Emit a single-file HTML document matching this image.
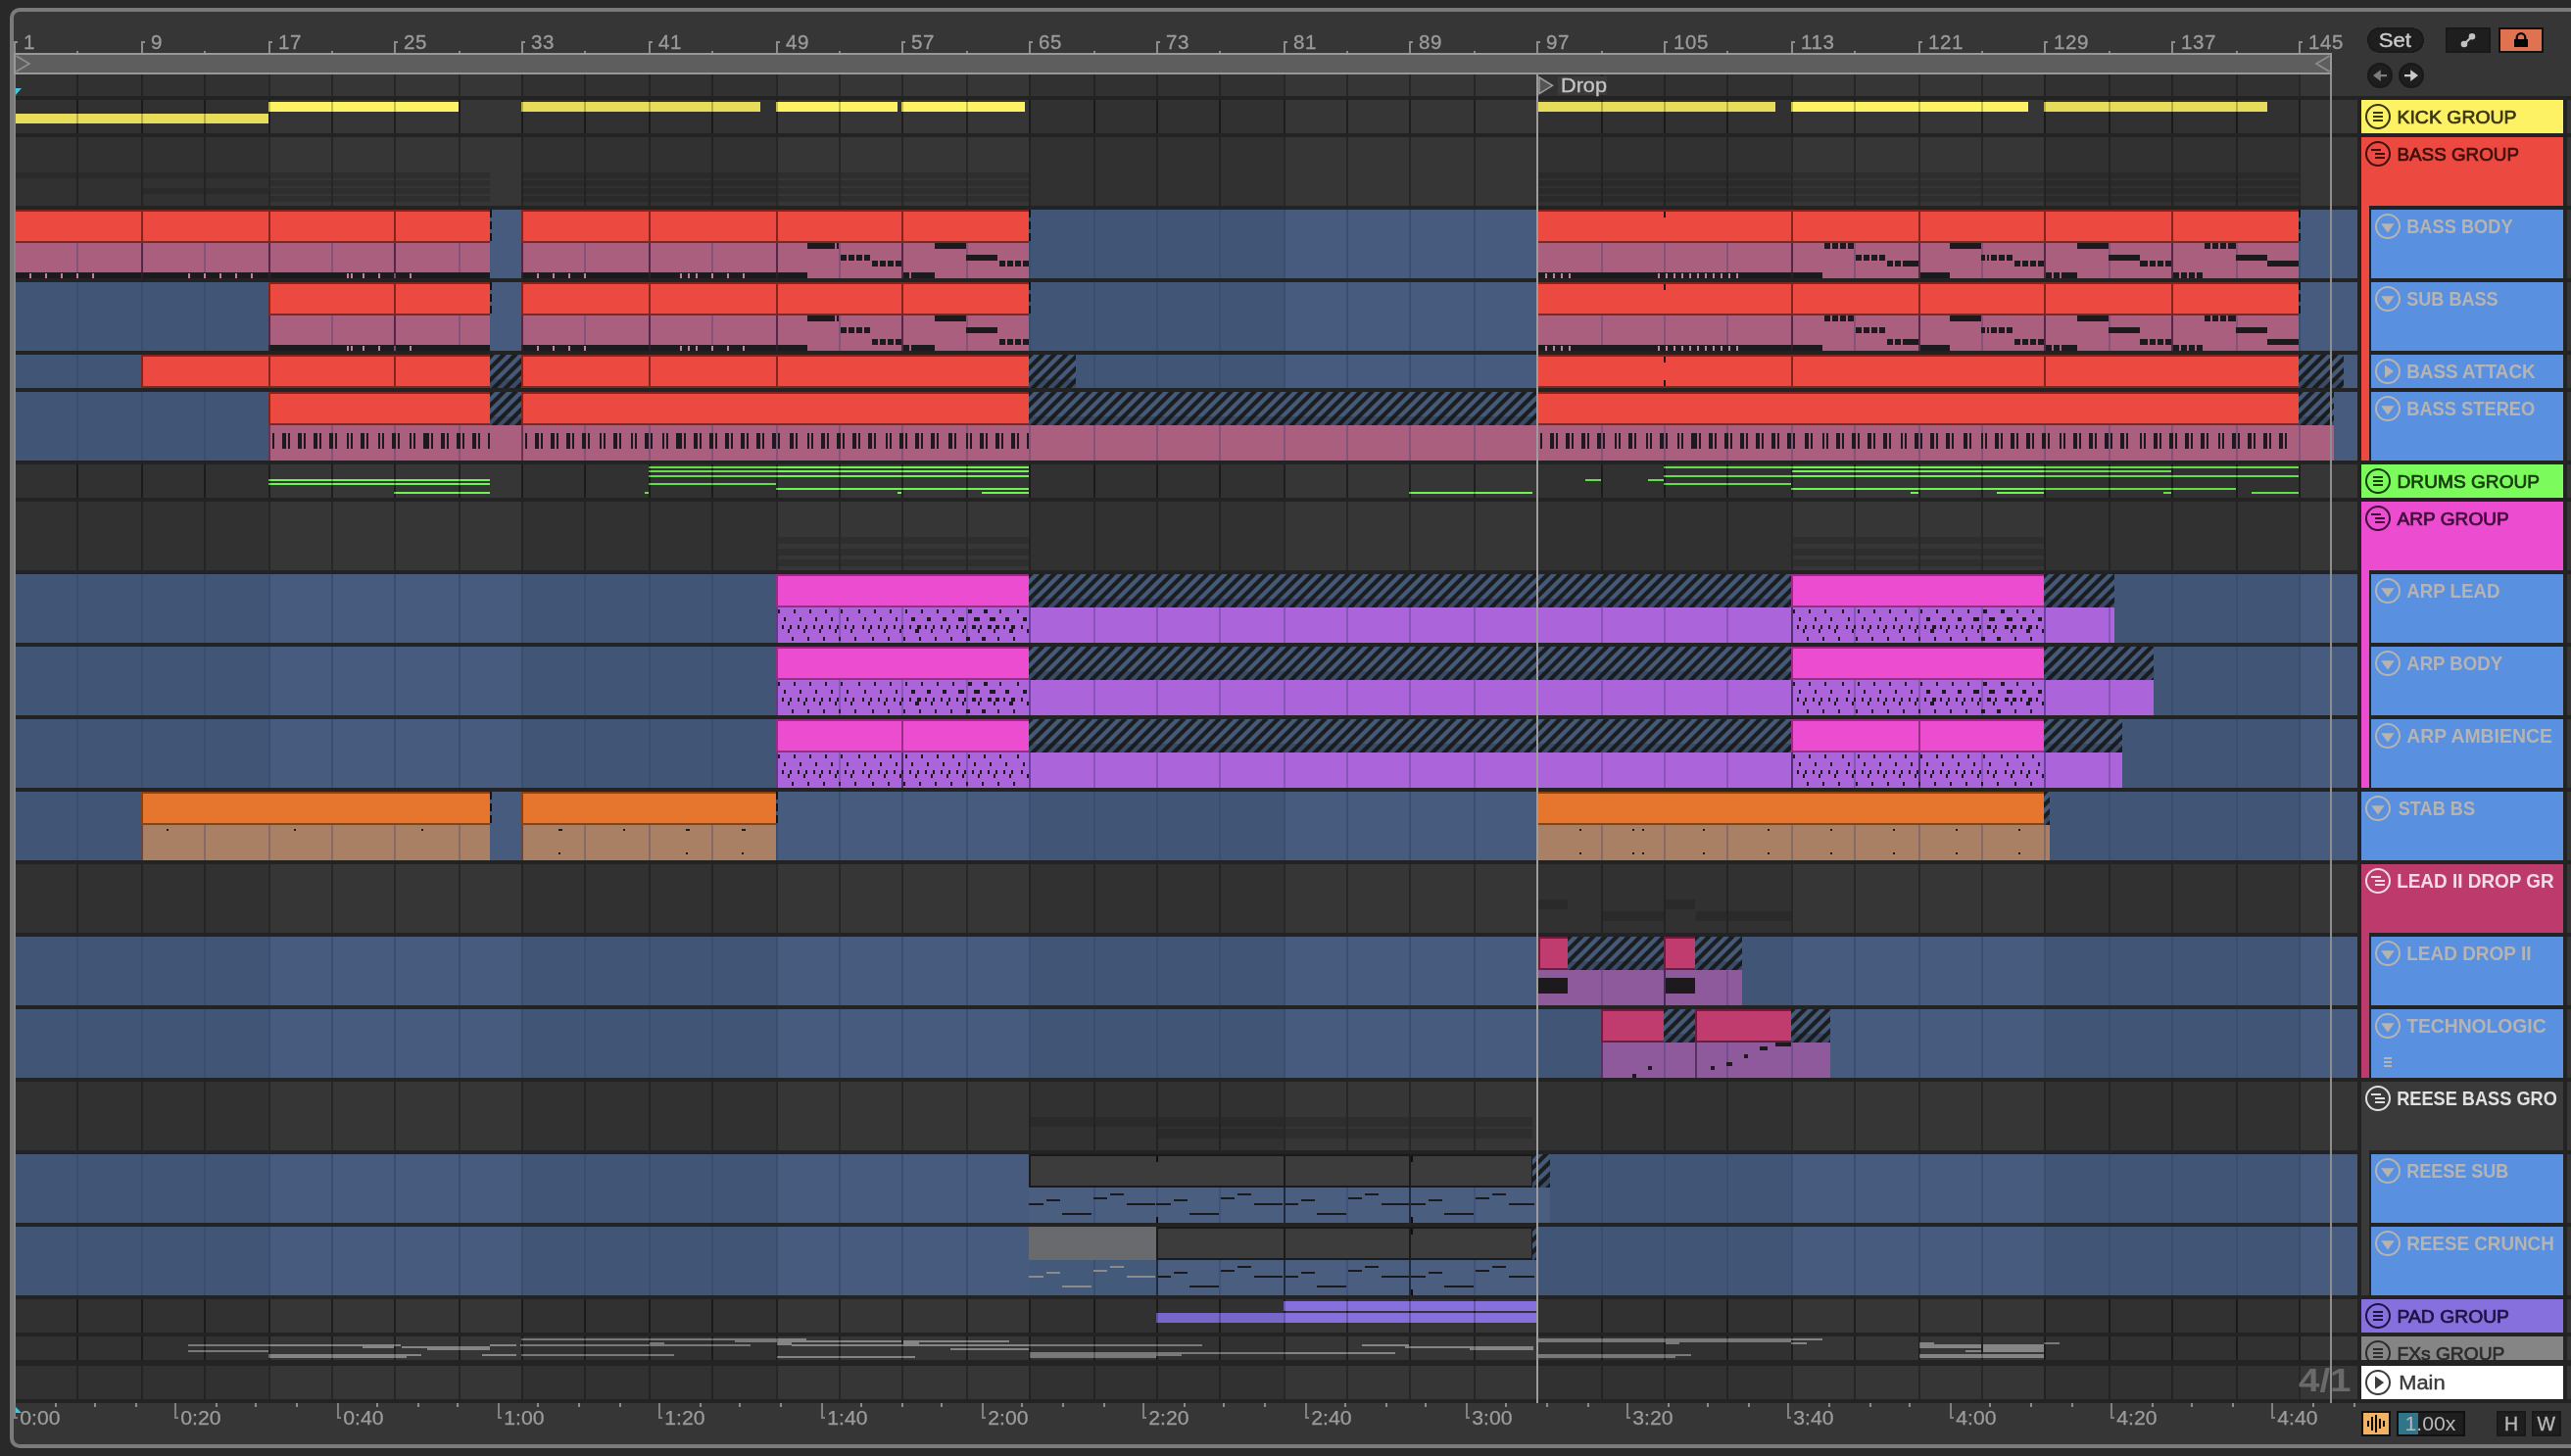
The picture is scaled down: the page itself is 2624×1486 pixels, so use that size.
<!DOCTYPE html>
<html><head><meta charset="utf-8"><title>Arrangement</title>
<style>
html,body{margin:0;padding:0;background:#292929;overflow:hidden;}
body{width:2624px;height:1486px;font-family:"Liberation Sans",sans-serif;}
svg text{font-family:"Liberation Sans",sans-serif;}
svg rect{shape-rendering:crispEdges;}
#root{position:absolute;left:0;top:0;width:2624px;height:1486px;overflow:hidden;will-change:transform;}
</style></head><body>
<div id="root">
<svg width="2624" height="1486" viewBox="0 0 2624 1486">
<defs>
<pattern id="hatch" patternUnits="userSpaceOnUse" width="12" height="12">
<rect width="12" height="12" fill="#1d1d1e"/>
<path d="M6 -1 L12 -1 L-1 12 L-1 6 Z M13 4 L13 10 L10 13 L4 13 Z" fill="#445a7b" shape-rendering="geometricPrecision"/>
</pattern>
</defs>
<g>
<rect x="12" y="10" width="2700" height="1466" rx="8" ry="8" fill="#363636" stroke="#7a7a7a" stroke-width="4" style="shape-rendering:geometricPrecision"/>
<rect x="16" y="98" width="2608" height="1334" fill="#232323"/>
<rect x="2406" y="76" width="214" height="22" fill="#363636"/>
<rect x="2620" y="102" width="4" height="34" fill="#363636"/>
<rect x="2620" y="140" width="4" height="70" fill="#363636"/>
<rect x="2620" y="214" width="4" height="70" fill="#363636"/>
<rect x="2620" y="288" width="4" height="70" fill="#363636"/>
<rect x="2620" y="362" width="4" height="34" fill="#363636"/>
<rect x="2620" y="400" width="4" height="70" fill="#363636"/>
<rect x="2620" y="474" width="4" height="34" fill="#363636"/>
<rect x="2620" y="512" width="4" height="70" fill="#363636"/>
<rect x="2620" y="586" width="4" height="70" fill="#363636"/>
<rect x="2620" y="660" width="4" height="70" fill="#363636"/>
<rect x="2620" y="734" width="4" height="70" fill="#363636"/>
<rect x="2620" y="808" width="4" height="70" fill="#363636"/>
<rect x="2620" y="882" width="4" height="70" fill="#363636"/>
<rect x="2620" y="956" width="4" height="70" fill="#363636"/>
<rect x="2620" y="1030" width="4" height="70" fill="#363636"/>
<rect x="2620" y="1104" width="4" height="70" fill="#363636"/>
<rect x="2620" y="1178" width="4" height="70" fill="#363636"/>
<rect x="2620" y="1252" width="4" height="70" fill="#363636"/>
<rect x="2620" y="1326" width="4" height="34" fill="#363636"/>
<rect x="2620" y="1364" width="4" height="24" fill="#363636"/>
<rect x="2620" y="1394" width="4" height="34" fill="#363636"/>
<rect x="16" y="76" width="2390" height="22" fill="#363636"/>
<rect x="16" y="102" width="2390" height="34" fill="#363636"/>
<rect x="16" y="140" width="2390" height="70" fill="#363636"/>
<rect x="16" y="214" width="2390" height="70" fill="#465b7d"/>
<rect x="16" y="214" width="258" height="70" fill="#415677"/>
<rect x="532" y="214" width="260" height="70" fill="#415677"/>
<rect x="1050" y="214" width="260" height="70" fill="#415677"/>
<rect x="1568" y="214" width="260" height="70" fill="#415677"/>
<rect x="2086" y="214" width="260" height="70" fill="#415677"/>
<rect x="78" y="214" width="2" height="70" fill="#3a4e70"/>
<rect x="144" y="214" width="2" height="70" fill="#3a4e70"/>
<rect x="208" y="214" width="2" height="70" fill="#3a4e70"/>
<rect x="274" y="214" width="2" height="70" fill="#3a4e70"/>
<rect x="338" y="214" width="2" height="70" fill="#3a4e70"/>
<rect x="402" y="214" width="2" height="70" fill="#3a4e70"/>
<rect x="468" y="214" width="2" height="70" fill="#3a4e70"/>
<rect x="532" y="214" width="2" height="70" fill="#3a4e70"/>
<rect x="596" y="214" width="2" height="70" fill="#3a4e70"/>
<rect x="662" y="214" width="2" height="70" fill="#3a4e70"/>
<rect x="726" y="214" width="2" height="70" fill="#3a4e70"/>
<rect x="792" y="214" width="2" height="70" fill="#3a4e70"/>
<rect x="856" y="214" width="2" height="70" fill="#3a4e70"/>
<rect x="920" y="214" width="2" height="70" fill="#3a4e70"/>
<rect x="986" y="214" width="2" height="70" fill="#3a4e70"/>
<rect x="1050" y="214" width="2" height="70" fill="#3a4e70"/>
<rect x="1116" y="214" width="2" height="70" fill="#3a4e70"/>
<rect x="1180" y="214" width="2" height="70" fill="#3a4e70"/>
<rect x="1244" y="214" width="2" height="70" fill="#3a4e70"/>
<rect x="1310" y="214" width="2" height="70" fill="#3a4e70"/>
<rect x="1374" y="214" width="2" height="70" fill="#3a4e70"/>
<rect x="1438" y="214" width="2" height="70" fill="#3a4e70"/>
<rect x="1504" y="214" width="2" height="70" fill="#3a4e70"/>
<rect x="1568" y="214" width="2" height="70" fill="#3a4e70"/>
<rect x="1634" y="214" width="2" height="70" fill="#3a4e70"/>
<rect x="1698" y="214" width="2" height="70" fill="#3a4e70"/>
<rect x="1762" y="214" width="2" height="70" fill="#3a4e70"/>
<rect x="1828" y="214" width="2" height="70" fill="#3a4e70"/>
<rect x="1892" y="214" width="2" height="70" fill="#3a4e70"/>
<rect x="1958" y="214" width="2" height="70" fill="#3a4e70"/>
<rect x="2022" y="214" width="2" height="70" fill="#3a4e70"/>
<rect x="2086" y="214" width="2" height="70" fill="#3a4e70"/>
<rect x="2152" y="214" width="2" height="70" fill="#3a4e70"/>
<rect x="2216" y="214" width="2" height="70" fill="#3a4e70"/>
<rect x="2282" y="214" width="2" height="70" fill="#3a4e70"/>
<rect x="2346" y="214" width="2" height="70" fill="#3a4e70"/>
<rect x="16" y="288" width="2390" height="70" fill="#465b7d"/>
<rect x="16" y="288" width="258" height="70" fill="#415677"/>
<rect x="532" y="288" width="260" height="70" fill="#415677"/>
<rect x="1050" y="288" width="260" height="70" fill="#415677"/>
<rect x="1568" y="288" width="260" height="70" fill="#415677"/>
<rect x="2086" y="288" width="260" height="70" fill="#415677"/>
<rect x="78" y="288" width="2" height="70" fill="#3a4e70"/>
<rect x="144" y="288" width="2" height="70" fill="#3a4e70"/>
<rect x="208" y="288" width="2" height="70" fill="#3a4e70"/>
<rect x="274" y="288" width="2" height="70" fill="#3a4e70"/>
<rect x="338" y="288" width="2" height="70" fill="#3a4e70"/>
<rect x="402" y="288" width="2" height="70" fill="#3a4e70"/>
<rect x="468" y="288" width="2" height="70" fill="#3a4e70"/>
<rect x="532" y="288" width="2" height="70" fill="#3a4e70"/>
<rect x="596" y="288" width="2" height="70" fill="#3a4e70"/>
<rect x="662" y="288" width="2" height="70" fill="#3a4e70"/>
<rect x="726" y="288" width="2" height="70" fill="#3a4e70"/>
<rect x="792" y="288" width="2" height="70" fill="#3a4e70"/>
<rect x="856" y="288" width="2" height="70" fill="#3a4e70"/>
<rect x="920" y="288" width="2" height="70" fill="#3a4e70"/>
<rect x="986" y="288" width="2" height="70" fill="#3a4e70"/>
<rect x="1050" y="288" width="2" height="70" fill="#3a4e70"/>
<rect x="1116" y="288" width="2" height="70" fill="#3a4e70"/>
<rect x="1180" y="288" width="2" height="70" fill="#3a4e70"/>
<rect x="1244" y="288" width="2" height="70" fill="#3a4e70"/>
<rect x="1310" y="288" width="2" height="70" fill="#3a4e70"/>
<rect x="1374" y="288" width="2" height="70" fill="#3a4e70"/>
<rect x="1438" y="288" width="2" height="70" fill="#3a4e70"/>
<rect x="1504" y="288" width="2" height="70" fill="#3a4e70"/>
<rect x="1568" y="288" width="2" height="70" fill="#3a4e70"/>
<rect x="1634" y="288" width="2" height="70" fill="#3a4e70"/>
<rect x="1698" y="288" width="2" height="70" fill="#3a4e70"/>
<rect x="1762" y="288" width="2" height="70" fill="#3a4e70"/>
<rect x="1828" y="288" width="2" height="70" fill="#3a4e70"/>
<rect x="1892" y="288" width="2" height="70" fill="#3a4e70"/>
<rect x="1958" y="288" width="2" height="70" fill="#3a4e70"/>
<rect x="2022" y="288" width="2" height="70" fill="#3a4e70"/>
<rect x="2086" y="288" width="2" height="70" fill="#3a4e70"/>
<rect x="2152" y="288" width="2" height="70" fill="#3a4e70"/>
<rect x="2216" y="288" width="2" height="70" fill="#3a4e70"/>
<rect x="2282" y="288" width="2" height="70" fill="#3a4e70"/>
<rect x="2346" y="288" width="2" height="70" fill="#3a4e70"/>
<rect x="16" y="362" width="2390" height="34" fill="#465b7d"/>
<rect x="16" y="362" width="258" height="34" fill="#415677"/>
<rect x="532" y="362" width="260" height="34" fill="#415677"/>
<rect x="1050" y="362" width="260" height="34" fill="#415677"/>
<rect x="1568" y="362" width="260" height="34" fill="#415677"/>
<rect x="2086" y="362" width="260" height="34" fill="#415677"/>
<rect x="78" y="362" width="2" height="34" fill="#3a4e70"/>
<rect x="144" y="362" width="2" height="34" fill="#3a4e70"/>
<rect x="208" y="362" width="2" height="34" fill="#3a4e70"/>
<rect x="274" y="362" width="2" height="34" fill="#3a4e70"/>
<rect x="338" y="362" width="2" height="34" fill="#3a4e70"/>
<rect x="402" y="362" width="2" height="34" fill="#3a4e70"/>
<rect x="468" y="362" width="2" height="34" fill="#3a4e70"/>
<rect x="532" y="362" width="2" height="34" fill="#3a4e70"/>
<rect x="596" y="362" width="2" height="34" fill="#3a4e70"/>
<rect x="662" y="362" width="2" height="34" fill="#3a4e70"/>
<rect x="726" y="362" width="2" height="34" fill="#3a4e70"/>
<rect x="792" y="362" width="2" height="34" fill="#3a4e70"/>
<rect x="856" y="362" width="2" height="34" fill="#3a4e70"/>
<rect x="920" y="362" width="2" height="34" fill="#3a4e70"/>
<rect x="986" y="362" width="2" height="34" fill="#3a4e70"/>
<rect x="1050" y="362" width="2" height="34" fill="#3a4e70"/>
<rect x="1116" y="362" width="2" height="34" fill="#3a4e70"/>
<rect x="1180" y="362" width="2" height="34" fill="#3a4e70"/>
<rect x="1244" y="362" width="2" height="34" fill="#3a4e70"/>
<rect x="1310" y="362" width="2" height="34" fill="#3a4e70"/>
<rect x="1374" y="362" width="2" height="34" fill="#3a4e70"/>
<rect x="1438" y="362" width="2" height="34" fill="#3a4e70"/>
<rect x="1504" y="362" width="2" height="34" fill="#3a4e70"/>
<rect x="1568" y="362" width="2" height="34" fill="#3a4e70"/>
<rect x="1634" y="362" width="2" height="34" fill="#3a4e70"/>
<rect x="1698" y="362" width="2" height="34" fill="#3a4e70"/>
<rect x="1762" y="362" width="2" height="34" fill="#3a4e70"/>
<rect x="1828" y="362" width="2" height="34" fill="#3a4e70"/>
<rect x="1892" y="362" width="2" height="34" fill="#3a4e70"/>
<rect x="1958" y="362" width="2" height="34" fill="#3a4e70"/>
<rect x="2022" y="362" width="2" height="34" fill="#3a4e70"/>
<rect x="2086" y="362" width="2" height="34" fill="#3a4e70"/>
<rect x="2152" y="362" width="2" height="34" fill="#3a4e70"/>
<rect x="2216" y="362" width="2" height="34" fill="#3a4e70"/>
<rect x="2282" y="362" width="2" height="34" fill="#3a4e70"/>
<rect x="2346" y="362" width="2" height="34" fill="#3a4e70"/>
<rect x="16" y="400" width="2390" height="70" fill="#465b7d"/>
<rect x="16" y="400" width="258" height="70" fill="#415677"/>
<rect x="532" y="400" width="260" height="70" fill="#415677"/>
<rect x="1050" y="400" width="260" height="70" fill="#415677"/>
<rect x="1568" y="400" width="260" height="70" fill="#415677"/>
<rect x="2086" y="400" width="260" height="70" fill="#415677"/>
<rect x="78" y="400" width="2" height="70" fill="#3a4e70"/>
<rect x="144" y="400" width="2" height="70" fill="#3a4e70"/>
<rect x="208" y="400" width="2" height="70" fill="#3a4e70"/>
<rect x="274" y="400" width="2" height="70" fill="#3a4e70"/>
<rect x="338" y="400" width="2" height="70" fill="#3a4e70"/>
<rect x="402" y="400" width="2" height="70" fill="#3a4e70"/>
<rect x="468" y="400" width="2" height="70" fill="#3a4e70"/>
<rect x="532" y="400" width="2" height="70" fill="#3a4e70"/>
<rect x="596" y="400" width="2" height="70" fill="#3a4e70"/>
<rect x="662" y="400" width="2" height="70" fill="#3a4e70"/>
<rect x="726" y="400" width="2" height="70" fill="#3a4e70"/>
<rect x="792" y="400" width="2" height="70" fill="#3a4e70"/>
<rect x="856" y="400" width="2" height="70" fill="#3a4e70"/>
<rect x="920" y="400" width="2" height="70" fill="#3a4e70"/>
<rect x="986" y="400" width="2" height="70" fill="#3a4e70"/>
<rect x="1050" y="400" width="2" height="70" fill="#3a4e70"/>
<rect x="1116" y="400" width="2" height="70" fill="#3a4e70"/>
<rect x="1180" y="400" width="2" height="70" fill="#3a4e70"/>
<rect x="1244" y="400" width="2" height="70" fill="#3a4e70"/>
<rect x="1310" y="400" width="2" height="70" fill="#3a4e70"/>
<rect x="1374" y="400" width="2" height="70" fill="#3a4e70"/>
<rect x="1438" y="400" width="2" height="70" fill="#3a4e70"/>
<rect x="1504" y="400" width="2" height="70" fill="#3a4e70"/>
<rect x="1568" y="400" width="2" height="70" fill="#3a4e70"/>
<rect x="1634" y="400" width="2" height="70" fill="#3a4e70"/>
<rect x="1698" y="400" width="2" height="70" fill="#3a4e70"/>
<rect x="1762" y="400" width="2" height="70" fill="#3a4e70"/>
<rect x="1828" y="400" width="2" height="70" fill="#3a4e70"/>
<rect x="1892" y="400" width="2" height="70" fill="#3a4e70"/>
<rect x="1958" y="400" width="2" height="70" fill="#3a4e70"/>
<rect x="2022" y="400" width="2" height="70" fill="#3a4e70"/>
<rect x="2086" y="400" width="2" height="70" fill="#3a4e70"/>
<rect x="2152" y="400" width="2" height="70" fill="#3a4e70"/>
<rect x="2216" y="400" width="2" height="70" fill="#3a4e70"/>
<rect x="2282" y="400" width="2" height="70" fill="#3a4e70"/>
<rect x="2346" y="400" width="2" height="70" fill="#3a4e70"/>
<rect x="16" y="474" width="2390" height="34" fill="#363636"/>
<rect x="16" y="512" width="2390" height="70" fill="#363636"/>
<rect x="16" y="586" width="2390" height="70" fill="#465b7d"/>
<rect x="16" y="586" width="258" height="70" fill="#415677"/>
<rect x="532" y="586" width="260" height="70" fill="#415677"/>
<rect x="1050" y="586" width="260" height="70" fill="#415677"/>
<rect x="1568" y="586" width="260" height="70" fill="#415677"/>
<rect x="2086" y="586" width="260" height="70" fill="#415677"/>
<rect x="78" y="586" width="2" height="70" fill="#3a4e70"/>
<rect x="144" y="586" width="2" height="70" fill="#3a4e70"/>
<rect x="208" y="586" width="2" height="70" fill="#3a4e70"/>
<rect x="274" y="586" width="2" height="70" fill="#3a4e70"/>
<rect x="338" y="586" width="2" height="70" fill="#3a4e70"/>
<rect x="402" y="586" width="2" height="70" fill="#3a4e70"/>
<rect x="468" y="586" width="2" height="70" fill="#3a4e70"/>
<rect x="532" y="586" width="2" height="70" fill="#3a4e70"/>
<rect x="596" y="586" width="2" height="70" fill="#3a4e70"/>
<rect x="662" y="586" width="2" height="70" fill="#3a4e70"/>
<rect x="726" y="586" width="2" height="70" fill="#3a4e70"/>
<rect x="792" y="586" width="2" height="70" fill="#3a4e70"/>
<rect x="856" y="586" width="2" height="70" fill="#3a4e70"/>
<rect x="920" y="586" width="2" height="70" fill="#3a4e70"/>
<rect x="986" y="586" width="2" height="70" fill="#3a4e70"/>
<rect x="1050" y="586" width="2" height="70" fill="#3a4e70"/>
<rect x="1116" y="586" width="2" height="70" fill="#3a4e70"/>
<rect x="1180" y="586" width="2" height="70" fill="#3a4e70"/>
<rect x="1244" y="586" width="2" height="70" fill="#3a4e70"/>
<rect x="1310" y="586" width="2" height="70" fill="#3a4e70"/>
<rect x="1374" y="586" width="2" height="70" fill="#3a4e70"/>
<rect x="1438" y="586" width="2" height="70" fill="#3a4e70"/>
<rect x="1504" y="586" width="2" height="70" fill="#3a4e70"/>
<rect x="1568" y="586" width="2" height="70" fill="#3a4e70"/>
<rect x="1634" y="586" width="2" height="70" fill="#3a4e70"/>
<rect x="1698" y="586" width="2" height="70" fill="#3a4e70"/>
<rect x="1762" y="586" width="2" height="70" fill="#3a4e70"/>
<rect x="1828" y="586" width="2" height="70" fill="#3a4e70"/>
<rect x="1892" y="586" width="2" height="70" fill="#3a4e70"/>
<rect x="1958" y="586" width="2" height="70" fill="#3a4e70"/>
<rect x="2022" y="586" width="2" height="70" fill="#3a4e70"/>
<rect x="2086" y="586" width="2" height="70" fill="#3a4e70"/>
<rect x="2152" y="586" width="2" height="70" fill="#3a4e70"/>
<rect x="2216" y="586" width="2" height="70" fill="#3a4e70"/>
<rect x="2282" y="586" width="2" height="70" fill="#3a4e70"/>
<rect x="2346" y="586" width="2" height="70" fill="#3a4e70"/>
<rect x="16" y="660" width="2390" height="70" fill="#465b7d"/>
<rect x="16" y="660" width="258" height="70" fill="#415677"/>
<rect x="532" y="660" width="260" height="70" fill="#415677"/>
<rect x="1050" y="660" width="260" height="70" fill="#415677"/>
<rect x="1568" y="660" width="260" height="70" fill="#415677"/>
<rect x="2086" y="660" width="260" height="70" fill="#415677"/>
<rect x="78" y="660" width="2" height="70" fill="#3a4e70"/>
<rect x="144" y="660" width="2" height="70" fill="#3a4e70"/>
<rect x="208" y="660" width="2" height="70" fill="#3a4e70"/>
<rect x="274" y="660" width="2" height="70" fill="#3a4e70"/>
<rect x="338" y="660" width="2" height="70" fill="#3a4e70"/>
<rect x="402" y="660" width="2" height="70" fill="#3a4e70"/>
<rect x="468" y="660" width="2" height="70" fill="#3a4e70"/>
<rect x="532" y="660" width="2" height="70" fill="#3a4e70"/>
<rect x="596" y="660" width="2" height="70" fill="#3a4e70"/>
<rect x="662" y="660" width="2" height="70" fill="#3a4e70"/>
<rect x="726" y="660" width="2" height="70" fill="#3a4e70"/>
<rect x="792" y="660" width="2" height="70" fill="#3a4e70"/>
<rect x="856" y="660" width="2" height="70" fill="#3a4e70"/>
<rect x="920" y="660" width="2" height="70" fill="#3a4e70"/>
<rect x="986" y="660" width="2" height="70" fill="#3a4e70"/>
<rect x="1050" y="660" width="2" height="70" fill="#3a4e70"/>
<rect x="1116" y="660" width="2" height="70" fill="#3a4e70"/>
<rect x="1180" y="660" width="2" height="70" fill="#3a4e70"/>
<rect x="1244" y="660" width="2" height="70" fill="#3a4e70"/>
<rect x="1310" y="660" width="2" height="70" fill="#3a4e70"/>
<rect x="1374" y="660" width="2" height="70" fill="#3a4e70"/>
<rect x="1438" y="660" width="2" height="70" fill="#3a4e70"/>
<rect x="1504" y="660" width="2" height="70" fill="#3a4e70"/>
<rect x="1568" y="660" width="2" height="70" fill="#3a4e70"/>
<rect x="1634" y="660" width="2" height="70" fill="#3a4e70"/>
<rect x="1698" y="660" width="2" height="70" fill="#3a4e70"/>
<rect x="1762" y="660" width="2" height="70" fill="#3a4e70"/>
<rect x="1828" y="660" width="2" height="70" fill="#3a4e70"/>
<rect x="1892" y="660" width="2" height="70" fill="#3a4e70"/>
<rect x="1958" y="660" width="2" height="70" fill="#3a4e70"/>
<rect x="2022" y="660" width="2" height="70" fill="#3a4e70"/>
<rect x="2086" y="660" width="2" height="70" fill="#3a4e70"/>
<rect x="2152" y="660" width="2" height="70" fill="#3a4e70"/>
<rect x="2216" y="660" width="2" height="70" fill="#3a4e70"/>
<rect x="2282" y="660" width="2" height="70" fill="#3a4e70"/>
<rect x="2346" y="660" width="2" height="70" fill="#3a4e70"/>
<rect x="16" y="734" width="2390" height="70" fill="#465b7d"/>
<rect x="16" y="734" width="258" height="70" fill="#415677"/>
<rect x="532" y="734" width="260" height="70" fill="#415677"/>
<rect x="1050" y="734" width="260" height="70" fill="#415677"/>
<rect x="1568" y="734" width="260" height="70" fill="#415677"/>
<rect x="2086" y="734" width="260" height="70" fill="#415677"/>
<rect x="78" y="734" width="2" height="70" fill="#3a4e70"/>
<rect x="144" y="734" width="2" height="70" fill="#3a4e70"/>
<rect x="208" y="734" width="2" height="70" fill="#3a4e70"/>
<rect x="274" y="734" width="2" height="70" fill="#3a4e70"/>
<rect x="338" y="734" width="2" height="70" fill="#3a4e70"/>
<rect x="402" y="734" width="2" height="70" fill="#3a4e70"/>
<rect x="468" y="734" width="2" height="70" fill="#3a4e70"/>
<rect x="532" y="734" width="2" height="70" fill="#3a4e70"/>
<rect x="596" y="734" width="2" height="70" fill="#3a4e70"/>
<rect x="662" y="734" width="2" height="70" fill="#3a4e70"/>
<rect x="726" y="734" width="2" height="70" fill="#3a4e70"/>
<rect x="792" y="734" width="2" height="70" fill="#3a4e70"/>
<rect x="856" y="734" width="2" height="70" fill="#3a4e70"/>
<rect x="920" y="734" width="2" height="70" fill="#3a4e70"/>
<rect x="986" y="734" width="2" height="70" fill="#3a4e70"/>
<rect x="1050" y="734" width="2" height="70" fill="#3a4e70"/>
<rect x="1116" y="734" width="2" height="70" fill="#3a4e70"/>
<rect x="1180" y="734" width="2" height="70" fill="#3a4e70"/>
<rect x="1244" y="734" width="2" height="70" fill="#3a4e70"/>
<rect x="1310" y="734" width="2" height="70" fill="#3a4e70"/>
<rect x="1374" y="734" width="2" height="70" fill="#3a4e70"/>
<rect x="1438" y="734" width="2" height="70" fill="#3a4e70"/>
<rect x="1504" y="734" width="2" height="70" fill="#3a4e70"/>
<rect x="1568" y="734" width="2" height="70" fill="#3a4e70"/>
<rect x="1634" y="734" width="2" height="70" fill="#3a4e70"/>
<rect x="1698" y="734" width="2" height="70" fill="#3a4e70"/>
<rect x="1762" y="734" width="2" height="70" fill="#3a4e70"/>
<rect x="1828" y="734" width="2" height="70" fill="#3a4e70"/>
<rect x="1892" y="734" width="2" height="70" fill="#3a4e70"/>
<rect x="1958" y="734" width="2" height="70" fill="#3a4e70"/>
<rect x="2022" y="734" width="2" height="70" fill="#3a4e70"/>
<rect x="2086" y="734" width="2" height="70" fill="#3a4e70"/>
<rect x="2152" y="734" width="2" height="70" fill="#3a4e70"/>
<rect x="2216" y="734" width="2" height="70" fill="#3a4e70"/>
<rect x="2282" y="734" width="2" height="70" fill="#3a4e70"/>
<rect x="2346" y="734" width="2" height="70" fill="#3a4e70"/>
<rect x="16" y="808" width="2390" height="70" fill="#465b7d"/>
<rect x="16" y="808" width="258" height="70" fill="#415677"/>
<rect x="532" y="808" width="260" height="70" fill="#415677"/>
<rect x="1050" y="808" width="260" height="70" fill="#415677"/>
<rect x="1568" y="808" width="260" height="70" fill="#415677"/>
<rect x="2086" y="808" width="260" height="70" fill="#415677"/>
<rect x="78" y="808" width="2" height="70" fill="#3a4e70"/>
<rect x="144" y="808" width="2" height="70" fill="#3a4e70"/>
<rect x="208" y="808" width="2" height="70" fill="#3a4e70"/>
<rect x="274" y="808" width="2" height="70" fill="#3a4e70"/>
<rect x="338" y="808" width="2" height="70" fill="#3a4e70"/>
<rect x="402" y="808" width="2" height="70" fill="#3a4e70"/>
<rect x="468" y="808" width="2" height="70" fill="#3a4e70"/>
<rect x="532" y="808" width="2" height="70" fill="#3a4e70"/>
<rect x="596" y="808" width="2" height="70" fill="#3a4e70"/>
<rect x="662" y="808" width="2" height="70" fill="#3a4e70"/>
<rect x="726" y="808" width="2" height="70" fill="#3a4e70"/>
<rect x="792" y="808" width="2" height="70" fill="#3a4e70"/>
<rect x="856" y="808" width="2" height="70" fill="#3a4e70"/>
<rect x="920" y="808" width="2" height="70" fill="#3a4e70"/>
<rect x="986" y="808" width="2" height="70" fill="#3a4e70"/>
<rect x="1050" y="808" width="2" height="70" fill="#3a4e70"/>
<rect x="1116" y="808" width="2" height="70" fill="#3a4e70"/>
<rect x="1180" y="808" width="2" height="70" fill="#3a4e70"/>
<rect x="1244" y="808" width="2" height="70" fill="#3a4e70"/>
<rect x="1310" y="808" width="2" height="70" fill="#3a4e70"/>
<rect x="1374" y="808" width="2" height="70" fill="#3a4e70"/>
<rect x="1438" y="808" width="2" height="70" fill="#3a4e70"/>
<rect x="1504" y="808" width="2" height="70" fill="#3a4e70"/>
<rect x="1568" y="808" width="2" height="70" fill="#3a4e70"/>
<rect x="1634" y="808" width="2" height="70" fill="#3a4e70"/>
<rect x="1698" y="808" width="2" height="70" fill="#3a4e70"/>
<rect x="1762" y="808" width="2" height="70" fill="#3a4e70"/>
<rect x="1828" y="808" width="2" height="70" fill="#3a4e70"/>
<rect x="1892" y="808" width="2" height="70" fill="#3a4e70"/>
<rect x="1958" y="808" width="2" height="70" fill="#3a4e70"/>
<rect x="2022" y="808" width="2" height="70" fill="#3a4e70"/>
<rect x="2086" y="808" width="2" height="70" fill="#3a4e70"/>
<rect x="2152" y="808" width="2" height="70" fill="#3a4e70"/>
<rect x="2216" y="808" width="2" height="70" fill="#3a4e70"/>
<rect x="2282" y="808" width="2" height="70" fill="#3a4e70"/>
<rect x="2346" y="808" width="2" height="70" fill="#3a4e70"/>
<rect x="16" y="882" width="2390" height="70" fill="#363636"/>
<rect x="16" y="956" width="2390" height="70" fill="#465b7d"/>
<rect x="16" y="956" width="258" height="70" fill="#415677"/>
<rect x="532" y="956" width="260" height="70" fill="#415677"/>
<rect x="1050" y="956" width="260" height="70" fill="#415677"/>
<rect x="1568" y="956" width="260" height="70" fill="#415677"/>
<rect x="2086" y="956" width="260" height="70" fill="#415677"/>
<rect x="78" y="956" width="2" height="70" fill="#3a4e70"/>
<rect x="144" y="956" width="2" height="70" fill="#3a4e70"/>
<rect x="208" y="956" width="2" height="70" fill="#3a4e70"/>
<rect x="274" y="956" width="2" height="70" fill="#3a4e70"/>
<rect x="338" y="956" width="2" height="70" fill="#3a4e70"/>
<rect x="402" y="956" width="2" height="70" fill="#3a4e70"/>
<rect x="468" y="956" width="2" height="70" fill="#3a4e70"/>
<rect x="532" y="956" width="2" height="70" fill="#3a4e70"/>
<rect x="596" y="956" width="2" height="70" fill="#3a4e70"/>
<rect x="662" y="956" width="2" height="70" fill="#3a4e70"/>
<rect x="726" y="956" width="2" height="70" fill="#3a4e70"/>
<rect x="792" y="956" width="2" height="70" fill="#3a4e70"/>
<rect x="856" y="956" width="2" height="70" fill="#3a4e70"/>
<rect x="920" y="956" width="2" height="70" fill="#3a4e70"/>
<rect x="986" y="956" width="2" height="70" fill="#3a4e70"/>
<rect x="1050" y="956" width="2" height="70" fill="#3a4e70"/>
<rect x="1116" y="956" width="2" height="70" fill="#3a4e70"/>
<rect x="1180" y="956" width="2" height="70" fill="#3a4e70"/>
<rect x="1244" y="956" width="2" height="70" fill="#3a4e70"/>
<rect x="1310" y="956" width="2" height="70" fill="#3a4e70"/>
<rect x="1374" y="956" width="2" height="70" fill="#3a4e70"/>
<rect x="1438" y="956" width="2" height="70" fill="#3a4e70"/>
<rect x="1504" y="956" width="2" height="70" fill="#3a4e70"/>
<rect x="1568" y="956" width="2" height="70" fill="#3a4e70"/>
<rect x="1634" y="956" width="2" height="70" fill="#3a4e70"/>
<rect x="1698" y="956" width="2" height="70" fill="#3a4e70"/>
<rect x="1762" y="956" width="2" height="70" fill="#3a4e70"/>
<rect x="1828" y="956" width="2" height="70" fill="#3a4e70"/>
<rect x="1892" y="956" width="2" height="70" fill="#3a4e70"/>
<rect x="1958" y="956" width="2" height="70" fill="#3a4e70"/>
<rect x="2022" y="956" width="2" height="70" fill="#3a4e70"/>
<rect x="2086" y="956" width="2" height="70" fill="#3a4e70"/>
<rect x="2152" y="956" width="2" height="70" fill="#3a4e70"/>
<rect x="2216" y="956" width="2" height="70" fill="#3a4e70"/>
<rect x="2282" y="956" width="2" height="70" fill="#3a4e70"/>
<rect x="2346" y="956" width="2" height="70" fill="#3a4e70"/>
<rect x="16" y="1030" width="2390" height="70" fill="#465b7d"/>
<rect x="16" y="1030" width="258" height="70" fill="#415677"/>
<rect x="532" y="1030" width="260" height="70" fill="#415677"/>
<rect x="1050" y="1030" width="260" height="70" fill="#415677"/>
<rect x="1568" y="1030" width="260" height="70" fill="#415677"/>
<rect x="2086" y="1030" width="260" height="70" fill="#415677"/>
<rect x="78" y="1030" width="2" height="70" fill="#3a4e70"/>
<rect x="144" y="1030" width="2" height="70" fill="#3a4e70"/>
<rect x="208" y="1030" width="2" height="70" fill="#3a4e70"/>
<rect x="274" y="1030" width="2" height="70" fill="#3a4e70"/>
<rect x="338" y="1030" width="2" height="70" fill="#3a4e70"/>
<rect x="402" y="1030" width="2" height="70" fill="#3a4e70"/>
<rect x="468" y="1030" width="2" height="70" fill="#3a4e70"/>
<rect x="532" y="1030" width="2" height="70" fill="#3a4e70"/>
<rect x="596" y="1030" width="2" height="70" fill="#3a4e70"/>
<rect x="662" y="1030" width="2" height="70" fill="#3a4e70"/>
<rect x="726" y="1030" width="2" height="70" fill="#3a4e70"/>
<rect x="792" y="1030" width="2" height="70" fill="#3a4e70"/>
<rect x="856" y="1030" width="2" height="70" fill="#3a4e70"/>
<rect x="920" y="1030" width="2" height="70" fill="#3a4e70"/>
<rect x="986" y="1030" width="2" height="70" fill="#3a4e70"/>
<rect x="1050" y="1030" width="2" height="70" fill="#3a4e70"/>
<rect x="1116" y="1030" width="2" height="70" fill="#3a4e70"/>
<rect x="1180" y="1030" width="2" height="70" fill="#3a4e70"/>
<rect x="1244" y="1030" width="2" height="70" fill="#3a4e70"/>
<rect x="1310" y="1030" width="2" height="70" fill="#3a4e70"/>
<rect x="1374" y="1030" width="2" height="70" fill="#3a4e70"/>
<rect x="1438" y="1030" width="2" height="70" fill="#3a4e70"/>
<rect x="1504" y="1030" width="2" height="70" fill="#3a4e70"/>
<rect x="1568" y="1030" width="2" height="70" fill="#3a4e70"/>
<rect x="1634" y="1030" width="2" height="70" fill="#3a4e70"/>
<rect x="1698" y="1030" width="2" height="70" fill="#3a4e70"/>
<rect x="1762" y="1030" width="2" height="70" fill="#3a4e70"/>
<rect x="1828" y="1030" width="2" height="70" fill="#3a4e70"/>
<rect x="1892" y="1030" width="2" height="70" fill="#3a4e70"/>
<rect x="1958" y="1030" width="2" height="70" fill="#3a4e70"/>
<rect x="2022" y="1030" width="2" height="70" fill="#3a4e70"/>
<rect x="2086" y="1030" width="2" height="70" fill="#3a4e70"/>
<rect x="2152" y="1030" width="2" height="70" fill="#3a4e70"/>
<rect x="2216" y="1030" width="2" height="70" fill="#3a4e70"/>
<rect x="2282" y="1030" width="2" height="70" fill="#3a4e70"/>
<rect x="2346" y="1030" width="2" height="70" fill="#3a4e70"/>
<rect x="16" y="1104" width="2390" height="70" fill="#363636"/>
<rect x="16" y="1178" width="2390" height="70" fill="#465b7d"/>
<rect x="16" y="1178" width="258" height="70" fill="#415677"/>
<rect x="532" y="1178" width="260" height="70" fill="#415677"/>
<rect x="1050" y="1178" width="260" height="70" fill="#415677"/>
<rect x="1568" y="1178" width="260" height="70" fill="#415677"/>
<rect x="2086" y="1178" width="260" height="70" fill="#415677"/>
<rect x="78" y="1178" width="2" height="70" fill="#3a4e70"/>
<rect x="144" y="1178" width="2" height="70" fill="#3a4e70"/>
<rect x="208" y="1178" width="2" height="70" fill="#3a4e70"/>
<rect x="274" y="1178" width="2" height="70" fill="#3a4e70"/>
<rect x="338" y="1178" width="2" height="70" fill="#3a4e70"/>
<rect x="402" y="1178" width="2" height="70" fill="#3a4e70"/>
<rect x="468" y="1178" width="2" height="70" fill="#3a4e70"/>
<rect x="532" y="1178" width="2" height="70" fill="#3a4e70"/>
<rect x="596" y="1178" width="2" height="70" fill="#3a4e70"/>
<rect x="662" y="1178" width="2" height="70" fill="#3a4e70"/>
<rect x="726" y="1178" width="2" height="70" fill="#3a4e70"/>
<rect x="792" y="1178" width="2" height="70" fill="#3a4e70"/>
<rect x="856" y="1178" width="2" height="70" fill="#3a4e70"/>
<rect x="920" y="1178" width="2" height="70" fill="#3a4e70"/>
<rect x="986" y="1178" width="2" height="70" fill="#3a4e70"/>
<rect x="1050" y="1178" width="2" height="70" fill="#3a4e70"/>
<rect x="1116" y="1178" width="2" height="70" fill="#3a4e70"/>
<rect x="1180" y="1178" width="2" height="70" fill="#3a4e70"/>
<rect x="1244" y="1178" width="2" height="70" fill="#3a4e70"/>
<rect x="1310" y="1178" width="2" height="70" fill="#3a4e70"/>
<rect x="1374" y="1178" width="2" height="70" fill="#3a4e70"/>
<rect x="1438" y="1178" width="2" height="70" fill="#3a4e70"/>
<rect x="1504" y="1178" width="2" height="70" fill="#3a4e70"/>
<rect x="1568" y="1178" width="2" height="70" fill="#3a4e70"/>
<rect x="1634" y="1178" width="2" height="70" fill="#3a4e70"/>
<rect x="1698" y="1178" width="2" height="70" fill="#3a4e70"/>
<rect x="1762" y="1178" width="2" height="70" fill="#3a4e70"/>
<rect x="1828" y="1178" width="2" height="70" fill="#3a4e70"/>
<rect x="1892" y="1178" width="2" height="70" fill="#3a4e70"/>
<rect x="1958" y="1178" width="2" height="70" fill="#3a4e70"/>
<rect x="2022" y="1178" width="2" height="70" fill="#3a4e70"/>
<rect x="2086" y="1178" width="2" height="70" fill="#3a4e70"/>
<rect x="2152" y="1178" width="2" height="70" fill="#3a4e70"/>
<rect x="2216" y="1178" width="2" height="70" fill="#3a4e70"/>
<rect x="2282" y="1178" width="2" height="70" fill="#3a4e70"/>
<rect x="2346" y="1178" width="2" height="70" fill="#3a4e70"/>
<rect x="16" y="1252" width="2390" height="70" fill="#465b7d"/>
<rect x="16" y="1252" width="258" height="70" fill="#415677"/>
<rect x="532" y="1252" width="260" height="70" fill="#415677"/>
<rect x="1050" y="1252" width="260" height="70" fill="#415677"/>
<rect x="1568" y="1252" width="260" height="70" fill="#415677"/>
<rect x="2086" y="1252" width="260" height="70" fill="#415677"/>
<rect x="78" y="1252" width="2" height="70" fill="#3a4e70"/>
<rect x="144" y="1252" width="2" height="70" fill="#3a4e70"/>
<rect x="208" y="1252" width="2" height="70" fill="#3a4e70"/>
<rect x="274" y="1252" width="2" height="70" fill="#3a4e70"/>
<rect x="338" y="1252" width="2" height="70" fill="#3a4e70"/>
<rect x="402" y="1252" width="2" height="70" fill="#3a4e70"/>
<rect x="468" y="1252" width="2" height="70" fill="#3a4e70"/>
<rect x="532" y="1252" width="2" height="70" fill="#3a4e70"/>
<rect x="596" y="1252" width="2" height="70" fill="#3a4e70"/>
<rect x="662" y="1252" width="2" height="70" fill="#3a4e70"/>
<rect x="726" y="1252" width="2" height="70" fill="#3a4e70"/>
<rect x="792" y="1252" width="2" height="70" fill="#3a4e70"/>
<rect x="856" y="1252" width="2" height="70" fill="#3a4e70"/>
<rect x="920" y="1252" width="2" height="70" fill="#3a4e70"/>
<rect x="986" y="1252" width="2" height="70" fill="#3a4e70"/>
<rect x="1050" y="1252" width="2" height="70" fill="#3a4e70"/>
<rect x="1116" y="1252" width="2" height="70" fill="#3a4e70"/>
<rect x="1180" y="1252" width="2" height="70" fill="#3a4e70"/>
<rect x="1244" y="1252" width="2" height="70" fill="#3a4e70"/>
<rect x="1310" y="1252" width="2" height="70" fill="#3a4e70"/>
<rect x="1374" y="1252" width="2" height="70" fill="#3a4e70"/>
<rect x="1438" y="1252" width="2" height="70" fill="#3a4e70"/>
<rect x="1504" y="1252" width="2" height="70" fill="#3a4e70"/>
<rect x="1568" y="1252" width="2" height="70" fill="#3a4e70"/>
<rect x="1634" y="1252" width="2" height="70" fill="#3a4e70"/>
<rect x="1698" y="1252" width="2" height="70" fill="#3a4e70"/>
<rect x="1762" y="1252" width="2" height="70" fill="#3a4e70"/>
<rect x="1828" y="1252" width="2" height="70" fill="#3a4e70"/>
<rect x="1892" y="1252" width="2" height="70" fill="#3a4e70"/>
<rect x="1958" y="1252" width="2" height="70" fill="#3a4e70"/>
<rect x="2022" y="1252" width="2" height="70" fill="#3a4e70"/>
<rect x="2086" y="1252" width="2" height="70" fill="#3a4e70"/>
<rect x="2152" y="1252" width="2" height="70" fill="#3a4e70"/>
<rect x="2216" y="1252" width="2" height="70" fill="#3a4e70"/>
<rect x="2282" y="1252" width="2" height="70" fill="#3a4e70"/>
<rect x="2346" y="1252" width="2" height="70" fill="#3a4e70"/>
<rect x="16" y="1326" width="2390" height="34" fill="#363636"/>
<rect x="16" y="1364" width="2390" height="24" fill="#363636"/>
<rect x="16" y="1394" width="2390" height="34" fill="#363636"/>
<rect x="14" y="176" width="486" height="6" fill="#2e2e2e"/>
<rect x="532" y="176" width="518" height="6" fill="#2e2e2e"/>
<rect x="1568" y="176" width="778" height="6" fill="#2e2e2e"/>
<rect x="274" y="184" width="226" height="6" fill="#2e2e2e"/>
<rect x="532" y="184" width="518" height="6" fill="#2e2e2e"/>
<rect x="1568" y="184" width="778" height="6" fill="#2e2e2e"/>
<rect x="144" y="192" width="356" height="6" fill="#2e2e2e"/>
<rect x="532" y="192" width="518" height="6" fill="#2e2e2e"/>
<rect x="1568" y="192" width="778" height="6" fill="#2e2e2e"/>
<rect x="274" y="200" width="226" height="6" fill="#2e2e2e"/>
<rect x="532" y="200" width="518" height="6" fill="#2e2e2e"/>
<rect x="1568" y="200" width="778" height="6" fill="#2e2e2e"/>
<rect x="792" y="548" width="258" height="7" fill="#2e2e2e"/>
<rect x="1828" y="548" width="258" height="7" fill="#2e2e2e"/>
<rect x="792" y="559.5" width="258" height="7" fill="#2e2e2e"/>
<rect x="1828" y="559.5" width="258" height="7" fill="#2e2e2e"/>
<rect x="792" y="571" width="258" height="7" fill="#2e2e2e"/>
<rect x="1828" y="571" width="258" height="7" fill="#2e2e2e"/>
<rect x="1570" y="918" width="30" height="10" fill="#2e2e2e"/>
<rect x="1699" y="918" width="31" height="10" fill="#2e2e2e"/>
<rect x="1635" y="930" width="63" height="10" fill="#2e2e2e"/>
<rect x="1731" y="930" width="97" height="10" fill="#2e2e2e"/>
<rect x="1050" y="1140" width="514" height="10" fill="#2e2e2e"/>
<rect x="1180" y="1152" width="384" height="10" fill="#2e2e2e"/>
<rect x="78" y="76" width="2" height="22" fill="#272727"/>
<rect x="144" y="76" width="2" height="22" fill="#272727"/>
<rect x="208" y="76" width="2" height="22" fill="#272727"/>
<rect x="274" y="76" width="2" height="22" fill="#272727"/>
<rect x="338" y="76" width="2" height="22" fill="#272727"/>
<rect x="402" y="76" width="2" height="22" fill="#272727"/>
<rect x="468" y="76" width="2" height="22" fill="#272727"/>
<rect x="532" y="76" width="2" height="22" fill="#272727"/>
<rect x="596" y="76" width="2" height="22" fill="#272727"/>
<rect x="662" y="76" width="2" height="22" fill="#272727"/>
<rect x="726" y="76" width="2" height="22" fill="#272727"/>
<rect x="792" y="76" width="2" height="22" fill="#272727"/>
<rect x="856" y="76" width="2" height="22" fill="#272727"/>
<rect x="920" y="76" width="2" height="22" fill="#272727"/>
<rect x="986" y="76" width="2" height="22" fill="#272727"/>
<rect x="1050" y="76" width="2" height="22" fill="#272727"/>
<rect x="1116" y="76" width="2" height="22" fill="#272727"/>
<rect x="1180" y="76" width="2" height="22" fill="#272727"/>
<rect x="1244" y="76" width="2" height="22" fill="#272727"/>
<rect x="1310" y="76" width="2" height="22" fill="#272727"/>
<rect x="1374" y="76" width="2" height="22" fill="#272727"/>
<rect x="1438" y="76" width="2" height="22" fill="#272727"/>
<rect x="1504" y="76" width="2" height="22" fill="#272727"/>
<rect x="1568" y="76" width="2" height="22" fill="#272727"/>
<rect x="1634" y="76" width="2" height="22" fill="#272727"/>
<rect x="1698" y="76" width="2" height="22" fill="#272727"/>
<rect x="1762" y="76" width="2" height="22" fill="#272727"/>
<rect x="1828" y="76" width="2" height="22" fill="#272727"/>
<rect x="1892" y="76" width="2" height="22" fill="#272727"/>
<rect x="1958" y="76" width="2" height="22" fill="#272727"/>
<rect x="2022" y="76" width="2" height="22" fill="#272727"/>
<rect x="2086" y="76" width="2" height="22" fill="#272727"/>
<rect x="2152" y="76" width="2" height="22" fill="#272727"/>
<rect x="2216" y="76" width="2" height="22" fill="#272727"/>
<rect x="2282" y="76" width="2" height="22" fill="#272727"/>
<rect x="2346" y="76" width="2" height="22" fill="#272727"/>
<rect x="78" y="102" width="2" height="34" fill="#272727"/>
<rect x="144" y="102" width="2" height="34" fill="#272727"/>
<rect x="208" y="102" width="2" height="34" fill="#272727"/>
<rect x="274" y="102" width="2" height="34" fill="#272727"/>
<rect x="338" y="102" width="2" height="34" fill="#272727"/>
<rect x="402" y="102" width="2" height="34" fill="#272727"/>
<rect x="468" y="102" width="2" height="34" fill="#272727"/>
<rect x="532" y="102" width="2" height="34" fill="#272727"/>
<rect x="596" y="102" width="2" height="34" fill="#272727"/>
<rect x="662" y="102" width="2" height="34" fill="#272727"/>
<rect x="726" y="102" width="2" height="34" fill="#272727"/>
<rect x="792" y="102" width="2" height="34" fill="#272727"/>
<rect x="856" y="102" width="2" height="34" fill="#272727"/>
<rect x="920" y="102" width="2" height="34" fill="#272727"/>
<rect x="986" y="102" width="2" height="34" fill="#272727"/>
<rect x="1050" y="102" width="2" height="34" fill="#272727"/>
<rect x="1116" y="102" width="2" height="34" fill="#272727"/>
<rect x="1180" y="102" width="2" height="34" fill="#272727"/>
<rect x="1244" y="102" width="2" height="34" fill="#272727"/>
<rect x="1310" y="102" width="2" height="34" fill="#272727"/>
<rect x="1374" y="102" width="2" height="34" fill="#272727"/>
<rect x="1438" y="102" width="2" height="34" fill="#272727"/>
<rect x="1504" y="102" width="2" height="34" fill="#272727"/>
<rect x="1568" y="102" width="2" height="34" fill="#272727"/>
<rect x="1634" y="102" width="2" height="34" fill="#272727"/>
<rect x="1698" y="102" width="2" height="34" fill="#272727"/>
<rect x="1762" y="102" width="2" height="34" fill="#272727"/>
<rect x="1828" y="102" width="2" height="34" fill="#272727"/>
<rect x="1892" y="102" width="2" height="34" fill="#272727"/>
<rect x="1958" y="102" width="2" height="34" fill="#272727"/>
<rect x="2022" y="102" width="2" height="34" fill="#272727"/>
<rect x="2086" y="102" width="2" height="34" fill="#272727"/>
<rect x="2152" y="102" width="2" height="34" fill="#272727"/>
<rect x="2216" y="102" width="2" height="34" fill="#272727"/>
<rect x="2282" y="102" width="2" height="34" fill="#272727"/>
<rect x="2346" y="102" width="2" height="34" fill="#272727"/>
<rect x="78" y="140" width="2" height="70" fill="#272727"/>
<rect x="144" y="140" width="2" height="70" fill="#272727"/>
<rect x="208" y="140" width="2" height="70" fill="#272727"/>
<rect x="274" y="140" width="2" height="70" fill="#272727"/>
<rect x="338" y="140" width="2" height="70" fill="#272727"/>
<rect x="402" y="140" width="2" height="70" fill="#272727"/>
<rect x="468" y="140" width="2" height="70" fill="#272727"/>
<rect x="532" y="140" width="2" height="70" fill="#272727"/>
<rect x="596" y="140" width="2" height="70" fill="#272727"/>
<rect x="662" y="140" width="2" height="70" fill="#272727"/>
<rect x="726" y="140" width="2" height="70" fill="#272727"/>
<rect x="792" y="140" width="2" height="70" fill="#272727"/>
<rect x="856" y="140" width="2" height="70" fill="#272727"/>
<rect x="920" y="140" width="2" height="70" fill="#272727"/>
<rect x="986" y="140" width="2" height="70" fill="#272727"/>
<rect x="1050" y="140" width="2" height="70" fill="#272727"/>
<rect x="1116" y="140" width="2" height="70" fill="#272727"/>
<rect x="1180" y="140" width="2" height="70" fill="#272727"/>
<rect x="1244" y="140" width="2" height="70" fill="#272727"/>
<rect x="1310" y="140" width="2" height="70" fill="#272727"/>
<rect x="1374" y="140" width="2" height="70" fill="#272727"/>
<rect x="1438" y="140" width="2" height="70" fill="#272727"/>
<rect x="1504" y="140" width="2" height="70" fill="#272727"/>
<rect x="1568" y="140" width="2" height="70" fill="#272727"/>
<rect x="1634" y="140" width="2" height="70" fill="#272727"/>
<rect x="1698" y="140" width="2" height="70" fill="#272727"/>
<rect x="1762" y="140" width="2" height="70" fill="#272727"/>
<rect x="1828" y="140" width="2" height="70" fill="#272727"/>
<rect x="1892" y="140" width="2" height="70" fill="#272727"/>
<rect x="1958" y="140" width="2" height="70" fill="#272727"/>
<rect x="2022" y="140" width="2" height="70" fill="#272727"/>
<rect x="2086" y="140" width="2" height="70" fill="#272727"/>
<rect x="2152" y="140" width="2" height="70" fill="#272727"/>
<rect x="2216" y="140" width="2" height="70" fill="#272727"/>
<rect x="2282" y="140" width="2" height="70" fill="#272727"/>
<rect x="2346" y="140" width="2" height="70" fill="#272727"/>
<rect x="78" y="474" width="2" height="34" fill="#272727"/>
<rect x="144" y="474" width="2" height="34" fill="#272727"/>
<rect x="208" y="474" width="2" height="34" fill="#272727"/>
<rect x="274" y="474" width="2" height="34" fill="#272727"/>
<rect x="338" y="474" width="2" height="34" fill="#272727"/>
<rect x="402" y="474" width="2" height="34" fill="#272727"/>
<rect x="468" y="474" width="2" height="34" fill="#272727"/>
<rect x="532" y="474" width="2" height="34" fill="#272727"/>
<rect x="596" y="474" width="2" height="34" fill="#272727"/>
<rect x="662" y="474" width="2" height="34" fill="#272727"/>
<rect x="726" y="474" width="2" height="34" fill="#272727"/>
<rect x="792" y="474" width="2" height="34" fill="#272727"/>
<rect x="856" y="474" width="2" height="34" fill="#272727"/>
<rect x="920" y="474" width="2" height="34" fill="#272727"/>
<rect x="986" y="474" width="2" height="34" fill="#272727"/>
<rect x="1050" y="474" width="2" height="34" fill="#272727"/>
<rect x="1116" y="474" width="2" height="34" fill="#272727"/>
<rect x="1180" y="474" width="2" height="34" fill="#272727"/>
<rect x="1244" y="474" width="2" height="34" fill="#272727"/>
<rect x="1310" y="474" width="2" height="34" fill="#272727"/>
<rect x="1374" y="474" width="2" height="34" fill="#272727"/>
<rect x="1438" y="474" width="2" height="34" fill="#272727"/>
<rect x="1504" y="474" width="2" height="34" fill="#272727"/>
<rect x="1568" y="474" width="2" height="34" fill="#272727"/>
<rect x="1634" y="474" width="2" height="34" fill="#272727"/>
<rect x="1698" y="474" width="2" height="34" fill="#272727"/>
<rect x="1762" y="474" width="2" height="34" fill="#272727"/>
<rect x="1828" y="474" width="2" height="34" fill="#272727"/>
<rect x="1892" y="474" width="2" height="34" fill="#272727"/>
<rect x="1958" y="474" width="2" height="34" fill="#272727"/>
<rect x="2022" y="474" width="2" height="34" fill="#272727"/>
<rect x="2086" y="474" width="2" height="34" fill="#272727"/>
<rect x="2152" y="474" width="2" height="34" fill="#272727"/>
<rect x="2216" y="474" width="2" height="34" fill="#272727"/>
<rect x="2282" y="474" width="2" height="34" fill="#272727"/>
<rect x="2346" y="474" width="2" height="34" fill="#272727"/>
<rect x="78" y="512" width="2" height="70" fill="#272727"/>
<rect x="144" y="512" width="2" height="70" fill="#272727"/>
<rect x="208" y="512" width="2" height="70" fill="#272727"/>
<rect x="274" y="512" width="2" height="70" fill="#272727"/>
<rect x="338" y="512" width="2" height="70" fill="#272727"/>
<rect x="402" y="512" width="2" height="70" fill="#272727"/>
<rect x="468" y="512" width="2" height="70" fill="#272727"/>
<rect x="532" y="512" width="2" height="70" fill="#272727"/>
<rect x="596" y="512" width="2" height="70" fill="#272727"/>
<rect x="662" y="512" width="2" height="70" fill="#272727"/>
<rect x="726" y="512" width="2" height="70" fill="#272727"/>
<rect x="792" y="512" width="2" height="70" fill="#272727"/>
<rect x="856" y="512" width="2" height="70" fill="#272727"/>
<rect x="920" y="512" width="2" height="70" fill="#272727"/>
<rect x="986" y="512" width="2" height="70" fill="#272727"/>
<rect x="1050" y="512" width="2" height="70" fill="#272727"/>
<rect x="1116" y="512" width="2" height="70" fill="#272727"/>
<rect x="1180" y="512" width="2" height="70" fill="#272727"/>
<rect x="1244" y="512" width="2" height="70" fill="#272727"/>
<rect x="1310" y="512" width="2" height="70" fill="#272727"/>
<rect x="1374" y="512" width="2" height="70" fill="#272727"/>
<rect x="1438" y="512" width="2" height="70" fill="#272727"/>
<rect x="1504" y="512" width="2" height="70" fill="#272727"/>
<rect x="1568" y="512" width="2" height="70" fill="#272727"/>
<rect x="1634" y="512" width="2" height="70" fill="#272727"/>
<rect x="1698" y="512" width="2" height="70" fill="#272727"/>
<rect x="1762" y="512" width="2" height="70" fill="#272727"/>
<rect x="1828" y="512" width="2" height="70" fill="#272727"/>
<rect x="1892" y="512" width="2" height="70" fill="#272727"/>
<rect x="1958" y="512" width="2" height="70" fill="#272727"/>
<rect x="2022" y="512" width="2" height="70" fill="#272727"/>
<rect x="2086" y="512" width="2" height="70" fill="#272727"/>
<rect x="2152" y="512" width="2" height="70" fill="#272727"/>
<rect x="2216" y="512" width="2" height="70" fill="#272727"/>
<rect x="2282" y="512" width="2" height="70" fill="#272727"/>
<rect x="2346" y="512" width="2" height="70" fill="#272727"/>
<rect x="78" y="882" width="2" height="70" fill="#272727"/>
<rect x="144" y="882" width="2" height="70" fill="#272727"/>
<rect x="208" y="882" width="2" height="70" fill="#272727"/>
<rect x="274" y="882" width="2" height="70" fill="#272727"/>
<rect x="338" y="882" width="2" height="70" fill="#272727"/>
<rect x="402" y="882" width="2" height="70" fill="#272727"/>
<rect x="468" y="882" width="2" height="70" fill="#272727"/>
<rect x="532" y="882" width="2" height="70" fill="#272727"/>
<rect x="596" y="882" width="2" height="70" fill="#272727"/>
<rect x="662" y="882" width="2" height="70" fill="#272727"/>
<rect x="726" y="882" width="2" height="70" fill="#272727"/>
<rect x="792" y="882" width="2" height="70" fill="#272727"/>
<rect x="856" y="882" width="2" height="70" fill="#272727"/>
<rect x="920" y="882" width="2" height="70" fill="#272727"/>
<rect x="986" y="882" width="2" height="70" fill="#272727"/>
<rect x="1050" y="882" width="2" height="70" fill="#272727"/>
<rect x="1116" y="882" width="2" height="70" fill="#272727"/>
<rect x="1180" y="882" width="2" height="70" fill="#272727"/>
<rect x="1244" y="882" width="2" height="70" fill="#272727"/>
<rect x="1310" y="882" width="2" height="70" fill="#272727"/>
<rect x="1374" y="882" width="2" height="70" fill="#272727"/>
<rect x="1438" y="882" width="2" height="70" fill="#272727"/>
<rect x="1504" y="882" width="2" height="70" fill="#272727"/>
<rect x="1568" y="882" width="2" height="70" fill="#272727"/>
<rect x="1634" y="882" width="2" height="70" fill="#272727"/>
<rect x="1698" y="882" width="2" height="70" fill="#272727"/>
<rect x="1762" y="882" width="2" height="70" fill="#272727"/>
<rect x="1828" y="882" width="2" height="70" fill="#272727"/>
<rect x="1892" y="882" width="2" height="70" fill="#272727"/>
<rect x="1958" y="882" width="2" height="70" fill="#272727"/>
<rect x="2022" y="882" width="2" height="70" fill="#272727"/>
<rect x="2086" y="882" width="2" height="70" fill="#272727"/>
<rect x="2152" y="882" width="2" height="70" fill="#272727"/>
<rect x="2216" y="882" width="2" height="70" fill="#272727"/>
<rect x="2282" y="882" width="2" height="70" fill="#272727"/>
<rect x="2346" y="882" width="2" height="70" fill="#272727"/>
<rect x="78" y="1104" width="2" height="70" fill="#272727"/>
<rect x="144" y="1104" width="2" height="70" fill="#272727"/>
<rect x="208" y="1104" width="2" height="70" fill="#272727"/>
<rect x="274" y="1104" width="2" height="70" fill="#272727"/>
<rect x="338" y="1104" width="2" height="70" fill="#272727"/>
<rect x="402" y="1104" width="2" height="70" fill="#272727"/>
<rect x="468" y="1104" width="2" height="70" fill="#272727"/>
<rect x="532" y="1104" width="2" height="70" fill="#272727"/>
<rect x="596" y="1104" width="2" height="70" fill="#272727"/>
<rect x="662" y="1104" width="2" height="70" fill="#272727"/>
<rect x="726" y="1104" width="2" height="70" fill="#272727"/>
<rect x="792" y="1104" width="2" height="70" fill="#272727"/>
<rect x="856" y="1104" width="2" height="70" fill="#272727"/>
<rect x="920" y="1104" width="2" height="70" fill="#272727"/>
<rect x="986" y="1104" width="2" height="70" fill="#272727"/>
<rect x="1050" y="1104" width="2" height="70" fill="#272727"/>
<rect x="1116" y="1104" width="2" height="70" fill="#272727"/>
<rect x="1180" y="1104" width="2" height="70" fill="#272727"/>
<rect x="1244" y="1104" width="2" height="70" fill="#272727"/>
<rect x="1310" y="1104" width="2" height="70" fill="#272727"/>
<rect x="1374" y="1104" width="2" height="70" fill="#272727"/>
<rect x="1438" y="1104" width="2" height="70" fill="#272727"/>
<rect x="1504" y="1104" width="2" height="70" fill="#272727"/>
<rect x="1568" y="1104" width="2" height="70" fill="#272727"/>
<rect x="1634" y="1104" width="2" height="70" fill="#272727"/>
<rect x="1698" y="1104" width="2" height="70" fill="#272727"/>
<rect x="1762" y="1104" width="2" height="70" fill="#272727"/>
<rect x="1828" y="1104" width="2" height="70" fill="#272727"/>
<rect x="1892" y="1104" width="2" height="70" fill="#272727"/>
<rect x="1958" y="1104" width="2" height="70" fill="#272727"/>
<rect x="2022" y="1104" width="2" height="70" fill="#272727"/>
<rect x="2086" y="1104" width="2" height="70" fill="#272727"/>
<rect x="2152" y="1104" width="2" height="70" fill="#272727"/>
<rect x="2216" y="1104" width="2" height="70" fill="#272727"/>
<rect x="2282" y="1104" width="2" height="70" fill="#272727"/>
<rect x="2346" y="1104" width="2" height="70" fill="#272727"/>
<rect x="78" y="1326" width="2" height="34" fill="#272727"/>
<rect x="144" y="1326" width="2" height="34" fill="#272727"/>
<rect x="208" y="1326" width="2" height="34" fill="#272727"/>
<rect x="274" y="1326" width="2" height="34" fill="#272727"/>
<rect x="338" y="1326" width="2" height="34" fill="#272727"/>
<rect x="402" y="1326" width="2" height="34" fill="#272727"/>
<rect x="468" y="1326" width="2" height="34" fill="#272727"/>
<rect x="532" y="1326" width="2" height="34" fill="#272727"/>
<rect x="596" y="1326" width="2" height="34" fill="#272727"/>
<rect x="662" y="1326" width="2" height="34" fill="#272727"/>
<rect x="726" y="1326" width="2" height="34" fill="#272727"/>
<rect x="792" y="1326" width="2" height="34" fill="#272727"/>
<rect x="856" y="1326" width="2" height="34" fill="#272727"/>
<rect x="920" y="1326" width="2" height="34" fill="#272727"/>
<rect x="986" y="1326" width="2" height="34" fill="#272727"/>
<rect x="1050" y="1326" width="2" height="34" fill="#272727"/>
<rect x="1116" y="1326" width="2" height="34" fill="#272727"/>
<rect x="1180" y="1326" width="2" height="34" fill="#272727"/>
<rect x="1244" y="1326" width="2" height="34" fill="#272727"/>
<rect x="1310" y="1326" width="2" height="34" fill="#272727"/>
<rect x="1374" y="1326" width="2" height="34" fill="#272727"/>
<rect x="1438" y="1326" width="2" height="34" fill="#272727"/>
<rect x="1504" y="1326" width="2" height="34" fill="#272727"/>
<rect x="1568" y="1326" width="2" height="34" fill="#272727"/>
<rect x="1634" y="1326" width="2" height="34" fill="#272727"/>
<rect x="1698" y="1326" width="2" height="34" fill="#272727"/>
<rect x="1762" y="1326" width="2" height="34" fill="#272727"/>
<rect x="1828" y="1326" width="2" height="34" fill="#272727"/>
<rect x="1892" y="1326" width="2" height="34" fill="#272727"/>
<rect x="1958" y="1326" width="2" height="34" fill="#272727"/>
<rect x="2022" y="1326" width="2" height="34" fill="#272727"/>
<rect x="2086" y="1326" width="2" height="34" fill="#272727"/>
<rect x="2152" y="1326" width="2" height="34" fill="#272727"/>
<rect x="2216" y="1326" width="2" height="34" fill="#272727"/>
<rect x="2282" y="1326" width="2" height="34" fill="#272727"/>
<rect x="2346" y="1326" width="2" height="34" fill="#272727"/>
<rect x="78" y="1364" width="2" height="24" fill="#272727"/>
<rect x="144" y="1364" width="2" height="24" fill="#272727"/>
<rect x="208" y="1364" width="2" height="24" fill="#272727"/>
<rect x="274" y="1364" width="2" height="24" fill="#272727"/>
<rect x="338" y="1364" width="2" height="24" fill="#272727"/>
<rect x="402" y="1364" width="2" height="24" fill="#272727"/>
<rect x="468" y="1364" width="2" height="24" fill="#272727"/>
<rect x="532" y="1364" width="2" height="24" fill="#272727"/>
<rect x="596" y="1364" width="2" height="24" fill="#272727"/>
<rect x="662" y="1364" width="2" height="24" fill="#272727"/>
<rect x="726" y="1364" width="2" height="24" fill="#272727"/>
<rect x="792" y="1364" width="2" height="24" fill="#272727"/>
<rect x="856" y="1364" width="2" height="24" fill="#272727"/>
<rect x="920" y="1364" width="2" height="24" fill="#272727"/>
<rect x="986" y="1364" width="2" height="24" fill="#272727"/>
<rect x="1050" y="1364" width="2" height="24" fill="#272727"/>
<rect x="1116" y="1364" width="2" height="24" fill="#272727"/>
<rect x="1180" y="1364" width="2" height="24" fill="#272727"/>
<rect x="1244" y="1364" width="2" height="24" fill="#272727"/>
<rect x="1310" y="1364" width="2" height="24" fill="#272727"/>
<rect x="1374" y="1364" width="2" height="24" fill="#272727"/>
<rect x="1438" y="1364" width="2" height="24" fill="#272727"/>
<rect x="1504" y="1364" width="2" height="24" fill="#272727"/>
<rect x="1568" y="1364" width="2" height="24" fill="#272727"/>
<rect x="1634" y="1364" width="2" height="24" fill="#272727"/>
<rect x="1698" y="1364" width="2" height="24" fill="#272727"/>
<rect x="1762" y="1364" width="2" height="24" fill="#272727"/>
<rect x="1828" y="1364" width="2" height="24" fill="#272727"/>
<rect x="1892" y="1364" width="2" height="24" fill="#272727"/>
<rect x="1958" y="1364" width="2" height="24" fill="#272727"/>
<rect x="2022" y="1364" width="2" height="24" fill="#272727"/>
<rect x="2086" y="1364" width="2" height="24" fill="#272727"/>
<rect x="2152" y="1364" width="2" height="24" fill="#272727"/>
<rect x="2216" y="1364" width="2" height="24" fill="#272727"/>
<rect x="2282" y="1364" width="2" height="24" fill="#272727"/>
<rect x="2346" y="1364" width="2" height="24" fill="#272727"/>
<rect x="78" y="1394" width="2" height="34" fill="#272727"/>
<rect x="144" y="1394" width="2" height="34" fill="#272727"/>
<rect x="208" y="1394" width="2" height="34" fill="#272727"/>
<rect x="274" y="1394" width="2" height="34" fill="#272727"/>
<rect x="338" y="1394" width="2" height="34" fill="#272727"/>
<rect x="402" y="1394" width="2" height="34" fill="#272727"/>
<rect x="468" y="1394" width="2" height="34" fill="#272727"/>
<rect x="532" y="1394" width="2" height="34" fill="#272727"/>
<rect x="596" y="1394" width="2" height="34" fill="#272727"/>
<rect x="662" y="1394" width="2" height="34" fill="#272727"/>
<rect x="726" y="1394" width="2" height="34" fill="#272727"/>
<rect x="792" y="1394" width="2" height="34" fill="#272727"/>
<rect x="856" y="1394" width="2" height="34" fill="#272727"/>
<rect x="920" y="1394" width="2" height="34" fill="#272727"/>
<rect x="986" y="1394" width="2" height="34" fill="#272727"/>
<rect x="1050" y="1394" width="2" height="34" fill="#272727"/>
<rect x="1116" y="1394" width="2" height="34" fill="#272727"/>
<rect x="1180" y="1394" width="2" height="34" fill="#272727"/>
<rect x="1244" y="1394" width="2" height="34" fill="#272727"/>
<rect x="1310" y="1394" width="2" height="34" fill="#272727"/>
<rect x="1374" y="1394" width="2" height="34" fill="#272727"/>
<rect x="1438" y="1394" width="2" height="34" fill="#272727"/>
<rect x="1504" y="1394" width="2" height="34" fill="#272727"/>
<rect x="1568" y="1394" width="2" height="34" fill="#272727"/>
<rect x="1634" y="1394" width="2" height="34" fill="#272727"/>
<rect x="1698" y="1394" width="2" height="34" fill="#272727"/>
<rect x="1762" y="1394" width="2" height="34" fill="#272727"/>
<rect x="1828" y="1394" width="2" height="34" fill="#272727"/>
<rect x="1892" y="1394" width="2" height="34" fill="#272727"/>
<rect x="1958" y="1394" width="2" height="34" fill="#272727"/>
<rect x="2022" y="1394" width="2" height="34" fill="#272727"/>
<rect x="2086" y="1394" width="2" height="34" fill="#272727"/>
<rect x="2152" y="1394" width="2" height="34" fill="#272727"/>
<rect x="2216" y="1394" width="2" height="34" fill="#272727"/>
<rect x="2282" y="1394" width="2" height="34" fill="#272727"/>
<rect x="2346" y="1394" width="2" height="34" fill="#272727"/>
<rect x="16" y="116" width="258" height="10" fill="#fdf264"/>
<rect x="274" y="104" width="194" height="10" fill="#fdf264"/>
<rect x="532" y="104" width="244" height="10" fill="#fdf264"/>
<rect x="792" y="104" width="124" height="10" fill="#fdf264"/>
<rect x="920" y="104" width="126" height="10" fill="#fdf264"/>
<rect x="1570" y="104" width="242" height="10" fill="#fdf264"/>
<rect x="1828" y="104" width="242" height="10" fill="#fdf264"/>
<rect x="2086" y="104" width="228" height="10" fill="#fdf264"/>
<rect x="274" y="489" width="226" height="2" fill="#6ef552"/>
<rect x="274" y="493" width="226" height="2" fill="#6ef552"/>
<rect x="402" y="502" width="98" height="2" fill="#6ef552"/>
<rect x="662" y="476" width="388" height="2" fill="#6ef552"/>
<rect x="662" y="480" width="388" height="2" fill="#6ef552"/>
<rect x="662" y="485" width="388" height="2" fill="#6ef552"/>
<rect x="662" y="493" width="130" height="2" fill="#6ef552"/>
<rect x="792" y="498" width="258" height="2" fill="#6ef552"/>
<rect x="1002" y="502" width="48" height="2" fill="#6ef552"/>
<rect x="658" y="502" width="4" height="2" fill="#6ef552"/>
<rect x="916" y="502" width="4" height="2" fill="#6ef552"/>
<rect x="1438" y="502" width="126" height="2" fill="#6ef552"/>
<rect x="1618" y="489" width="16" height="2" fill="#6ef552"/>
<rect x="1682" y="489" width="16" height="2" fill="#6ef552"/>
<rect x="1698" y="476" width="648" height="2" fill="#6ef552"/>
<rect x="1829" y="480" width="387" height="2" fill="#6ef552"/>
<rect x="1698" y="485" width="648" height="2" fill="#6ef552"/>
<rect x="1698" y="493" width="130" height="2" fill="#6ef552"/>
<rect x="1828" y="498" width="454" height="2" fill="#6ef552"/>
<rect x="1950" y="502" width="8" height="2" fill="#6ef552"/>
<rect x="2038" y="502" width="48" height="2" fill="#6ef552"/>
<rect x="2208" y="502" width="8" height="2" fill="#6ef552"/>
<rect x="2298" y="502" width="48" height="2" fill="#6ef552"/>
<rect x="1310" y="1328" width="258" height="10" fill="#8570de"/>
<rect x="1180" y="1340" width="130" height="10" fill="#8570de"/>
<rect x="1310" y="1340" width="258" height="10" fill="#8570de"/>
<rect x="192" y="1372" width="217" height="2" fill="#858585"/>
<rect x="192" y="1378" width="82" height="2" fill="#858585"/>
<rect x="274" y="1382" width="141" height="4" fill="#858585"/>
<rect x="415" y="1382" width="15" height="2" fill="#858585"/>
<rect x="370" y="1373" width="32" height="3" fill="#858585"/>
<rect x="410" y="1374" width="26" height="2" fill="#858585"/>
<rect x="436" y="1374" width="64" height="4" fill="#858585"/>
<rect x="500" y="1372" width="27" height="2" fill="#858585"/>
<rect x="492" y="1382" width="35" height="2" fill="#858585"/>
<rect x="532" y="1366" width="262" height="2" fill="#858585"/>
<rect x="531" y="1372" width="235" height="2" fill="#858585"/>
<rect x="532" y="1382" width="156" height="2" fill="#858585"/>
<rect x="663" y="1370" width="15" height="2" fill="#858585"/>
<rect x="750" y="1368" width="44" height="2" fill="#858585"/>
<rect x="780" y="1366" width="13" height="4" fill="#858585"/>
<rect x="793" y="1366" width="15" height="7" fill="#858585"/>
<rect x="808" y="1366" width="15" height="2" fill="#858585"/>
<rect x="808" y="1368" width="112" height="2" fill="#858585"/>
<rect x="922" y="1368" width="16" height="5" fill="#858585"/>
<rect x="938" y="1368" width="92" height="2" fill="#858585"/>
<rect x="808" y="1372" width="419" height="2" fill="#858585"/>
<rect x="970" y="1376" width="80" height="2" fill="#858585"/>
<rect x="793" y="1384" width="141" height="2" fill="#858585"/>
<rect x="1051" y="1380" width="129" height="6" fill="#858585"/>
<rect x="1180" y="1380" width="26" height="4" fill="#858585"/>
<rect x="1192" y="1380" width="232" height="2" fill="#858585"/>
<rect x="1390" y="1372" width="48" height="2" fill="#858585"/>
<rect x="1434" y="1374" width="70" height="2" fill="#858585"/>
<rect x="1500" y="1374" width="65" height="4" fill="#858585"/>
<rect x="1570" y="1366" width="258" height="4" fill="#858585"/>
<rect x="1828" y="1366" width="32" height="2" fill="#858585"/>
<rect x="1700" y="1370" width="14" height="2" fill="#858585"/>
<rect x="1828" y="1370" width="16" height="2" fill="#858585"/>
<rect x="1570" y="1382" width="140" height="4" fill="#858585"/>
<rect x="1710" y="1382" width="16" height="2" fill="#858585"/>
<rect x="1959" y="1370" width="15" height="6" fill="#858585"/>
<rect x="1959" y="1372" width="63" height="4" fill="#858585"/>
<rect x="2024" y="1372" width="62" height="8" fill="#858585"/>
<rect x="2006" y="1378" width="16" height="2" fill="#858585"/>
<rect x="1959" y="1382" width="127" height="4" fill="#858585"/>
<rect x="2086" y="1370" width="16" height="2" fill="#858585"/>
<rect x="78" y="102" width="2" height="34" fill="rgba(0,0,0,0.22)"/>
<rect x="144" y="102" width="2" height="34" fill="rgba(0,0,0,0.22)"/>
<rect x="208" y="102" width="2" height="34" fill="rgba(0,0,0,0.22)"/>
<rect x="274" y="102" width="2" height="34" fill="rgba(0,0,0,0.22)"/>
<rect x="338" y="102" width="2" height="34" fill="rgba(0,0,0,0.22)"/>
<rect x="402" y="102" width="2" height="34" fill="rgba(0,0,0,0.22)"/>
<rect x="468" y="102" width="2" height="34" fill="rgba(0,0,0,0.22)"/>
<rect x="532" y="102" width="2" height="34" fill="rgba(0,0,0,0.22)"/>
<rect x="596" y="102" width="2" height="34" fill="rgba(0,0,0,0.22)"/>
<rect x="662" y="102" width="2" height="34" fill="rgba(0,0,0,0.22)"/>
<rect x="726" y="102" width="2" height="34" fill="rgba(0,0,0,0.22)"/>
<rect x="792" y="102" width="2" height="34" fill="rgba(0,0,0,0.22)"/>
<rect x="856" y="102" width="2" height="34" fill="rgba(0,0,0,0.22)"/>
<rect x="920" y="102" width="2" height="34" fill="rgba(0,0,0,0.22)"/>
<rect x="986" y="102" width="2" height="34" fill="rgba(0,0,0,0.22)"/>
<rect x="1050" y="102" width="2" height="34" fill="rgba(0,0,0,0.22)"/>
<rect x="1116" y="102" width="2" height="34" fill="rgba(0,0,0,0.22)"/>
<rect x="1180" y="102" width="2" height="34" fill="rgba(0,0,0,0.22)"/>
<rect x="1244" y="102" width="2" height="34" fill="rgba(0,0,0,0.22)"/>
<rect x="1310" y="102" width="2" height="34" fill="rgba(0,0,0,0.22)"/>
<rect x="1374" y="102" width="2" height="34" fill="rgba(0,0,0,0.22)"/>
<rect x="1438" y="102" width="2" height="34" fill="rgba(0,0,0,0.22)"/>
<rect x="1504" y="102" width="2" height="34" fill="rgba(0,0,0,0.22)"/>
<rect x="1568" y="102" width="2" height="34" fill="rgba(0,0,0,0.22)"/>
<rect x="1634" y="102" width="2" height="34" fill="rgba(0,0,0,0.22)"/>
<rect x="1698" y="102" width="2" height="34" fill="rgba(0,0,0,0.22)"/>
<rect x="1762" y="102" width="2" height="34" fill="rgba(0,0,0,0.22)"/>
<rect x="1828" y="102" width="2" height="34" fill="rgba(0,0,0,0.22)"/>
<rect x="1892" y="102" width="2" height="34" fill="rgba(0,0,0,0.22)"/>
<rect x="1958" y="102" width="2" height="34" fill="rgba(0,0,0,0.22)"/>
<rect x="2022" y="102" width="2" height="34" fill="rgba(0,0,0,0.22)"/>
<rect x="2086" y="102" width="2" height="34" fill="rgba(0,0,0,0.22)"/>
<rect x="2152" y="102" width="2" height="34" fill="rgba(0,0,0,0.22)"/>
<rect x="2216" y="102" width="2" height="34" fill="rgba(0,0,0,0.22)"/>
<rect x="2282" y="102" width="2" height="34" fill="rgba(0,0,0,0.22)"/>
<rect x="2346" y="102" width="2" height="34" fill="rgba(0,0,0,0.22)"/>
<rect x="78" y="474" width="2" height="34" fill="rgba(0,0,0,0.22)"/>
<rect x="144" y="474" width="2" height="34" fill="rgba(0,0,0,0.22)"/>
<rect x="208" y="474" width="2" height="34" fill="rgba(0,0,0,0.22)"/>
<rect x="274" y="474" width="2" height="34" fill="rgba(0,0,0,0.22)"/>
<rect x="338" y="474" width="2" height="34" fill="rgba(0,0,0,0.22)"/>
<rect x="402" y="474" width="2" height="34" fill="rgba(0,0,0,0.22)"/>
<rect x="468" y="474" width="2" height="34" fill="rgba(0,0,0,0.22)"/>
<rect x="532" y="474" width="2" height="34" fill="rgba(0,0,0,0.22)"/>
<rect x="596" y="474" width="2" height="34" fill="rgba(0,0,0,0.22)"/>
<rect x="662" y="474" width="2" height="34" fill="rgba(0,0,0,0.22)"/>
<rect x="726" y="474" width="2" height="34" fill="rgba(0,0,0,0.22)"/>
<rect x="792" y="474" width="2" height="34" fill="rgba(0,0,0,0.22)"/>
<rect x="856" y="474" width="2" height="34" fill="rgba(0,0,0,0.22)"/>
<rect x="920" y="474" width="2" height="34" fill="rgba(0,0,0,0.22)"/>
<rect x="986" y="474" width="2" height="34" fill="rgba(0,0,0,0.22)"/>
<rect x="1050" y="474" width="2" height="34" fill="rgba(0,0,0,0.22)"/>
<rect x="1116" y="474" width="2" height="34" fill="rgba(0,0,0,0.22)"/>
<rect x="1180" y="474" width="2" height="34" fill="rgba(0,0,0,0.22)"/>
<rect x="1244" y="474" width="2" height="34" fill="rgba(0,0,0,0.22)"/>
<rect x="1310" y="474" width="2" height="34" fill="rgba(0,0,0,0.22)"/>
<rect x="1374" y="474" width="2" height="34" fill="rgba(0,0,0,0.22)"/>
<rect x="1438" y="474" width="2" height="34" fill="rgba(0,0,0,0.22)"/>
<rect x="1504" y="474" width="2" height="34" fill="rgba(0,0,0,0.22)"/>
<rect x="1568" y="474" width="2" height="34" fill="rgba(0,0,0,0.22)"/>
<rect x="1634" y="474" width="2" height="34" fill="rgba(0,0,0,0.22)"/>
<rect x="1698" y="474" width="2" height="34" fill="rgba(0,0,0,0.22)"/>
<rect x="1762" y="474" width="2" height="34" fill="rgba(0,0,0,0.22)"/>
<rect x="1828" y="474" width="2" height="34" fill="rgba(0,0,0,0.22)"/>
<rect x="1892" y="474" width="2" height="34" fill="rgba(0,0,0,0.22)"/>
<rect x="1958" y="474" width="2" height="34" fill="rgba(0,0,0,0.22)"/>
<rect x="2022" y="474" width="2" height="34" fill="rgba(0,0,0,0.22)"/>
<rect x="2086" y="474" width="2" height="34" fill="rgba(0,0,0,0.22)"/>
<rect x="2152" y="474" width="2" height="34" fill="rgba(0,0,0,0.22)"/>
<rect x="2216" y="474" width="2" height="34" fill="rgba(0,0,0,0.22)"/>
<rect x="2282" y="474" width="2" height="34" fill="rgba(0,0,0,0.22)"/>
<rect x="2346" y="474" width="2" height="34" fill="rgba(0,0,0,0.22)"/>
<rect x="78" y="1326" width="2" height="34" fill="rgba(0,0,0,0.22)"/>
<rect x="144" y="1326" width="2" height="34" fill="rgba(0,0,0,0.22)"/>
<rect x="208" y="1326" width="2" height="34" fill="rgba(0,0,0,0.22)"/>
<rect x="274" y="1326" width="2" height="34" fill="rgba(0,0,0,0.22)"/>
<rect x="338" y="1326" width="2" height="34" fill="rgba(0,0,0,0.22)"/>
<rect x="402" y="1326" width="2" height="34" fill="rgba(0,0,0,0.22)"/>
<rect x="468" y="1326" width="2" height="34" fill="rgba(0,0,0,0.22)"/>
<rect x="532" y="1326" width="2" height="34" fill="rgba(0,0,0,0.22)"/>
<rect x="596" y="1326" width="2" height="34" fill="rgba(0,0,0,0.22)"/>
<rect x="662" y="1326" width="2" height="34" fill="rgba(0,0,0,0.22)"/>
<rect x="726" y="1326" width="2" height="34" fill="rgba(0,0,0,0.22)"/>
<rect x="792" y="1326" width="2" height="34" fill="rgba(0,0,0,0.22)"/>
<rect x="856" y="1326" width="2" height="34" fill="rgba(0,0,0,0.22)"/>
<rect x="920" y="1326" width="2" height="34" fill="rgba(0,0,0,0.22)"/>
<rect x="986" y="1326" width="2" height="34" fill="rgba(0,0,0,0.22)"/>
<rect x="1050" y="1326" width="2" height="34" fill="rgba(0,0,0,0.22)"/>
<rect x="1116" y="1326" width="2" height="34" fill="rgba(0,0,0,0.22)"/>
<rect x="1180" y="1326" width="2" height="34" fill="rgba(0,0,0,0.22)"/>
<rect x="1244" y="1326" width="2" height="34" fill="rgba(0,0,0,0.22)"/>
<rect x="1310" y="1326" width="2" height="34" fill="rgba(0,0,0,0.22)"/>
<rect x="1374" y="1326" width="2" height="34" fill="rgba(0,0,0,0.22)"/>
<rect x="1438" y="1326" width="2" height="34" fill="rgba(0,0,0,0.22)"/>
<rect x="1504" y="1326" width="2" height="34" fill="rgba(0,0,0,0.22)"/>
<rect x="1568" y="1326" width="2" height="34" fill="rgba(0,0,0,0.22)"/>
<rect x="1634" y="1326" width="2" height="34" fill="rgba(0,0,0,0.22)"/>
<rect x="1698" y="1326" width="2" height="34" fill="rgba(0,0,0,0.22)"/>
<rect x="1762" y="1326" width="2" height="34" fill="rgba(0,0,0,0.22)"/>
<rect x="1828" y="1326" width="2" height="34" fill="rgba(0,0,0,0.22)"/>
<rect x="1892" y="1326" width="2" height="34" fill="rgba(0,0,0,0.22)"/>
<rect x="1958" y="1326" width="2" height="34" fill="rgba(0,0,0,0.22)"/>
<rect x="2022" y="1326" width="2" height="34" fill="rgba(0,0,0,0.22)"/>
<rect x="2086" y="1326" width="2" height="34" fill="rgba(0,0,0,0.22)"/>
<rect x="2152" y="1326" width="2" height="34" fill="rgba(0,0,0,0.22)"/>
<rect x="2216" y="1326" width="2" height="34" fill="rgba(0,0,0,0.22)"/>
<rect x="2282" y="1326" width="2" height="34" fill="rgba(0,0,0,0.22)"/>
<rect x="2346" y="1326" width="2" height="34" fill="rgba(0,0,0,0.22)"/>
<rect x="78" y="1364" width="2" height="24" fill="rgba(0,0,0,0.22)"/>
<rect x="144" y="1364" width="2" height="24" fill="rgba(0,0,0,0.22)"/>
<rect x="208" y="1364" width="2" height="24" fill="rgba(0,0,0,0.22)"/>
<rect x="274" y="1364" width="2" height="24" fill="rgba(0,0,0,0.22)"/>
<rect x="338" y="1364" width="2" height="24" fill="rgba(0,0,0,0.22)"/>
<rect x="402" y="1364" width="2" height="24" fill="rgba(0,0,0,0.22)"/>
<rect x="468" y="1364" width="2" height="24" fill="rgba(0,0,0,0.22)"/>
<rect x="532" y="1364" width="2" height="24" fill="rgba(0,0,0,0.22)"/>
<rect x="596" y="1364" width="2" height="24" fill="rgba(0,0,0,0.22)"/>
<rect x="662" y="1364" width="2" height="24" fill="rgba(0,0,0,0.22)"/>
<rect x="726" y="1364" width="2" height="24" fill="rgba(0,0,0,0.22)"/>
<rect x="792" y="1364" width="2" height="24" fill="rgba(0,0,0,0.22)"/>
<rect x="856" y="1364" width="2" height="24" fill="rgba(0,0,0,0.22)"/>
<rect x="920" y="1364" width="2" height="24" fill="rgba(0,0,0,0.22)"/>
<rect x="986" y="1364" width="2" height="24" fill="rgba(0,0,0,0.22)"/>
<rect x="1050" y="1364" width="2" height="24" fill="rgba(0,0,0,0.22)"/>
<rect x="1116" y="1364" width="2" height="24" fill="rgba(0,0,0,0.22)"/>
<rect x="1180" y="1364" width="2" height="24" fill="rgba(0,0,0,0.22)"/>
<rect x="1244" y="1364" width="2" height="24" fill="rgba(0,0,0,0.22)"/>
<rect x="1310" y="1364" width="2" height="24" fill="rgba(0,0,0,0.22)"/>
<rect x="1374" y="1364" width="2" height="24" fill="rgba(0,0,0,0.22)"/>
<rect x="1438" y="1364" width="2" height="24" fill="rgba(0,0,0,0.22)"/>
<rect x="1504" y="1364" width="2" height="24" fill="rgba(0,0,0,0.22)"/>
<rect x="1568" y="1364" width="2" height="24" fill="rgba(0,0,0,0.22)"/>
<rect x="1634" y="1364" width="2" height="24" fill="rgba(0,0,0,0.22)"/>
<rect x="1698" y="1364" width="2" height="24" fill="rgba(0,0,0,0.22)"/>
<rect x="1762" y="1364" width="2" height="24" fill="rgba(0,0,0,0.22)"/>
<rect x="1828" y="1364" width="2" height="24" fill="rgba(0,0,0,0.22)"/>
<rect x="1892" y="1364" width="2" height="24" fill="rgba(0,0,0,0.22)"/>
<rect x="1958" y="1364" width="2" height="24" fill="rgba(0,0,0,0.22)"/>
<rect x="2022" y="1364" width="2" height="24" fill="rgba(0,0,0,0.22)"/>
<rect x="2086" y="1364" width="2" height="24" fill="rgba(0,0,0,0.22)"/>
<rect x="2152" y="1364" width="2" height="24" fill="rgba(0,0,0,0.22)"/>
<rect x="2216" y="1364" width="2" height="24" fill="rgba(0,0,0,0.22)"/>
<rect x="2282" y="1364" width="2" height="24" fill="rgba(0,0,0,0.22)"/>
<rect x="2346" y="1364" width="2" height="24" fill="rgba(0,0,0,0.22)"/>
<rect x="16" y="76" width="258" height="22" fill="rgba(0,0,0,0.085)"/>
<rect x="532" y="76" width="260" height="22" fill="rgba(0,0,0,0.085)"/>
<rect x="1050" y="76" width="260" height="22" fill="rgba(0,0,0,0.085)"/>
<rect x="1568" y="76" width="260" height="22" fill="rgba(0,0,0,0.085)"/>
<rect x="2086" y="76" width="260" height="22" fill="rgba(0,0,0,0.085)"/>
<rect x="16" y="102" width="258" height="34" fill="rgba(0,0,0,0.085)"/>
<rect x="532" y="102" width="260" height="34" fill="rgba(0,0,0,0.085)"/>
<rect x="1050" y="102" width="260" height="34" fill="rgba(0,0,0,0.085)"/>
<rect x="1568" y="102" width="260" height="34" fill="rgba(0,0,0,0.085)"/>
<rect x="2086" y="102" width="260" height="34" fill="rgba(0,0,0,0.085)"/>
<rect x="16" y="140" width="258" height="70" fill="rgba(0,0,0,0.085)"/>
<rect x="532" y="140" width="260" height="70" fill="rgba(0,0,0,0.085)"/>
<rect x="1050" y="140" width="260" height="70" fill="rgba(0,0,0,0.085)"/>
<rect x="1568" y="140" width="260" height="70" fill="rgba(0,0,0,0.085)"/>
<rect x="2086" y="140" width="260" height="70" fill="rgba(0,0,0,0.085)"/>
<rect x="16" y="474" width="258" height="34" fill="rgba(0,0,0,0.085)"/>
<rect x="532" y="474" width="260" height="34" fill="rgba(0,0,0,0.085)"/>
<rect x="1050" y="474" width="260" height="34" fill="rgba(0,0,0,0.085)"/>
<rect x="1568" y="474" width="260" height="34" fill="rgba(0,0,0,0.085)"/>
<rect x="2086" y="474" width="260" height="34" fill="rgba(0,0,0,0.085)"/>
<rect x="16" y="512" width="258" height="70" fill="rgba(0,0,0,0.085)"/>
<rect x="532" y="512" width="260" height="70" fill="rgba(0,0,0,0.085)"/>
<rect x="1050" y="512" width="260" height="70" fill="rgba(0,0,0,0.085)"/>
<rect x="1568" y="512" width="260" height="70" fill="rgba(0,0,0,0.085)"/>
<rect x="2086" y="512" width="260" height="70" fill="rgba(0,0,0,0.085)"/>
<rect x="16" y="882" width="258" height="70" fill="rgba(0,0,0,0.085)"/>
<rect x="532" y="882" width="260" height="70" fill="rgba(0,0,0,0.085)"/>
<rect x="1050" y="882" width="260" height="70" fill="rgba(0,0,0,0.085)"/>
<rect x="1568" y="882" width="260" height="70" fill="rgba(0,0,0,0.085)"/>
<rect x="2086" y="882" width="260" height="70" fill="rgba(0,0,0,0.085)"/>
<rect x="16" y="1104" width="258" height="70" fill="rgba(0,0,0,0.085)"/>
<rect x="532" y="1104" width="260" height="70" fill="rgba(0,0,0,0.085)"/>
<rect x="1050" y="1104" width="260" height="70" fill="rgba(0,0,0,0.085)"/>
<rect x="1568" y="1104" width="260" height="70" fill="rgba(0,0,0,0.085)"/>
<rect x="2086" y="1104" width="260" height="70" fill="rgba(0,0,0,0.085)"/>
<rect x="16" y="1326" width="258" height="34" fill="rgba(0,0,0,0.085)"/>
<rect x="532" y="1326" width="260" height="34" fill="rgba(0,0,0,0.085)"/>
<rect x="1050" y="1326" width="260" height="34" fill="rgba(0,0,0,0.085)"/>
<rect x="1568" y="1326" width="260" height="34" fill="rgba(0,0,0,0.085)"/>
<rect x="2086" y="1326" width="260" height="34" fill="rgba(0,0,0,0.085)"/>
<rect x="16" y="1364" width="258" height="24" fill="rgba(0,0,0,0.085)"/>
<rect x="532" y="1364" width="260" height="24" fill="rgba(0,0,0,0.085)"/>
<rect x="1050" y="1364" width="260" height="24" fill="rgba(0,0,0,0.085)"/>
<rect x="1568" y="1364" width="260" height="24" fill="rgba(0,0,0,0.085)"/>
<rect x="2086" y="1364" width="260" height="24" fill="rgba(0,0,0,0.085)"/>
<rect x="16" y="1394" width="258" height="34" fill="rgba(0,0,0,0.085)"/>
<rect x="532" y="1394" width="260" height="34" fill="rgba(0,0,0,0.085)"/>
<rect x="1050" y="1394" width="260" height="34" fill="rgba(0,0,0,0.085)"/>
<rect x="1568" y="1394" width="260" height="34" fill="rgba(0,0,0,0.085)"/>
<rect x="2086" y="1394" width="260" height="34" fill="rgba(0,0,0,0.085)"/>
<rect x="14" y="248" width="130" height="36" fill="#a95f7d"/>
<rect x="78" y="248" width="2" height="36" fill="rgba(40,50,110,0.28)"/>
<rect x="14" y="248" width="2" height="36" fill="rgba(20,0,30,0.45)"/>
<rect x="144" y="248" width="130" height="36" fill="#a95f7d"/>
<rect x="208" y="248" width="2" height="36" fill="rgba(40,50,110,0.28)"/>
<rect x="144" y="248" width="2" height="36" fill="rgba(20,0,30,0.45)"/>
<rect x="274" y="248" width="128" height="36" fill="#a95f7d"/>
<rect x="338" y="248" width="2" height="36" fill="rgba(40,50,110,0.28)"/>
<rect x="274" y="248" width="2" height="36" fill="rgba(20,0,30,0.45)"/>
<rect x="402" y="248" width="98" height="36" fill="#a95f7d"/>
<rect x="468" y="248" width="2" height="36" fill="rgba(40,50,110,0.28)"/>
<rect x="402" y="248" width="2" height="36" fill="rgba(20,0,30,0.45)"/>
<rect x="532" y="248" width="130" height="36" fill="#a95f7d"/>
<rect x="596" y="248" width="2" height="36" fill="rgba(40,50,110,0.28)"/>
<rect x="532" y="248" width="2" height="36" fill="rgba(20,0,30,0.45)"/>
<rect x="662" y="248" width="130" height="36" fill="#a95f7d"/>
<rect x="726" y="248" width="2" height="36" fill="rgba(40,50,110,0.28)"/>
<rect x="662" y="248" width="2" height="36" fill="rgba(20,0,30,0.45)"/>
<rect x="792" y="248" width="128" height="36" fill="#a95f7d"/>
<rect x="856" y="248" width="2" height="36" fill="rgba(40,50,110,0.28)"/>
<rect x="792" y="248" width="2" height="36" fill="rgba(20,0,30,0.45)"/>
<rect x="920" y="248" width="130" height="36" fill="#a95f7d"/>
<rect x="986" y="248" width="2" height="36" fill="rgba(40,50,110,0.28)"/>
<rect x="920" y="248" width="2" height="36" fill="rgba(20,0,30,0.45)"/>
<rect x="1568" y="248" width="260" height="36" fill="#a95f7d"/>
<rect x="1634" y="248" width="2" height="36" fill="rgba(40,50,110,0.28)"/>
<rect x="1698" y="248" width="2" height="36" fill="rgba(40,50,110,0.28)"/>
<rect x="1762" y="248" width="2" height="36" fill="rgba(40,50,110,0.28)"/>
<rect x="1568" y="248" width="2" height="36" fill="rgba(20,0,30,0.45)"/>
<rect x="1828" y="248" width="130" height="36" fill="#a95f7d"/>
<rect x="1892" y="248" width="2" height="36" fill="rgba(40,50,110,0.28)"/>
<rect x="1828" y="248" width="2" height="36" fill="rgba(20,0,30,0.45)"/>
<rect x="1958" y="248" width="128" height="36" fill="#a95f7d"/>
<rect x="2022" y="248" width="2" height="36" fill="rgba(40,50,110,0.28)"/>
<rect x="1958" y="248" width="2" height="36" fill="rgba(20,0,30,0.45)"/>
<rect x="2086" y="248" width="130" height="36" fill="#a95f7d"/>
<rect x="2152" y="248" width="2" height="36" fill="rgba(40,50,110,0.28)"/>
<rect x="2086" y="248" width="2" height="36" fill="rgba(20,0,30,0.45)"/>
<rect x="2216" y="248" width="130" height="36" fill="#a95f7d"/>
<rect x="2282" y="248" width="2" height="36" fill="rgba(40,50,110,0.28)"/>
<rect x="2216" y="248" width="2" height="36" fill="rgba(20,0,30,0.45)"/>
<rect x="14" y="214" width="130" height="34" fill="#80261f"/>
<rect x="16" y="216" width="128" height="30" fill="#ec4a40"/>
<rect x="144" y="214" width="130" height="34" fill="#80261f"/>
<rect x="146" y="216" width="128" height="30" fill="#ec4a40"/>
<rect x="274" y="214" width="128" height="34" fill="#80261f"/>
<rect x="276" y="216" width="126" height="30" fill="#ec4a40"/>
<rect x="402" y="214" width="98" height="34" fill="#80261f"/>
<rect x="404" y="216" width="96" height="30" fill="#ec4a40"/>
<rect x="500" y="214" width="2" height="8" fill="#141414"/>
<rect x="500" y="226" width="2" height="8" fill="#141414"/>
<rect x="500" y="238" width="2" height="8" fill="#141414"/>
<rect x="532" y="214" width="130" height="34" fill="#80261f"/>
<rect x="534" y="216" width="128" height="30" fill="#ec4a40"/>
<rect x="662" y="214" width="130" height="34" fill="#80261f"/>
<rect x="664" y="216" width="128" height="30" fill="#ec4a40"/>
<rect x="792" y="214" width="128" height="34" fill="#80261f"/>
<rect x="794" y="216" width="126" height="30" fill="#ec4a40"/>
<rect x="920" y="214" width="130" height="34" fill="#80261f"/>
<rect x="922" y="216" width="128" height="30" fill="#ec4a40"/>
<rect x="1050" y="214" width="2" height="8" fill="#141414"/>
<rect x="1050" y="226" width="2" height="8" fill="#141414"/>
<rect x="1050" y="238" width="2" height="8" fill="#141414"/>
<rect x="1568" y="214" width="260" height="34" fill="#80261f"/>
<rect x="1570" y="216" width="258" height="30" fill="#ec4a40"/>
<rect x="1828" y="214" width="130" height="34" fill="#80261f"/>
<rect x="1830" y="216" width="128" height="30" fill="#ec4a40"/>
<rect x="1958" y="214" width="128" height="34" fill="#80261f"/>
<rect x="1960" y="216" width="126" height="30" fill="#ec4a40"/>
<rect x="2086" y="214" width="130" height="34" fill="#80261f"/>
<rect x="2088" y="216" width="128" height="30" fill="#ec4a40"/>
<rect x="2216" y="214" width="130" height="34" fill="#80261f"/>
<rect x="2218" y="216" width="128" height="30" fill="#ec4a40"/>
<rect x="2346" y="214" width="2" height="8" fill="#141414"/>
<rect x="2346" y="226" width="2" height="8" fill="#141414"/>
<rect x="2346" y="238" width="2" height="8" fill="#141414"/>
<rect x="14" y="278" width="486" height="6" fill="#1c1a1c"/>
<rect x="30" y="279" width="2" height="5" fill="#d07aa0"/>
<rect x="46" y="279" width="2" height="5" fill="#d07aa0"/>
<rect x="62" y="279" width="2" height="5" fill="#d07aa0"/>
<rect x="78" y="279" width="2" height="5" fill="#d07aa0"/>
<rect x="94" y="279" width="2" height="5" fill="#d07aa0"/>
<rect x="192" y="279" width="2" height="5" fill="#d07aa0"/>
<rect x="208" y="279" width="2" height="5" fill="#d07aa0"/>
<rect x="224" y="279" width="2" height="5" fill="#d07aa0"/>
<rect x="240" y="279" width="2" height="5" fill="#d07aa0"/>
<rect x="256" y="279" width="2" height="5" fill="#d07aa0"/>
<rect x="354" y="279" width="2" height="5" fill="#d07aa0"/>
<rect x="370" y="279" width="2" height="5" fill="#d07aa0"/>
<rect x="386" y="279" width="2" height="5" fill="#d07aa0"/>
<rect x="402" y="279" width="2" height="5" fill="#d07aa0"/>
<rect x="418" y="279" width="2" height="5" fill="#d07aa0"/>
<rect x="358" y="279" width="2" height="5" fill="#d07aa0"/>
<rect x="532" y="278" width="292" height="6" fill="#1c1a1c"/>
<rect x="548" y="279" width="2" height="5" fill="#d07aa0"/>
<rect x="564" y="279" width="2" height="5" fill="#d07aa0"/>
<rect x="580" y="279" width="2" height="5" fill="#d07aa0"/>
<rect x="596" y="279" width="2" height="5" fill="#d07aa0"/>
<rect x="694" y="279" width="2" height="5" fill="#d07aa0"/>
<rect x="710" y="279" width="2" height="5" fill="#d07aa0"/>
<rect x="726" y="279" width="2" height="5" fill="#d07aa0"/>
<rect x="742" y="279" width="2" height="5" fill="#d07aa0"/>
<rect x="758" y="279" width="2" height="5" fill="#d07aa0"/>
<rect x="702" y="279" width="2" height="5" fill="#d07aa0"/>
<rect x="824" y="248" width="28" height="6" fill="#1c1a1c"/>
<rect x="854" y="248" width="2" height="6" fill="#1c1a1c"/>
<rect x="858" y="260" width="6" height="6" fill="#1c1a1c"/>
<rect x="866" y="260" width="6" height="6" fill="#1c1a1c"/>
<rect x="874" y="260" width="6" height="6" fill="#1c1a1c"/>
<rect x="882" y="260" width="6" height="6" fill="#1c1a1c"/>
<rect x="890" y="266" width="6" height="6" fill="#1c1a1c"/>
<rect x="898" y="266" width="6" height="6" fill="#1c1a1c"/>
<rect x="906" y="266" width="6" height="6" fill="#1c1a1c"/>
<rect x="914" y="266" width="6" height="6" fill="#1c1a1c"/>
<rect x="922" y="278" width="6" height="6" fill="#1c1a1c"/>
<rect x="930" y="278" width="24" height="6" fill="#1c1a1c"/>
<rect x="954" y="248" width="32" height="6" fill="#1c1a1c"/>
<rect x="986" y="260" width="32" height="6" fill="#1c1a1c"/>
<rect x="1020" y="266" width="6" height="6" fill="#1c1a1c"/>
<rect x="1028" y="266" width="6" height="6" fill="#1c1a1c"/>
<rect x="1036" y="266" width="6" height="6" fill="#1c1a1c"/>
<rect x="1044" y="266" width="6" height="6" fill="#1c1a1c"/>
<rect x="1568" y="278" width="292" height="6" fill="#1c1a1c"/>
<rect x="1577" y="279" width="2" height="5" fill="#d07aa0"/>
<rect x="1585" y="279" width="2" height="5" fill="#d07aa0"/>
<rect x="1593" y="279" width="2" height="5" fill="#d07aa0"/>
<rect x="1601" y="279" width="2" height="5" fill="#d07aa0"/>
<rect x="1692" y="279" width="2" height="5" fill="#d07aa0"/>
<rect x="1700" y="279" width="2" height="5" fill="#d07aa0"/>
<rect x="1708" y="279" width="2" height="5" fill="#d07aa0"/>
<rect x="1716" y="279" width="2" height="5" fill="#d07aa0"/>
<rect x="1724" y="279" width="2" height="5" fill="#d07aa0"/>
<rect x="1732" y="279" width="2" height="5" fill="#d07aa0"/>
<rect x="1740" y="279" width="2" height="5" fill="#d07aa0"/>
<rect x="1748" y="279" width="2" height="5" fill="#d07aa0"/>
<rect x="1756" y="279" width="2" height="5" fill="#d07aa0"/>
<rect x="1764" y="279" width="2" height="5" fill="#d07aa0"/>
<rect x="1772" y="279" width="2" height="5" fill="#d07aa0"/>
<rect x="1862" y="248" width="6" height="6" fill="#1c1a1c"/>
<rect x="1870" y="248" width="6" height="6" fill="#1c1a1c"/>
<rect x="1878" y="248" width="6" height="6" fill="#1c1a1c"/>
<rect x="1886" y="248" width="6" height="6" fill="#1c1a1c"/>
<rect x="1894" y="260" width="6" height="6" fill="#1c1a1c"/>
<rect x="1902" y="260" width="6" height="6" fill="#1c1a1c"/>
<rect x="1910" y="260" width="6" height="6" fill="#1c1a1c"/>
<rect x="1918" y="260" width="6" height="6" fill="#1c1a1c"/>
<rect x="1926" y="266" width="6" height="6" fill="#1c1a1c"/>
<rect x="1934" y="266" width="6" height="6" fill="#1c1a1c"/>
<rect x="1942" y="266" width="16" height="6" fill="#1c1a1c"/>
<rect x="1960" y="278" width="30" height="6" fill="#1c1a1c"/>
<rect x="1990" y="248" width="32" height="6" fill="#1c1a1c"/>
<rect x="2022" y="260" width="4" height="6" fill="#1c1a1c"/>
<rect x="2028" y="260" width="2" height="6" fill="#1c1a1c"/>
<rect x="2032" y="260" width="6" height="6" fill="#1c1a1c"/>
<rect x="2040" y="260" width="6" height="6" fill="#1c1a1c"/>
<rect x="2048" y="260" width="6" height="6" fill="#1c1a1c"/>
<rect x="2056" y="266" width="6" height="6" fill="#1c1a1c"/>
<rect x="2064" y="266" width="6" height="6" fill="#1c1a1c"/>
<rect x="2072" y="266" width="6" height="6" fill="#1c1a1c"/>
<rect x="2080" y="266" width="6" height="6" fill="#1c1a1c"/>
<rect x="2088" y="278" width="6" height="6" fill="#1c1a1c"/>
<rect x="2096" y="278" width="6" height="6" fill="#1c1a1c"/>
<rect x="2104" y="278" width="16" height="6" fill="#1c1a1c"/>
<rect x="2120" y="248" width="32" height="6" fill="#1c1a1c"/>
<rect x="2152" y="260" width="32" height="6" fill="#1c1a1c"/>
<rect x="2184" y="266" width="8" height="6" fill="#1c1a1c"/>
<rect x="2194" y="266" width="6" height="6" fill="#1c1a1c"/>
<rect x="2202" y="266" width="6" height="6" fill="#1c1a1c"/>
<rect x="2210" y="266" width="6" height="6" fill="#1c1a1c"/>
<rect x="2218" y="278" width="6" height="6" fill="#1c1a1c"/>
<rect x="2226" y="278" width="6" height="6" fill="#1c1a1c"/>
<rect x="2234" y="278" width="6" height="6" fill="#1c1a1c"/>
<rect x="2242" y="278" width="6" height="6" fill="#1c1a1c"/>
<rect x="2250" y="248" width="6" height="6" fill="#1c1a1c"/>
<rect x="2258" y="248" width="6" height="6" fill="#1c1a1c"/>
<rect x="2266" y="248" width="6" height="6" fill="#1c1a1c"/>
<rect x="2274" y="248" width="8" height="6" fill="#1c1a1c"/>
<rect x="2282" y="260" width="32" height="6" fill="#1c1a1c"/>
<rect x="2314" y="266" width="32" height="6" fill="#1c1a1c"/>
<rect x="14" y="248" width="2" height="36" fill="rgba(70,30,60,0.55)"/>
<rect x="144" y="248" width="2" height="36" fill="rgba(70,30,60,0.55)"/>
<rect x="274" y="248" width="2" height="36" fill="rgba(70,30,60,0.55)"/>
<rect x="402" y="248" width="2" height="36" fill="rgba(70,30,60,0.55)"/>
<rect x="532" y="248" width="2" height="36" fill="rgba(70,30,60,0.55)"/>
<rect x="662" y="248" width="2" height="36" fill="rgba(70,30,60,0.55)"/>
<rect x="792" y="248" width="2" height="36" fill="rgba(70,30,60,0.55)"/>
<rect x="920" y="248" width="2" height="36" fill="rgba(70,30,60,0.55)"/>
<rect x="1568" y="248" width="2" height="36" fill="rgba(70,30,60,0.55)"/>
<rect x="1828" y="248" width="2" height="36" fill="rgba(70,30,60,0.55)"/>
<rect x="1958" y="248" width="2" height="36" fill="rgba(70,30,60,0.55)"/>
<rect x="2086" y="248" width="2" height="36" fill="rgba(70,30,60,0.55)"/>
<rect x="2216" y="248" width="2" height="36" fill="rgba(70,30,60,0.55)"/>
<rect x="274" y="322" width="128" height="36" fill="#a95f7d"/>
<rect x="338" y="322" width="2" height="36" fill="rgba(40,50,110,0.28)"/>
<rect x="274" y="322" width="2" height="36" fill="rgba(20,0,30,0.45)"/>
<rect x="402" y="322" width="98" height="36" fill="#a95f7d"/>
<rect x="468" y="322" width="2" height="36" fill="rgba(40,50,110,0.28)"/>
<rect x="402" y="322" width="2" height="36" fill="rgba(20,0,30,0.45)"/>
<rect x="532" y="322" width="130" height="36" fill="#a95f7d"/>
<rect x="596" y="322" width="2" height="36" fill="rgba(40,50,110,0.28)"/>
<rect x="532" y="322" width="2" height="36" fill="rgba(20,0,30,0.45)"/>
<rect x="662" y="322" width="130" height="36" fill="#a95f7d"/>
<rect x="726" y="322" width="2" height="36" fill="rgba(40,50,110,0.28)"/>
<rect x="662" y="322" width="2" height="36" fill="rgba(20,0,30,0.45)"/>
<rect x="792" y="322" width="128" height="36" fill="#a95f7d"/>
<rect x="856" y="322" width="2" height="36" fill="rgba(40,50,110,0.28)"/>
<rect x="792" y="322" width="2" height="36" fill="rgba(20,0,30,0.45)"/>
<rect x="920" y="322" width="130" height="36" fill="#a95f7d"/>
<rect x="986" y="322" width="2" height="36" fill="rgba(40,50,110,0.28)"/>
<rect x="920" y="322" width="2" height="36" fill="rgba(20,0,30,0.45)"/>
<rect x="1568" y="322" width="260" height="36" fill="#a95f7d"/>
<rect x="1634" y="322" width="2" height="36" fill="rgba(40,50,110,0.28)"/>
<rect x="1698" y="322" width="2" height="36" fill="rgba(40,50,110,0.28)"/>
<rect x="1762" y="322" width="2" height="36" fill="rgba(40,50,110,0.28)"/>
<rect x="1568" y="322" width="2" height="36" fill="rgba(20,0,30,0.45)"/>
<rect x="1828" y="322" width="130" height="36" fill="#a95f7d"/>
<rect x="1892" y="322" width="2" height="36" fill="rgba(40,50,110,0.28)"/>
<rect x="1828" y="322" width="2" height="36" fill="rgba(20,0,30,0.45)"/>
<rect x="1958" y="322" width="128" height="36" fill="#a95f7d"/>
<rect x="2022" y="322" width="2" height="36" fill="rgba(40,50,110,0.28)"/>
<rect x="1958" y="322" width="2" height="36" fill="rgba(20,0,30,0.45)"/>
<rect x="2086" y="322" width="130" height="36" fill="#a95f7d"/>
<rect x="2152" y="322" width="2" height="36" fill="rgba(40,50,110,0.28)"/>
<rect x="2086" y="322" width="2" height="36" fill="rgba(20,0,30,0.45)"/>
<rect x="2216" y="322" width="130" height="36" fill="#a95f7d"/>
<rect x="2282" y="322" width="2" height="36" fill="rgba(40,50,110,0.28)"/>
<rect x="2216" y="322" width="2" height="36" fill="rgba(20,0,30,0.45)"/>
<rect x="274" y="288" width="128" height="34" fill="#80261f"/>
<rect x="276" y="290" width="126" height="30" fill="#ec4a40"/>
<rect x="402" y="288" width="98" height="34" fill="#80261f"/>
<rect x="404" y="290" width="96" height="30" fill="#ec4a40"/>
<rect x="500" y="288" width="2" height="8" fill="#141414"/>
<rect x="500" y="300" width="2" height="8" fill="#141414"/>
<rect x="500" y="312" width="2" height="8" fill="#141414"/>
<rect x="532" y="288" width="130" height="34" fill="#80261f"/>
<rect x="534" y="290" width="128" height="30" fill="#ec4a40"/>
<rect x="662" y="288" width="130" height="34" fill="#80261f"/>
<rect x="664" y="290" width="128" height="30" fill="#ec4a40"/>
<rect x="792" y="288" width="128" height="34" fill="#80261f"/>
<rect x="794" y="290" width="126" height="30" fill="#ec4a40"/>
<rect x="920" y="288" width="130" height="34" fill="#80261f"/>
<rect x="922" y="290" width="128" height="30" fill="#ec4a40"/>
<rect x="1050" y="288" width="2" height="8" fill="#141414"/>
<rect x="1050" y="300" width="2" height="8" fill="#141414"/>
<rect x="1050" y="312" width="2" height="8" fill="#141414"/>
<rect x="1568" y="288" width="260" height="34" fill="#80261f"/>
<rect x="1570" y="290" width="258" height="30" fill="#ec4a40"/>
<rect x="1828" y="288" width="130" height="34" fill="#80261f"/>
<rect x="1830" y="290" width="128" height="30" fill="#ec4a40"/>
<rect x="1958" y="288" width="128" height="34" fill="#80261f"/>
<rect x="1960" y="290" width="126" height="30" fill="#ec4a40"/>
<rect x="2086" y="288" width="130" height="34" fill="#80261f"/>
<rect x="2088" y="290" width="128" height="30" fill="#ec4a40"/>
<rect x="2216" y="288" width="130" height="34" fill="#80261f"/>
<rect x="2218" y="290" width="128" height="30" fill="#ec4a40"/>
<rect x="2346" y="288" width="2" height="8" fill="#141414"/>
<rect x="2346" y="300" width="2" height="8" fill="#141414"/>
<rect x="2346" y="312" width="2" height="8" fill="#141414"/>
<rect x="274" y="352" width="226" height="6" fill="#1c1a1c"/>
<rect x="354" y="353" width="2" height="5" fill="#d07aa0"/>
<rect x="370" y="353" width="2" height="5" fill="#d07aa0"/>
<rect x="386" y="353" width="2" height="5" fill="#d07aa0"/>
<rect x="402" y="353" width="2" height="5" fill="#d07aa0"/>
<rect x="418" y="353" width="2" height="5" fill="#d07aa0"/>
<rect x="358" y="353" width="2" height="5" fill="#d07aa0"/>
<rect x="532" y="352" width="292" height="6" fill="#1c1a1c"/>
<rect x="548" y="353" width="2" height="5" fill="#d07aa0"/>
<rect x="564" y="353" width="2" height="5" fill="#d07aa0"/>
<rect x="580" y="353" width="2" height="5" fill="#d07aa0"/>
<rect x="596" y="353" width="2" height="5" fill="#d07aa0"/>
<rect x="694" y="353" width="2" height="5" fill="#d07aa0"/>
<rect x="710" y="353" width="2" height="5" fill="#d07aa0"/>
<rect x="726" y="353" width="2" height="5" fill="#d07aa0"/>
<rect x="742" y="353" width="2" height="5" fill="#d07aa0"/>
<rect x="758" y="353" width="2" height="5" fill="#d07aa0"/>
<rect x="702" y="353" width="2" height="5" fill="#d07aa0"/>
<rect x="824" y="322" width="28" height="6" fill="#1c1a1c"/>
<rect x="854" y="322" width="2" height="6" fill="#1c1a1c"/>
<rect x="858" y="334" width="6" height="6" fill="#1c1a1c"/>
<rect x="866" y="334" width="6" height="6" fill="#1c1a1c"/>
<rect x="874" y="334" width="6" height="6" fill="#1c1a1c"/>
<rect x="882" y="334" width="6" height="6" fill="#1c1a1c"/>
<rect x="890" y="346" width="6" height="6" fill="#1c1a1c"/>
<rect x="898" y="346" width="6" height="6" fill="#1c1a1c"/>
<rect x="906" y="346" width="6" height="6" fill="#1c1a1c"/>
<rect x="914" y="346" width="6" height="6" fill="#1c1a1c"/>
<rect x="922" y="352" width="6" height="6" fill="#1c1a1c"/>
<rect x="930" y="352" width="24" height="6" fill="#1c1a1c"/>
<rect x="954" y="322" width="32" height="6" fill="#1c1a1c"/>
<rect x="986" y="334" width="32" height="6" fill="#1c1a1c"/>
<rect x="1020" y="346" width="6" height="6" fill="#1c1a1c"/>
<rect x="1028" y="346" width="6" height="6" fill="#1c1a1c"/>
<rect x="1036" y="346" width="6" height="6" fill="#1c1a1c"/>
<rect x="1044" y="346" width="6" height="6" fill="#1c1a1c"/>
<rect x="1568" y="352" width="292" height="6" fill="#1c1a1c"/>
<rect x="1577" y="353" width="2" height="5" fill="#d07aa0"/>
<rect x="1585" y="353" width="2" height="5" fill="#d07aa0"/>
<rect x="1593" y="353" width="2" height="5" fill="#d07aa0"/>
<rect x="1601" y="353" width="2" height="5" fill="#d07aa0"/>
<rect x="1692" y="353" width="2" height="5" fill="#d07aa0"/>
<rect x="1700" y="353" width="2" height="5" fill="#d07aa0"/>
<rect x="1708" y="353" width="2" height="5" fill="#d07aa0"/>
<rect x="1716" y="353" width="2" height="5" fill="#d07aa0"/>
<rect x="1724" y="353" width="2" height="5" fill="#d07aa0"/>
<rect x="1732" y="353" width="2" height="5" fill="#d07aa0"/>
<rect x="1740" y="353" width="2" height="5" fill="#d07aa0"/>
<rect x="1748" y="353" width="2" height="5" fill="#d07aa0"/>
<rect x="1756" y="353" width="2" height="5" fill="#d07aa0"/>
<rect x="1764" y="353" width="2" height="5" fill="#d07aa0"/>
<rect x="1772" y="353" width="2" height="5" fill="#d07aa0"/>
<rect x="1862" y="322" width="6" height="6" fill="#1c1a1c"/>
<rect x="1870" y="322" width="6" height="6" fill="#1c1a1c"/>
<rect x="1878" y="322" width="6" height="6" fill="#1c1a1c"/>
<rect x="1886" y="322" width="6" height="6" fill="#1c1a1c"/>
<rect x="1894" y="334" width="6" height="6" fill="#1c1a1c"/>
<rect x="1902" y="334" width="6" height="6" fill="#1c1a1c"/>
<rect x="1910" y="334" width="6" height="6" fill="#1c1a1c"/>
<rect x="1918" y="334" width="6" height="6" fill="#1c1a1c"/>
<rect x="1926" y="346" width="6" height="6" fill="#1c1a1c"/>
<rect x="1934" y="346" width="6" height="6" fill="#1c1a1c"/>
<rect x="1942" y="346" width="16" height="6" fill="#1c1a1c"/>
<rect x="1960" y="352" width="30" height="6" fill="#1c1a1c"/>
<rect x="1990" y="322" width="32" height="6" fill="#1c1a1c"/>
<rect x="2022" y="334" width="4" height="6" fill="#1c1a1c"/>
<rect x="2028" y="334" width="2" height="6" fill="#1c1a1c"/>
<rect x="2032" y="334" width="6" height="6" fill="#1c1a1c"/>
<rect x="2040" y="334" width="6" height="6" fill="#1c1a1c"/>
<rect x="2048" y="334" width="6" height="6" fill="#1c1a1c"/>
<rect x="2056" y="346" width="6" height="6" fill="#1c1a1c"/>
<rect x="2064" y="346" width="6" height="6" fill="#1c1a1c"/>
<rect x="2072" y="346" width="6" height="6" fill="#1c1a1c"/>
<rect x="2080" y="346" width="6" height="6" fill="#1c1a1c"/>
<rect x="2088" y="352" width="6" height="6" fill="#1c1a1c"/>
<rect x="2096" y="352" width="6" height="6" fill="#1c1a1c"/>
<rect x="2104" y="352" width="16" height="6" fill="#1c1a1c"/>
<rect x="2120" y="322" width="32" height="6" fill="#1c1a1c"/>
<rect x="2152" y="334" width="32" height="6" fill="#1c1a1c"/>
<rect x="2184" y="346" width="8" height="6" fill="#1c1a1c"/>
<rect x="2194" y="346" width="6" height="6" fill="#1c1a1c"/>
<rect x="2202" y="346" width="6" height="6" fill="#1c1a1c"/>
<rect x="2210" y="346" width="6" height="6" fill="#1c1a1c"/>
<rect x="2218" y="352" width="6" height="6" fill="#1c1a1c"/>
<rect x="2226" y="352" width="6" height="6" fill="#1c1a1c"/>
<rect x="2234" y="352" width="6" height="6" fill="#1c1a1c"/>
<rect x="2242" y="352" width="6" height="6" fill="#1c1a1c"/>
<rect x="2250" y="322" width="6" height="6" fill="#1c1a1c"/>
<rect x="2258" y="322" width="6" height="6" fill="#1c1a1c"/>
<rect x="2266" y="322" width="6" height="6" fill="#1c1a1c"/>
<rect x="2274" y="322" width="8" height="6" fill="#1c1a1c"/>
<rect x="2282" y="334" width="32" height="6" fill="#1c1a1c"/>
<rect x="2314" y="346" width="32" height="6" fill="#1c1a1c"/>
<rect x="274" y="322" width="2" height="36" fill="rgba(70,30,60,0.55)"/>
<rect x="402" y="322" width="2" height="36" fill="rgba(70,30,60,0.55)"/>
<rect x="532" y="322" width="2" height="36" fill="rgba(70,30,60,0.55)"/>
<rect x="662" y="322" width="2" height="36" fill="rgba(70,30,60,0.55)"/>
<rect x="792" y="322" width="2" height="36" fill="rgba(70,30,60,0.55)"/>
<rect x="920" y="322" width="2" height="36" fill="rgba(70,30,60,0.55)"/>
<rect x="1568" y="322" width="2" height="36" fill="rgba(70,30,60,0.55)"/>
<rect x="1828" y="322" width="2" height="36" fill="rgba(70,30,60,0.55)"/>
<rect x="1958" y="322" width="2" height="36" fill="rgba(70,30,60,0.55)"/>
<rect x="2086" y="322" width="2" height="36" fill="rgba(70,30,60,0.55)"/>
<rect x="2216" y="322" width="2" height="36" fill="rgba(70,30,60,0.55)"/>
<rect x="1698" y="216" width="2" height="6" fill="#1c1a1c"/>
<rect x="1698" y="290" width="2" height="6" fill="#1c1a1c"/>
<rect x="144" y="362" width="130" height="34" fill="#80261f"/>
<rect x="146" y="364" width="128" height="30" fill="#ec4a40"/>
<rect x="274" y="362" width="128" height="34" fill="#80261f"/>
<rect x="276" y="364" width="126" height="30" fill="#ec4a40"/>
<rect x="402" y="362" width="98" height="34" fill="#80261f"/>
<rect x="404" y="364" width="96" height="30" fill="#ec4a40"/>
<rect x="500" y="362" width="2" height="8" fill="#141414"/>
<rect x="500" y="374" width="2" height="8" fill="#141414"/>
<rect x="500" y="386" width="2" height="8" fill="#141414"/>
<rect x="532" y="362" width="130" height="34" fill="#80261f"/>
<rect x="534" y="364" width="128" height="30" fill="#ec4a40"/>
<rect x="662" y="362" width="130" height="34" fill="#80261f"/>
<rect x="664" y="364" width="128" height="30" fill="#ec4a40"/>
<rect x="792" y="362" width="258" height="34" fill="#80261f"/>
<rect x="794" y="364" width="256" height="30" fill="#ec4a40"/>
<rect x="1050" y="362" width="2" height="8" fill="#141414"/>
<rect x="1050" y="374" width="2" height="8" fill="#141414"/>
<rect x="1050" y="386" width="2" height="8" fill="#141414"/>
<rect x="1568" y="362" width="260" height="34" fill="#80261f"/>
<rect x="1570" y="364" width="258" height="30" fill="#ec4a40"/>
<rect x="1828" y="362" width="258" height="34" fill="#80261f"/>
<rect x="1830" y="364" width="256" height="30" fill="#ec4a40"/>
<rect x="2086" y="362" width="260" height="34" fill="#80261f"/>
<rect x="2088" y="364" width="258" height="30" fill="#ec4a40"/>
<rect x="2346" y="362" width="2" height="8" fill="#141414"/>
<rect x="2346" y="374" width="2" height="8" fill="#141414"/>
<rect x="2346" y="386" width="2" height="8" fill="#141414"/>
<svg x="500" y="362" width="32" height="34"><rect width="32" height="34" fill="url(#hatch)"/><rect y="25" width="32" height="9" fill="rgba(20,22,28,0.22)"/></svg>
<svg x="1050" y="362" width="48" height="34"><rect width="48" height="34" fill="url(#hatch)"/><rect y="25" width="48" height="9" fill="rgba(20,22,28,0.22)"/></svg>
<svg x="2346" y="362" width="46" height="34"><rect width="46" height="34" fill="url(#hatch)"/><rect y="25" width="46" height="9" fill="rgba(20,22,28,0.22)"/></svg>
<rect x="1698" y="364" width="2" height="6" fill="#1c1a1c"/>
<rect x="1698" y="388" width="2" height="6" fill="#1c1a1c"/>
<rect x="274" y="434" width="258" height="36" fill="#a95f7d"/>
<rect x="338" y="434" width="2" height="36" fill="rgba(40,50,110,0.28)"/>
<rect x="402" y="434" width="2" height="36" fill="rgba(40,50,110,0.28)"/>
<rect x="468" y="434" width="2" height="36" fill="rgba(40,50,110,0.28)"/>
<rect x="274" y="434" width="2" height="36" fill="rgba(20,0,30,0.45)"/>
<rect x="532" y="434" width="1036" height="36" fill="#a95f7d"/>
<rect x="596" y="434" width="2" height="36" fill="rgba(40,50,110,0.28)"/>
<rect x="662" y="434" width="2" height="36" fill="rgba(40,50,110,0.28)"/>
<rect x="726" y="434" width="2" height="36" fill="rgba(40,50,110,0.28)"/>
<rect x="792" y="434" width="2" height="36" fill="rgba(40,50,110,0.28)"/>
<rect x="856" y="434" width="2" height="36" fill="rgba(40,50,110,0.28)"/>
<rect x="920" y="434" width="2" height="36" fill="rgba(40,50,110,0.28)"/>
<rect x="986" y="434" width="2" height="36" fill="rgba(40,50,110,0.28)"/>
<rect x="1050" y="434" width="2" height="36" fill="rgba(40,50,110,0.28)"/>
<rect x="1116" y="434" width="2" height="36" fill="rgba(40,50,110,0.28)"/>
<rect x="1180" y="434" width="2" height="36" fill="rgba(40,50,110,0.28)"/>
<rect x="1244" y="434" width="2" height="36" fill="rgba(40,50,110,0.28)"/>
<rect x="1310" y="434" width="2" height="36" fill="rgba(40,50,110,0.28)"/>
<rect x="1374" y="434" width="2" height="36" fill="rgba(40,50,110,0.28)"/>
<rect x="1438" y="434" width="2" height="36" fill="rgba(40,50,110,0.28)"/>
<rect x="1504" y="434" width="2" height="36" fill="rgba(40,50,110,0.28)"/>
<rect x="532" y="434" width="2" height="36" fill="rgba(20,0,30,0.45)"/>
<rect x="1568" y="434" width="814" height="36" fill="#a95f7d"/>
<rect x="1634" y="434" width="2" height="36" fill="rgba(40,50,110,0.28)"/>
<rect x="1698" y="434" width="2" height="36" fill="rgba(40,50,110,0.28)"/>
<rect x="1762" y="434" width="2" height="36" fill="rgba(40,50,110,0.28)"/>
<rect x="1828" y="434" width="2" height="36" fill="rgba(40,50,110,0.28)"/>
<rect x="1892" y="434" width="2" height="36" fill="rgba(40,50,110,0.28)"/>
<rect x="1958" y="434" width="2" height="36" fill="rgba(40,50,110,0.28)"/>
<rect x="2022" y="434" width="2" height="36" fill="rgba(40,50,110,0.28)"/>
<rect x="2086" y="434" width="2" height="36" fill="rgba(40,50,110,0.28)"/>
<rect x="2152" y="434" width="2" height="36" fill="rgba(40,50,110,0.28)"/>
<rect x="2216" y="434" width="2" height="36" fill="rgba(40,50,110,0.28)"/>
<rect x="2282" y="434" width="2" height="36" fill="rgba(40,50,110,0.28)"/>
<rect x="2346" y="434" width="2" height="36" fill="rgba(40,50,110,0.28)"/>
<rect x="1568" y="434" width="2" height="36" fill="rgba(20,0,30,0.45)"/>
<rect x="274" y="400" width="226" height="34" fill="#80261f"/>
<rect x="276" y="402" width="224" height="30" fill="#ec4a40"/>
<rect x="532" y="400" width="518" height="34" fill="#80261f"/>
<rect x="534" y="402" width="516" height="30" fill="#ec4a40"/>
<rect x="1568" y="400" width="778" height="34" fill="#80261f"/>
<rect x="1570" y="402" width="776" height="30" fill="#ec4a40"/>
<svg x="500" y="400" width="32" height="34"><rect width="32" height="34" fill="url(#hatch)"/><rect y="25" width="32" height="9" fill="rgba(20,22,28,0.22)"/></svg>
<svg x="1050" y="400" width="518" height="34"><rect width="518" height="34" fill="url(#hatch)"/><rect y="25" width="518" height="9" fill="rgba(20,22,28,0.22)"/></svg>
<svg x="2346" y="400" width="36" height="34"><rect width="36" height="34" fill="url(#hatch)"/><rect y="25" width="36" height="9" fill="rgba(20,22,28,0.22)"/></svg>
<rect x="278" y="442" width="2" height="16" fill="#1c1a1c"/>
<rect x="288" y="442" width="4" height="16" fill="#1c1a1c"/>
<rect x="294" y="442" width="2" height="16" fill="#1c1a1c"/>
<rect x="304" y="442" width="4" height="16" fill="#1c1a1c"/>
<rect x="310" y="442" width="2" height="16" fill="#1c1a1c"/>
<rect x="320" y="442" width="4" height="16" fill="#1c1a1c"/>
<rect x="326" y="442" width="2" height="16" fill="#1c1a1c"/>
<rect x="336" y="442" width="4" height="16" fill="#1c1a1c"/>
<rect x="342" y="442" width="2" height="16" fill="#1c1a1c"/>
<rect x="354" y="442" width="2" height="16" fill="#1c1a1c"/>
<rect x="358" y="442" width="2" height="16" fill="#1c1a1c"/>
<rect x="368" y="442" width="4" height="16" fill="#1c1a1c"/>
<rect x="374" y="442" width="2" height="16" fill="#1c1a1c"/>
<rect x="386" y="442" width="2" height="16" fill="#1c1a1c"/>
<rect x="390" y="442" width="2" height="16" fill="#1c1a1c"/>
<rect x="400" y="442" width="4" height="16" fill="#1c1a1c"/>
<rect x="406" y="442" width="2" height="16" fill="#1c1a1c"/>
<rect x="418" y="442" width="2" height="16" fill="#1c1a1c"/>
<rect x="422" y="442" width="2" height="16" fill="#1c1a1c"/>
<rect x="432" y="442" width="6" height="16" fill="#1c1a1c"/>
<rect x="440" y="442" width="2" height="16" fill="#1c1a1c"/>
<rect x="450" y="442" width="4" height="16" fill="#1c1a1c"/>
<rect x="456" y="442" width="2" height="16" fill="#1c1a1c"/>
<rect x="466" y="442" width="4" height="16" fill="#1c1a1c"/>
<rect x="472" y="442" width="2" height="16" fill="#1c1a1c"/>
<rect x="482" y="442" width="4" height="16" fill="#1c1a1c"/>
<rect x="488" y="442" width="2" height="16" fill="#1c1a1c"/>
<rect x="498" y="442" width="2" height="16" fill="#1c1a1c"/>
<rect x="536" y="442" width="2" height="16" fill="#1c1a1c"/>
<rect x="546" y="442" width="4" height="16" fill="#1c1a1c"/>
<rect x="552" y="442" width="2" height="16" fill="#1c1a1c"/>
<rect x="562" y="442" width="4" height="16" fill="#1c1a1c"/>
<rect x="568" y="442" width="2" height="16" fill="#1c1a1c"/>
<rect x="578" y="442" width="4" height="16" fill="#1c1a1c"/>
<rect x="584" y="442" width="2" height="16" fill="#1c1a1c"/>
<rect x="594" y="442" width="4" height="16" fill="#1c1a1c"/>
<rect x="600" y="442" width="2" height="16" fill="#1c1a1c"/>
<rect x="612" y="442" width="2" height="16" fill="#1c1a1c"/>
<rect x="616" y="442" width="2" height="16" fill="#1c1a1c"/>
<rect x="626" y="442" width="4" height="16" fill="#1c1a1c"/>
<rect x="632" y="442" width="2" height="16" fill="#1c1a1c"/>
<rect x="644" y="442" width="2" height="16" fill="#1c1a1c"/>
<rect x="648" y="442" width="2" height="16" fill="#1c1a1c"/>
<rect x="658" y="442" width="4" height="16" fill="#1c1a1c"/>
<rect x="664" y="442" width="2" height="16" fill="#1c1a1c"/>
<rect x="676" y="442" width="2" height="16" fill="#1c1a1c"/>
<rect x="680" y="442" width="2" height="16" fill="#1c1a1c"/>
<rect x="690" y="442" width="6" height="16" fill="#1c1a1c"/>
<rect x="698" y="442" width="2" height="16" fill="#1c1a1c"/>
<rect x="708" y="442" width="4" height="16" fill="#1c1a1c"/>
<rect x="714" y="442" width="2" height="16" fill="#1c1a1c"/>
<rect x="724" y="442" width="4" height="16" fill="#1c1a1c"/>
<rect x="730" y="442" width="2" height="16" fill="#1c1a1c"/>
<rect x="740" y="442" width="4" height="16" fill="#1c1a1c"/>
<rect x="746" y="442" width="2" height="16" fill="#1c1a1c"/>
<rect x="756" y="442" width="4" height="16" fill="#1c1a1c"/>
<rect x="762" y="442" width="2" height="16" fill="#1c1a1c"/>
<rect x="772" y="442" width="4" height="16" fill="#1c1a1c"/>
<rect x="778" y="442" width="2" height="16" fill="#1c1a1c"/>
<rect x="788" y="442" width="4" height="16" fill="#1c1a1c"/>
<rect x="794" y="442" width="2" height="16" fill="#1c1a1c"/>
<rect x="806" y="442" width="4" height="16" fill="#1c1a1c"/>
<rect x="812" y="442" width="2" height="16" fill="#1c1a1c"/>
<rect x="824" y="442" width="2" height="16" fill="#1c1a1c"/>
<rect x="828" y="442" width="2" height="16" fill="#1c1a1c"/>
<rect x="838" y="442" width="4" height="16" fill="#1c1a1c"/>
<rect x="844" y="442" width="2" height="16" fill="#1c1a1c"/>
<rect x="854" y="442" width="4" height="16" fill="#1c1a1c"/>
<rect x="860" y="442" width="2" height="16" fill="#1c1a1c"/>
<rect x="870" y="442" width="4" height="16" fill="#1c1a1c"/>
<rect x="876" y="442" width="2" height="16" fill="#1c1a1c"/>
<rect x="886" y="442" width="4" height="16" fill="#1c1a1c"/>
<rect x="892" y="442" width="2" height="16" fill="#1c1a1c"/>
<rect x="904" y="442" width="2" height="16" fill="#1c1a1c"/>
<rect x="908" y="442" width="2" height="16" fill="#1c1a1c"/>
<rect x="918" y="442" width="4" height="16" fill="#1c1a1c"/>
<rect x="924" y="442" width="2" height="16" fill="#1c1a1c"/>
<rect x="934" y="442" width="4" height="16" fill="#1c1a1c"/>
<rect x="940" y="442" width="2" height="16" fill="#1c1a1c"/>
<rect x="950" y="442" width="4" height="16" fill="#1c1a1c"/>
<rect x="956" y="442" width="2" height="16" fill="#1c1a1c"/>
<rect x="968" y="442" width="4" height="16" fill="#1c1a1c"/>
<rect x="974" y="442" width="2" height="16" fill="#1c1a1c"/>
<rect x="986" y="442" width="2" height="16" fill="#1c1a1c"/>
<rect x="990" y="442" width="2" height="16" fill="#1c1a1c"/>
<rect x="1000" y="442" width="4" height="16" fill="#1c1a1c"/>
<rect x="1006" y="442" width="2" height="16" fill="#1c1a1c"/>
<rect x="1016" y="442" width="4" height="16" fill="#1c1a1c"/>
<rect x="1022" y="442" width="2" height="16" fill="#1c1a1c"/>
<rect x="1032" y="442" width="4" height="16" fill="#1c1a1c"/>
<rect x="1038" y="442" width="2" height="16" fill="#1c1a1c"/>
<rect x="1048" y="442" width="2" height="16" fill="#1c1a1c"/>
<rect x="1572" y="442" width="2" height="16" fill="#1c1a1c"/>
<rect x="1582" y="442" width="4" height="16" fill="#1c1a1c"/>
<rect x="1588" y="442" width="2" height="16" fill="#1c1a1c"/>
<rect x="1598" y="442" width="4" height="16" fill="#1c1a1c"/>
<rect x="1604" y="442" width="2" height="16" fill="#1c1a1c"/>
<rect x="1614" y="442" width="4" height="16" fill="#1c1a1c"/>
<rect x="1620" y="442" width="2" height="16" fill="#1c1a1c"/>
<rect x="1630" y="442" width="4" height="16" fill="#1c1a1c"/>
<rect x="1636" y="442" width="2" height="16" fill="#1c1a1c"/>
<rect x="1648" y="442" width="2" height="16" fill="#1c1a1c"/>
<rect x="1652" y="442" width="2" height="16" fill="#1c1a1c"/>
<rect x="1662" y="442" width="4" height="16" fill="#1c1a1c"/>
<rect x="1668" y="442" width="2" height="16" fill="#1c1a1c"/>
<rect x="1680" y="442" width="2" height="16" fill="#1c1a1c"/>
<rect x="1684" y="442" width="2" height="16" fill="#1c1a1c"/>
<rect x="1694" y="442" width="4" height="16" fill="#1c1a1c"/>
<rect x="1700" y="442" width="2" height="16" fill="#1c1a1c"/>
<rect x="1712" y="442" width="2" height="16" fill="#1c1a1c"/>
<rect x="1716" y="442" width="2" height="16" fill="#1c1a1c"/>
<rect x="1726" y="442" width="6" height="16" fill="#1c1a1c"/>
<rect x="1734" y="442" width="2" height="16" fill="#1c1a1c"/>
<rect x="1744" y="442" width="4" height="16" fill="#1c1a1c"/>
<rect x="1750" y="442" width="2" height="16" fill="#1c1a1c"/>
<rect x="1760" y="442" width="4" height="16" fill="#1c1a1c"/>
<rect x="1766" y="442" width="2" height="16" fill="#1c1a1c"/>
<rect x="1776" y="442" width="4" height="16" fill="#1c1a1c"/>
<rect x="1782" y="442" width="2" height="16" fill="#1c1a1c"/>
<rect x="1792" y="442" width="4" height="16" fill="#1c1a1c"/>
<rect x="1798" y="442" width="2" height="16" fill="#1c1a1c"/>
<rect x="1808" y="442" width="4" height="16" fill="#1c1a1c"/>
<rect x="1814" y="442" width="2" height="16" fill="#1c1a1c"/>
<rect x="1824" y="442" width="4" height="16" fill="#1c1a1c"/>
<rect x="1830" y="442" width="2" height="16" fill="#1c1a1c"/>
<rect x="1842" y="442" width="4" height="16" fill="#1c1a1c"/>
<rect x="1848" y="442" width="2" height="16" fill="#1c1a1c"/>
<rect x="1860" y="442" width="2" height="16" fill="#1c1a1c"/>
<rect x="1864" y="442" width="2" height="16" fill="#1c1a1c"/>
<rect x="1874" y="442" width="4" height="16" fill="#1c1a1c"/>
<rect x="1880" y="442" width="2" height="16" fill="#1c1a1c"/>
<rect x="1890" y="442" width="4" height="16" fill="#1c1a1c"/>
<rect x="1896" y="442" width="2" height="16" fill="#1c1a1c"/>
<rect x="1906" y="442" width="4" height="16" fill="#1c1a1c"/>
<rect x="1912" y="442" width="2" height="16" fill="#1c1a1c"/>
<rect x="1922" y="442" width="4" height="16" fill="#1c1a1c"/>
<rect x="1928" y="442" width="2" height="16" fill="#1c1a1c"/>
<rect x="1940" y="442" width="2" height="16" fill="#1c1a1c"/>
<rect x="1944" y="442" width="2" height="16" fill="#1c1a1c"/>
<rect x="1954" y="442" width="4" height="16" fill="#1c1a1c"/>
<rect x="1960" y="442" width="2" height="16" fill="#1c1a1c"/>
<rect x="1970" y="442" width="4" height="16" fill="#1c1a1c"/>
<rect x="1976" y="442" width="2" height="16" fill="#1c1a1c"/>
<rect x="1986" y="442" width="4" height="16" fill="#1c1a1c"/>
<rect x="1992" y="442" width="2" height="16" fill="#1c1a1c"/>
<rect x="2004" y="442" width="4" height="16" fill="#1c1a1c"/>
<rect x="2010" y="442" width="2" height="16" fill="#1c1a1c"/>
<rect x="2022" y="442" width="2" height="16" fill="#1c1a1c"/>
<rect x="2026" y="442" width="2" height="16" fill="#1c1a1c"/>
<rect x="2036" y="442" width="4" height="16" fill="#1c1a1c"/>
<rect x="2042" y="442" width="2" height="16" fill="#1c1a1c"/>
<rect x="2052" y="442" width="4" height="16" fill="#1c1a1c"/>
<rect x="2058" y="442" width="2" height="16" fill="#1c1a1c"/>
<rect x="2068" y="442" width="4" height="16" fill="#1c1a1c"/>
<rect x="2074" y="442" width="2" height="16" fill="#1c1a1c"/>
<rect x="2084" y="442" width="4" height="16" fill="#1c1a1c"/>
<rect x="2090" y="442" width="2" height="16" fill="#1c1a1c"/>
<rect x="2102" y="442" width="2" height="16" fill="#1c1a1c"/>
<rect x="2106" y="442" width="2" height="16" fill="#1c1a1c"/>
<rect x="2116" y="442" width="4" height="16" fill="#1c1a1c"/>
<rect x="2122" y="442" width="2" height="16" fill="#1c1a1c"/>
<rect x="2132" y="442" width="4" height="16" fill="#1c1a1c"/>
<rect x="2138" y="442" width="2" height="16" fill="#1c1a1c"/>
<rect x="2148" y="442" width="4" height="16" fill="#1c1a1c"/>
<rect x="2154" y="442" width="2" height="16" fill="#1c1a1c"/>
<rect x="2164" y="442" width="4" height="16" fill="#1c1a1c"/>
<rect x="2170" y="442" width="2" height="16" fill="#1c1a1c"/>
<rect x="2184" y="442" width="2" height="16" fill="#1c1a1c"/>
<rect x="2188" y="442" width="2" height="16" fill="#1c1a1c"/>
<rect x="2198" y="442" width="4" height="16" fill="#1c1a1c"/>
<rect x="2204" y="442" width="2" height="16" fill="#1c1a1c"/>
<rect x="2214" y="442" width="4" height="16" fill="#1c1a1c"/>
<rect x="2220" y="442" width="2" height="16" fill="#1c1a1c"/>
<rect x="2230" y="442" width="4" height="16" fill="#1c1a1c"/>
<rect x="2236" y="442" width="2" height="16" fill="#1c1a1c"/>
<rect x="2246" y="442" width="4" height="16" fill="#1c1a1c"/>
<rect x="2252" y="442" width="2" height="16" fill="#1c1a1c"/>
<rect x="2264" y="442" width="2" height="16" fill="#1c1a1c"/>
<rect x="2268" y="442" width="2" height="16" fill="#1c1a1c"/>
<rect x="2278" y="442" width="4" height="16" fill="#1c1a1c"/>
<rect x="2284" y="442" width="2" height="16" fill="#1c1a1c"/>
<rect x="2294" y="442" width="4" height="16" fill="#1c1a1c"/>
<rect x="2300" y="442" width="2" height="16" fill="#1c1a1c"/>
<rect x="2310" y="442" width="4" height="16" fill="#1c1a1c"/>
<rect x="2316" y="442" width="2" height="16" fill="#1c1a1c"/>
<rect x="2326" y="442" width="4" height="16" fill="#1c1a1c"/>
<rect x="2332" y="442" width="2" height="16" fill="#1c1a1c"/>
<rect x="792" y="620" width="1366" height="36" fill="#ab64d9"/>
<rect x="856" y="620" width="2" height="36" fill="rgba(40,50,110,0.28)"/>
<rect x="920" y="620" width="2" height="36" fill="rgba(40,50,110,0.28)"/>
<rect x="986" y="620" width="2" height="36" fill="rgba(40,50,110,0.28)"/>
<rect x="1050" y="620" width="2" height="36" fill="rgba(40,50,110,0.28)"/>
<rect x="1116" y="620" width="2" height="36" fill="rgba(40,50,110,0.28)"/>
<rect x="1180" y="620" width="2" height="36" fill="rgba(40,50,110,0.28)"/>
<rect x="1244" y="620" width="2" height="36" fill="rgba(40,50,110,0.28)"/>
<rect x="1310" y="620" width="2" height="36" fill="rgba(40,50,110,0.28)"/>
<rect x="1374" y="620" width="2" height="36" fill="rgba(40,50,110,0.28)"/>
<rect x="1438" y="620" width="2" height="36" fill="rgba(40,50,110,0.28)"/>
<rect x="1504" y="620" width="2" height="36" fill="rgba(40,50,110,0.28)"/>
<rect x="1568" y="620" width="2" height="36" fill="rgba(40,50,110,0.28)"/>
<rect x="1634" y="620" width="2" height="36" fill="rgba(40,50,110,0.28)"/>
<rect x="1698" y="620" width="2" height="36" fill="rgba(40,50,110,0.28)"/>
<rect x="1762" y="620" width="2" height="36" fill="rgba(40,50,110,0.28)"/>
<rect x="1828" y="620" width="2" height="36" fill="rgba(40,50,110,0.28)"/>
<rect x="1892" y="620" width="2" height="36" fill="rgba(40,50,110,0.28)"/>
<rect x="1958" y="620" width="2" height="36" fill="rgba(40,50,110,0.28)"/>
<rect x="2022" y="620" width="2" height="36" fill="rgba(40,50,110,0.28)"/>
<rect x="2086" y="620" width="2" height="36" fill="rgba(40,50,110,0.28)"/>
<rect x="2152" y="620" width="2" height="36" fill="rgba(40,50,110,0.28)"/>
<rect x="792" y="620" width="2" height="36" fill="rgba(20,0,30,0.45)"/>
<rect x="1828" y="620" width="2" height="36" fill="rgba(20,0,30,0.45)"/>
<rect x="1050" y="620" width="2" height="36" fill="rgba(40,20,90,0.3)"/>
<rect x="2086" y="620" width="2" height="36" fill="rgba(40,20,90,0.3)"/>
<rect x="792" y="586" width="258" height="34" fill="#9a2c84"/>
<rect x="794" y="588" width="256" height="30" fill="#ec4ccf"/>
<rect x="1828" y="586" width="258" height="34" fill="#9a2c84"/>
<rect x="1830" y="588" width="256" height="30" fill="#ec4ccf"/>
<svg x="1050" y="586" width="778" height="34"><rect width="778" height="34" fill="url(#hatch)"/><rect y="25" width="778" height="9" fill="rgba(20,22,28,0.22)"/></svg>
<svg x="2086" y="586" width="72" height="34"><rect width="72" height="34" fill="url(#hatch)"/><rect y="25" width="72" height="9" fill="rgba(20,22,28,0.22)"/></svg>
<rect x="794" y="622" width="2" height="4" fill="#1c1a1c"/>
<rect x="800" y="630" width="2" height="4" fill="#1c1a1c"/>
<rect x="798" y="638" width="2" height="4" fill="#1c1a1c"/>
<rect x="806" y="638" width="2" height="4" fill="#1c1a1c"/>
<rect x="804" y="642" width="2" height="4" fill="#1c1a1c"/>
<rect x="808" y="650" width="2" height="4" fill="#1c1a1c"/>
<rect x="810" y="622" width="2" height="4" fill="#1c1a1c"/>
<rect x="816" y="630" width="2" height="4" fill="#1c1a1c"/>
<rect x="814" y="638" width="2" height="4" fill="#1c1a1c"/>
<rect x="822" y="638" width="2" height="4" fill="#1c1a1c"/>
<rect x="820" y="642" width="2" height="4" fill="#1c1a1c"/>
<rect x="824" y="650" width="2" height="4" fill="#1c1a1c"/>
<rect x="826" y="622" width="2" height="4" fill="#1c1a1c"/>
<rect x="832" y="630" width="2" height="4" fill="#1c1a1c"/>
<rect x="830" y="638" width="2" height="4" fill="#1c1a1c"/>
<rect x="838" y="638" width="2" height="4" fill="#1c1a1c"/>
<rect x="836" y="642" width="2" height="4" fill="#1c1a1c"/>
<rect x="840" y="650" width="2" height="4" fill="#1c1a1c"/>
<rect x="842" y="622" width="2" height="4" fill="#1c1a1c"/>
<rect x="848" y="630" width="2" height="4" fill="#1c1a1c"/>
<rect x="846" y="638" width="2" height="4" fill="#1c1a1c"/>
<rect x="854" y="638" width="2" height="4" fill="#1c1a1c"/>
<rect x="852" y="642" width="2" height="4" fill="#1c1a1c"/>
<rect x="856" y="650" width="2" height="4" fill="#1c1a1c"/>
<rect x="858" y="622" width="2" height="4" fill="#1c1a1c"/>
<rect x="864" y="630" width="2" height="4" fill="#1c1a1c"/>
<rect x="862" y="638" width="2" height="4" fill="#1c1a1c"/>
<rect x="870" y="638" width="2" height="4" fill="#1c1a1c"/>
<rect x="868" y="642" width="2" height="4" fill="#1c1a1c"/>
<rect x="872" y="650" width="2" height="4" fill="#1c1a1c"/>
<rect x="876" y="622" width="2" height="4" fill="#1c1a1c"/>
<rect x="882" y="630" width="2" height="4" fill="#1c1a1c"/>
<rect x="880" y="638" width="2" height="4" fill="#1c1a1c"/>
<rect x="888" y="638" width="2" height="4" fill="#1c1a1c"/>
<rect x="886" y="642" width="2" height="4" fill="#1c1a1c"/>
<rect x="890" y="650" width="2" height="4" fill="#1c1a1c"/>
<rect x="892" y="622" width="2" height="4" fill="#1c1a1c"/>
<rect x="898" y="630" width="2" height="4" fill="#1c1a1c"/>
<rect x="896" y="638" width="2" height="4" fill="#1c1a1c"/>
<rect x="904" y="638" width="2" height="4" fill="#1c1a1c"/>
<rect x="902" y="642" width="2" height="4" fill="#1c1a1c"/>
<rect x="906" y="650" width="2" height="4" fill="#1c1a1c"/>
<rect x="908" y="622" width="2" height="4" fill="#1c1a1c"/>
<rect x="914" y="630" width="2" height="4" fill="#1c1a1c"/>
<rect x="912" y="638" width="2" height="4" fill="#1c1a1c"/>
<rect x="920" y="638" width="2" height="4" fill="#1c1a1c"/>
<rect x="918" y="642" width="2" height="4" fill="#1c1a1c"/>
<rect x="922" y="650" width="2" height="4" fill="#1c1a1c"/>
<rect x="924" y="622" width="2" height="4" fill="#1c1a1c"/>
<rect x="930" y="630" width="4" height="4" fill="#1c1a1c"/>
<rect x="928" y="638" width="2" height="4" fill="#1c1a1c"/>
<rect x="936" y="638" width="4" height="4" fill="#1c1a1c"/>
<rect x="934" y="642" width="4" height="4" fill="#1c1a1c"/>
<rect x="938" y="650" width="2" height="4" fill="#1c1a1c"/>
<rect x="940" y="622" width="2" height="4" fill="#1c1a1c"/>
<rect x="946" y="630" width="4" height="4" fill="#1c1a1c"/>
<rect x="944" y="638" width="2" height="4" fill="#1c1a1c"/>
<rect x="952" y="638" width="2" height="4" fill="#1c1a1c"/>
<rect x="950" y="642" width="2" height="4" fill="#1c1a1c"/>
<rect x="954" y="650" width="2" height="4" fill="#1c1a1c"/>
<rect x="956" y="622" width="2" height="4" fill="#1c1a1c"/>
<rect x="962" y="630" width="4" height="4" fill="#1c1a1c"/>
<rect x="960" y="638" width="2" height="4" fill="#1c1a1c"/>
<rect x="968" y="638" width="2" height="4" fill="#1c1a1c"/>
<rect x="966" y="642" width="2" height="4" fill="#1c1a1c"/>
<rect x="970" y="650" width="2" height="4" fill="#1c1a1c"/>
<rect x="972" y="622" width="2" height="4" fill="#1c1a1c"/>
<rect x="978" y="630" width="6" height="4" fill="#1c1a1c"/>
<rect x="976" y="638" width="2" height="4" fill="#1c1a1c"/>
<rect x="984" y="638" width="2" height="4" fill="#1c1a1c"/>
<rect x="982" y="642" width="2" height="4" fill="#1c1a1c"/>
<rect x="986" y="650" width="4" height="4" fill="#1c1a1c"/>
<rect x="988" y="622" width="4" height="4" fill="#1c1a1c"/>
<rect x="994" y="630" width="6" height="4" fill="#1c1a1c"/>
<rect x="992" y="638" width="4" height="4" fill="#1c1a1c"/>
<rect x="1000" y="638" width="2" height="4" fill="#1c1a1c"/>
<rect x="998" y="642" width="2" height="4" fill="#1c1a1c"/>
<rect x="1002" y="650" width="4" height="4" fill="#1c1a1c"/>
<rect x="1004" y="622" width="4" height="4" fill="#1c1a1c"/>
<rect x="1010" y="630" width="6" height="4" fill="#1c1a1c"/>
<rect x="1008" y="638" width="4" height="4" fill="#1c1a1c"/>
<rect x="1016" y="638" width="4" height="4" fill="#1c1a1c"/>
<rect x="1014" y="642" width="2" height="4" fill="#1c1a1c"/>
<rect x="1018" y="650" width="2" height="4" fill="#1c1a1c"/>
<rect x="1020" y="622" width="2" height="4" fill="#1c1a1c"/>
<rect x="1026" y="630" width="4" height="4" fill="#1c1a1c"/>
<rect x="1024" y="638" width="2" height="4" fill="#1c1a1c"/>
<rect x="1032" y="638" width="4" height="4" fill="#1c1a1c"/>
<rect x="1030" y="642" width="4" height="4" fill="#1c1a1c"/>
<rect x="1034" y="650" width="2" height="4" fill="#1c1a1c"/>
<rect x="1038" y="622" width="2" height="4" fill="#1c1a1c"/>
<rect x="1044" y="630" width="4" height="4" fill="#1c1a1c"/>
<rect x="1042" y="638" width="2" height="4" fill="#1c1a1c"/>
<rect x="1048" y="642" width="2" height="4" fill="#1c1a1c"/>
<rect x="1830" y="622" width="2" height="4" fill="#1c1a1c"/>
<rect x="1836" y="630" width="2" height="4" fill="#1c1a1c"/>
<rect x="1834" y="638" width="2" height="4" fill="#1c1a1c"/>
<rect x="1842" y="638" width="2" height="4" fill="#1c1a1c"/>
<rect x="1840" y="642" width="2" height="4" fill="#1c1a1c"/>
<rect x="1844" y="650" width="2" height="4" fill="#1c1a1c"/>
<rect x="1846" y="622" width="2" height="4" fill="#1c1a1c"/>
<rect x="1852" y="630" width="2" height="4" fill="#1c1a1c"/>
<rect x="1850" y="638" width="2" height="4" fill="#1c1a1c"/>
<rect x="1858" y="638" width="2" height="4" fill="#1c1a1c"/>
<rect x="1856" y="642" width="2" height="4" fill="#1c1a1c"/>
<rect x="1860" y="650" width="2" height="4" fill="#1c1a1c"/>
<rect x="1862" y="622" width="2" height="4" fill="#1c1a1c"/>
<rect x="1868" y="630" width="2" height="4" fill="#1c1a1c"/>
<rect x="1866" y="638" width="2" height="4" fill="#1c1a1c"/>
<rect x="1874" y="638" width="2" height="4" fill="#1c1a1c"/>
<rect x="1872" y="642" width="2" height="4" fill="#1c1a1c"/>
<rect x="1876" y="650" width="2" height="4" fill="#1c1a1c"/>
<rect x="1880" y="622" width="2" height="4" fill="#1c1a1c"/>
<rect x="1886" y="630" width="2" height="4" fill="#1c1a1c"/>
<rect x="1884" y="638" width="2" height="4" fill="#1c1a1c"/>
<rect x="1892" y="638" width="2" height="4" fill="#1c1a1c"/>
<rect x="1890" y="642" width="2" height="4" fill="#1c1a1c"/>
<rect x="1894" y="650" width="2" height="4" fill="#1c1a1c"/>
<rect x="1896" y="622" width="2" height="4" fill="#1c1a1c"/>
<rect x="1902" y="630" width="2" height="4" fill="#1c1a1c"/>
<rect x="1900" y="638" width="2" height="4" fill="#1c1a1c"/>
<rect x="1908" y="638" width="2" height="4" fill="#1c1a1c"/>
<rect x="1906" y="642" width="2" height="4" fill="#1c1a1c"/>
<rect x="1910" y="650" width="2" height="4" fill="#1c1a1c"/>
<rect x="1912" y="622" width="2" height="4" fill="#1c1a1c"/>
<rect x="1918" y="630" width="2" height="4" fill="#1c1a1c"/>
<rect x="1916" y="638" width="2" height="4" fill="#1c1a1c"/>
<rect x="1924" y="638" width="2" height="4" fill="#1c1a1c"/>
<rect x="1922" y="642" width="2" height="4" fill="#1c1a1c"/>
<rect x="1926" y="650" width="2" height="4" fill="#1c1a1c"/>
<rect x="1928" y="622" width="2" height="4" fill="#1c1a1c"/>
<rect x="1934" y="630" width="2" height="4" fill="#1c1a1c"/>
<rect x="1932" y="638" width="2" height="4" fill="#1c1a1c"/>
<rect x="1940" y="638" width="2" height="4" fill="#1c1a1c"/>
<rect x="1938" y="642" width="2" height="4" fill="#1c1a1c"/>
<rect x="1942" y="650" width="2" height="4" fill="#1c1a1c"/>
<rect x="1944" y="622" width="2" height="4" fill="#1c1a1c"/>
<rect x="1950" y="630" width="2" height="4" fill="#1c1a1c"/>
<rect x="1948" y="638" width="2" height="4" fill="#1c1a1c"/>
<rect x="1956" y="638" width="2" height="4" fill="#1c1a1c"/>
<rect x="1954" y="642" width="2" height="4" fill="#1c1a1c"/>
<rect x="1958" y="650" width="2" height="4" fill="#1c1a1c"/>
<rect x="1960" y="622" width="2" height="4" fill="#1c1a1c"/>
<rect x="1966" y="630" width="4" height="4" fill="#1c1a1c"/>
<rect x="1964" y="638" width="2" height="4" fill="#1c1a1c"/>
<rect x="1972" y="638" width="4" height="4" fill="#1c1a1c"/>
<rect x="1970" y="642" width="4" height="4" fill="#1c1a1c"/>
<rect x="1974" y="650" width="2" height="4" fill="#1c1a1c"/>
<rect x="1976" y="622" width="2" height="4" fill="#1c1a1c"/>
<rect x="1982" y="630" width="4" height="4" fill="#1c1a1c"/>
<rect x="1980" y="638" width="2" height="4" fill="#1c1a1c"/>
<rect x="1988" y="638" width="2" height="4" fill="#1c1a1c"/>
<rect x="1986" y="642" width="2" height="4" fill="#1c1a1c"/>
<rect x="1990" y="650" width="2" height="4" fill="#1c1a1c"/>
<rect x="1992" y="622" width="2" height="4" fill="#1c1a1c"/>
<rect x="1998" y="630" width="4" height="4" fill="#1c1a1c"/>
<rect x="1996" y="638" width="2" height="4" fill="#1c1a1c"/>
<rect x="2004" y="638" width="2" height="4" fill="#1c1a1c"/>
<rect x="2002" y="642" width="2" height="4" fill="#1c1a1c"/>
<rect x="2006" y="650" width="2" height="4" fill="#1c1a1c"/>
<rect x="2008" y="622" width="2" height="4" fill="#1c1a1c"/>
<rect x="2014" y="630" width="6" height="4" fill="#1c1a1c"/>
<rect x="2012" y="638" width="2" height="4" fill="#1c1a1c"/>
<rect x="2020" y="638" width="2" height="4" fill="#1c1a1c"/>
<rect x="2018" y="642" width="2" height="4" fill="#1c1a1c"/>
<rect x="2022" y="650" width="4" height="4" fill="#1c1a1c"/>
<rect x="2024" y="622" width="4" height="4" fill="#1c1a1c"/>
<rect x="2030" y="630" width="6" height="4" fill="#1c1a1c"/>
<rect x="2028" y="638" width="4" height="4" fill="#1c1a1c"/>
<rect x="2036" y="638" width="2" height="4" fill="#1c1a1c"/>
<rect x="2034" y="642" width="2" height="4" fill="#1c1a1c"/>
<rect x="2038" y="650" width="4" height="4" fill="#1c1a1c"/>
<rect x="2042" y="622" width="4" height="4" fill="#1c1a1c"/>
<rect x="2048" y="630" width="6" height="4" fill="#1c1a1c"/>
<rect x="2046" y="638" width="4" height="4" fill="#1c1a1c"/>
<rect x="2054" y="638" width="4" height="4" fill="#1c1a1c"/>
<rect x="2052" y="642" width="2" height="4" fill="#1c1a1c"/>
<rect x="2056" y="650" width="2" height="4" fill="#1c1a1c"/>
<rect x="2058" y="622" width="2" height="4" fill="#1c1a1c"/>
<rect x="2064" y="630" width="4" height="4" fill="#1c1a1c"/>
<rect x="2062" y="638" width="2" height="4" fill="#1c1a1c"/>
<rect x="2070" y="638" width="4" height="4" fill="#1c1a1c"/>
<rect x="2068" y="642" width="4" height="4" fill="#1c1a1c"/>
<rect x="2072" y="650" width="2" height="4" fill="#1c1a1c"/>
<rect x="2074" y="622" width="2" height="4" fill="#1c1a1c"/>
<rect x="2080" y="630" width="4" height="4" fill="#1c1a1c"/>
<rect x="2078" y="638" width="2" height="4" fill="#1c1a1c"/>
<rect x="2084" y="642" width="2" height="4" fill="#1c1a1c"/>
<rect x="792" y="694" width="1406" height="36" fill="#ab64d9"/>
<rect x="856" y="694" width="2" height="36" fill="rgba(40,50,110,0.28)"/>
<rect x="920" y="694" width="2" height="36" fill="rgba(40,50,110,0.28)"/>
<rect x="986" y="694" width="2" height="36" fill="rgba(40,50,110,0.28)"/>
<rect x="1050" y="694" width="2" height="36" fill="rgba(40,50,110,0.28)"/>
<rect x="1116" y="694" width="2" height="36" fill="rgba(40,50,110,0.28)"/>
<rect x="1180" y="694" width="2" height="36" fill="rgba(40,50,110,0.28)"/>
<rect x="1244" y="694" width="2" height="36" fill="rgba(40,50,110,0.28)"/>
<rect x="1310" y="694" width="2" height="36" fill="rgba(40,50,110,0.28)"/>
<rect x="1374" y="694" width="2" height="36" fill="rgba(40,50,110,0.28)"/>
<rect x="1438" y="694" width="2" height="36" fill="rgba(40,50,110,0.28)"/>
<rect x="1504" y="694" width="2" height="36" fill="rgba(40,50,110,0.28)"/>
<rect x="1568" y="694" width="2" height="36" fill="rgba(40,50,110,0.28)"/>
<rect x="1634" y="694" width="2" height="36" fill="rgba(40,50,110,0.28)"/>
<rect x="1698" y="694" width="2" height="36" fill="rgba(40,50,110,0.28)"/>
<rect x="1762" y="694" width="2" height="36" fill="rgba(40,50,110,0.28)"/>
<rect x="1828" y="694" width="2" height="36" fill="rgba(40,50,110,0.28)"/>
<rect x="1892" y="694" width="2" height="36" fill="rgba(40,50,110,0.28)"/>
<rect x="1958" y="694" width="2" height="36" fill="rgba(40,50,110,0.28)"/>
<rect x="2022" y="694" width="2" height="36" fill="rgba(40,50,110,0.28)"/>
<rect x="2086" y="694" width="2" height="36" fill="rgba(40,50,110,0.28)"/>
<rect x="2152" y="694" width="2" height="36" fill="rgba(40,50,110,0.28)"/>
<rect x="792" y="694" width="2" height="36" fill="rgba(20,0,30,0.45)"/>
<rect x="1828" y="694" width="2" height="36" fill="rgba(20,0,30,0.45)"/>
<rect x="1050" y="694" width="2" height="36" fill="rgba(40,20,90,0.3)"/>
<rect x="2086" y="694" width="2" height="36" fill="rgba(40,20,90,0.3)"/>
<rect x="792" y="660" width="258" height="34" fill="#9a2c84"/>
<rect x="794" y="662" width="256" height="30" fill="#ec4ccf"/>
<rect x="1828" y="660" width="258" height="34" fill="#9a2c84"/>
<rect x="1830" y="662" width="256" height="30" fill="#ec4ccf"/>
<svg x="1050" y="660" width="778" height="34"><rect width="778" height="34" fill="url(#hatch)"/><rect y="25" width="778" height="9" fill="rgba(20,22,28,0.22)"/></svg>
<svg x="2086" y="660" width="112" height="34"><rect width="112" height="34" fill="url(#hatch)"/><rect y="25" width="112" height="9" fill="rgba(20,22,28,0.22)"/></svg>
<rect x="794" y="696" width="2" height="4" fill="#1c1a1c"/>
<rect x="800" y="704" width="2" height="4" fill="#1c1a1c"/>
<rect x="798" y="712" width="2" height="4" fill="#1c1a1c"/>
<rect x="806" y="712" width="2" height="4" fill="#1c1a1c"/>
<rect x="804" y="716" width="2" height="4" fill="#1c1a1c"/>
<rect x="808" y="724" width="2" height="4" fill="#1c1a1c"/>
<rect x="810" y="696" width="2" height="4" fill="#1c1a1c"/>
<rect x="816" y="704" width="2" height="4" fill="#1c1a1c"/>
<rect x="814" y="712" width="2" height="4" fill="#1c1a1c"/>
<rect x="822" y="712" width="2" height="4" fill="#1c1a1c"/>
<rect x="820" y="716" width="2" height="4" fill="#1c1a1c"/>
<rect x="824" y="724" width="2" height="4" fill="#1c1a1c"/>
<rect x="826" y="696" width="2" height="4" fill="#1c1a1c"/>
<rect x="832" y="704" width="2" height="4" fill="#1c1a1c"/>
<rect x="830" y="712" width="2" height="4" fill="#1c1a1c"/>
<rect x="838" y="712" width="2" height="4" fill="#1c1a1c"/>
<rect x="836" y="716" width="2" height="4" fill="#1c1a1c"/>
<rect x="840" y="724" width="2" height="4" fill="#1c1a1c"/>
<rect x="842" y="696" width="2" height="4" fill="#1c1a1c"/>
<rect x="848" y="704" width="2" height="4" fill="#1c1a1c"/>
<rect x="846" y="712" width="2" height="4" fill="#1c1a1c"/>
<rect x="854" y="712" width="2" height="4" fill="#1c1a1c"/>
<rect x="852" y="716" width="2" height="4" fill="#1c1a1c"/>
<rect x="856" y="724" width="2" height="4" fill="#1c1a1c"/>
<rect x="858" y="696" width="2" height="4" fill="#1c1a1c"/>
<rect x="864" y="704" width="2" height="4" fill="#1c1a1c"/>
<rect x="862" y="712" width="2" height="4" fill="#1c1a1c"/>
<rect x="870" y="712" width="2" height="4" fill="#1c1a1c"/>
<rect x="868" y="716" width="2" height="4" fill="#1c1a1c"/>
<rect x="872" y="724" width="2" height="4" fill="#1c1a1c"/>
<rect x="876" y="696" width="2" height="4" fill="#1c1a1c"/>
<rect x="882" y="704" width="2" height="4" fill="#1c1a1c"/>
<rect x="880" y="712" width="2" height="4" fill="#1c1a1c"/>
<rect x="888" y="712" width="2" height="4" fill="#1c1a1c"/>
<rect x="886" y="716" width="2" height="4" fill="#1c1a1c"/>
<rect x="890" y="724" width="2" height="4" fill="#1c1a1c"/>
<rect x="892" y="696" width="2" height="4" fill="#1c1a1c"/>
<rect x="898" y="704" width="2" height="4" fill="#1c1a1c"/>
<rect x="896" y="712" width="2" height="4" fill="#1c1a1c"/>
<rect x="904" y="712" width="2" height="4" fill="#1c1a1c"/>
<rect x="902" y="716" width="2" height="4" fill="#1c1a1c"/>
<rect x="906" y="724" width="2" height="4" fill="#1c1a1c"/>
<rect x="908" y="696" width="2" height="4" fill="#1c1a1c"/>
<rect x="914" y="704" width="2" height="4" fill="#1c1a1c"/>
<rect x="912" y="712" width="2" height="4" fill="#1c1a1c"/>
<rect x="920" y="712" width="2" height="4" fill="#1c1a1c"/>
<rect x="918" y="716" width="2" height="4" fill="#1c1a1c"/>
<rect x="922" y="724" width="2" height="4" fill="#1c1a1c"/>
<rect x="924" y="696" width="2" height="4" fill="#1c1a1c"/>
<rect x="930" y="704" width="4" height="4" fill="#1c1a1c"/>
<rect x="928" y="712" width="2" height="4" fill="#1c1a1c"/>
<rect x="936" y="712" width="4" height="4" fill="#1c1a1c"/>
<rect x="934" y="716" width="4" height="4" fill="#1c1a1c"/>
<rect x="938" y="724" width="2" height="4" fill="#1c1a1c"/>
<rect x="940" y="696" width="2" height="4" fill="#1c1a1c"/>
<rect x="946" y="704" width="4" height="4" fill="#1c1a1c"/>
<rect x="944" y="712" width="2" height="4" fill="#1c1a1c"/>
<rect x="952" y="712" width="2" height="4" fill="#1c1a1c"/>
<rect x="950" y="716" width="2" height="4" fill="#1c1a1c"/>
<rect x="954" y="724" width="2" height="4" fill="#1c1a1c"/>
<rect x="956" y="696" width="2" height="4" fill="#1c1a1c"/>
<rect x="962" y="704" width="4" height="4" fill="#1c1a1c"/>
<rect x="960" y="712" width="2" height="4" fill="#1c1a1c"/>
<rect x="968" y="712" width="2" height="4" fill="#1c1a1c"/>
<rect x="966" y="716" width="2" height="4" fill="#1c1a1c"/>
<rect x="970" y="724" width="2" height="4" fill="#1c1a1c"/>
<rect x="972" y="696" width="2" height="4" fill="#1c1a1c"/>
<rect x="978" y="704" width="6" height="4" fill="#1c1a1c"/>
<rect x="976" y="712" width="2" height="4" fill="#1c1a1c"/>
<rect x="984" y="712" width="2" height="4" fill="#1c1a1c"/>
<rect x="982" y="716" width="2" height="4" fill="#1c1a1c"/>
<rect x="986" y="724" width="4" height="4" fill="#1c1a1c"/>
<rect x="988" y="696" width="4" height="4" fill="#1c1a1c"/>
<rect x="994" y="704" width="6" height="4" fill="#1c1a1c"/>
<rect x="992" y="712" width="4" height="4" fill="#1c1a1c"/>
<rect x="1000" y="712" width="2" height="4" fill="#1c1a1c"/>
<rect x="998" y="716" width="2" height="4" fill="#1c1a1c"/>
<rect x="1002" y="724" width="4" height="4" fill="#1c1a1c"/>
<rect x="1004" y="696" width="4" height="4" fill="#1c1a1c"/>
<rect x="1010" y="704" width="6" height="4" fill="#1c1a1c"/>
<rect x="1008" y="712" width="4" height="4" fill="#1c1a1c"/>
<rect x="1016" y="712" width="4" height="4" fill="#1c1a1c"/>
<rect x="1014" y="716" width="2" height="4" fill="#1c1a1c"/>
<rect x="1018" y="724" width="2" height="4" fill="#1c1a1c"/>
<rect x="1020" y="696" width="2" height="4" fill="#1c1a1c"/>
<rect x="1026" y="704" width="4" height="4" fill="#1c1a1c"/>
<rect x="1024" y="712" width="2" height="4" fill="#1c1a1c"/>
<rect x="1032" y="712" width="4" height="4" fill="#1c1a1c"/>
<rect x="1030" y="716" width="4" height="4" fill="#1c1a1c"/>
<rect x="1034" y="724" width="2" height="4" fill="#1c1a1c"/>
<rect x="1038" y="696" width="2" height="4" fill="#1c1a1c"/>
<rect x="1044" y="704" width="4" height="4" fill="#1c1a1c"/>
<rect x="1042" y="712" width="2" height="4" fill="#1c1a1c"/>
<rect x="1048" y="716" width="2" height="4" fill="#1c1a1c"/>
<rect x="1830" y="696" width="2" height="4" fill="#1c1a1c"/>
<rect x="1836" y="704" width="2" height="4" fill="#1c1a1c"/>
<rect x="1834" y="712" width="2" height="4" fill="#1c1a1c"/>
<rect x="1842" y="712" width="2" height="4" fill="#1c1a1c"/>
<rect x="1840" y="716" width="2" height="4" fill="#1c1a1c"/>
<rect x="1844" y="724" width="2" height="4" fill="#1c1a1c"/>
<rect x="1846" y="696" width="2" height="4" fill="#1c1a1c"/>
<rect x="1852" y="704" width="2" height="4" fill="#1c1a1c"/>
<rect x="1850" y="712" width="2" height="4" fill="#1c1a1c"/>
<rect x="1858" y="712" width="2" height="4" fill="#1c1a1c"/>
<rect x="1856" y="716" width="2" height="4" fill="#1c1a1c"/>
<rect x="1860" y="724" width="2" height="4" fill="#1c1a1c"/>
<rect x="1862" y="696" width="2" height="4" fill="#1c1a1c"/>
<rect x="1868" y="704" width="2" height="4" fill="#1c1a1c"/>
<rect x="1866" y="712" width="2" height="4" fill="#1c1a1c"/>
<rect x="1874" y="712" width="2" height="4" fill="#1c1a1c"/>
<rect x="1872" y="716" width="2" height="4" fill="#1c1a1c"/>
<rect x="1876" y="724" width="2" height="4" fill="#1c1a1c"/>
<rect x="1880" y="696" width="2" height="4" fill="#1c1a1c"/>
<rect x="1886" y="704" width="2" height="4" fill="#1c1a1c"/>
<rect x="1884" y="712" width="2" height="4" fill="#1c1a1c"/>
<rect x="1892" y="712" width="2" height="4" fill="#1c1a1c"/>
<rect x="1890" y="716" width="2" height="4" fill="#1c1a1c"/>
<rect x="1894" y="724" width="2" height="4" fill="#1c1a1c"/>
<rect x="1896" y="696" width="2" height="4" fill="#1c1a1c"/>
<rect x="1902" y="704" width="2" height="4" fill="#1c1a1c"/>
<rect x="1900" y="712" width="2" height="4" fill="#1c1a1c"/>
<rect x="1908" y="712" width="2" height="4" fill="#1c1a1c"/>
<rect x="1906" y="716" width="2" height="4" fill="#1c1a1c"/>
<rect x="1910" y="724" width="2" height="4" fill="#1c1a1c"/>
<rect x="1912" y="696" width="2" height="4" fill="#1c1a1c"/>
<rect x="1918" y="704" width="2" height="4" fill="#1c1a1c"/>
<rect x="1916" y="712" width="2" height="4" fill="#1c1a1c"/>
<rect x="1924" y="712" width="2" height="4" fill="#1c1a1c"/>
<rect x="1922" y="716" width="2" height="4" fill="#1c1a1c"/>
<rect x="1926" y="724" width="2" height="4" fill="#1c1a1c"/>
<rect x="1928" y="696" width="2" height="4" fill="#1c1a1c"/>
<rect x="1934" y="704" width="2" height="4" fill="#1c1a1c"/>
<rect x="1932" y="712" width="2" height="4" fill="#1c1a1c"/>
<rect x="1940" y="712" width="2" height="4" fill="#1c1a1c"/>
<rect x="1938" y="716" width="2" height="4" fill="#1c1a1c"/>
<rect x="1942" y="724" width="2" height="4" fill="#1c1a1c"/>
<rect x="1944" y="696" width="2" height="4" fill="#1c1a1c"/>
<rect x="1950" y="704" width="2" height="4" fill="#1c1a1c"/>
<rect x="1948" y="712" width="2" height="4" fill="#1c1a1c"/>
<rect x="1956" y="712" width="2" height="4" fill="#1c1a1c"/>
<rect x="1954" y="716" width="2" height="4" fill="#1c1a1c"/>
<rect x="1958" y="724" width="2" height="4" fill="#1c1a1c"/>
<rect x="1960" y="696" width="2" height="4" fill="#1c1a1c"/>
<rect x="1966" y="704" width="4" height="4" fill="#1c1a1c"/>
<rect x="1964" y="712" width="2" height="4" fill="#1c1a1c"/>
<rect x="1972" y="712" width="4" height="4" fill="#1c1a1c"/>
<rect x="1970" y="716" width="4" height="4" fill="#1c1a1c"/>
<rect x="1974" y="724" width="2" height="4" fill="#1c1a1c"/>
<rect x="1976" y="696" width="2" height="4" fill="#1c1a1c"/>
<rect x="1982" y="704" width="4" height="4" fill="#1c1a1c"/>
<rect x="1980" y="712" width="2" height="4" fill="#1c1a1c"/>
<rect x="1988" y="712" width="2" height="4" fill="#1c1a1c"/>
<rect x="1986" y="716" width="2" height="4" fill="#1c1a1c"/>
<rect x="1990" y="724" width="2" height="4" fill="#1c1a1c"/>
<rect x="1992" y="696" width="2" height="4" fill="#1c1a1c"/>
<rect x="1998" y="704" width="4" height="4" fill="#1c1a1c"/>
<rect x="1996" y="712" width="2" height="4" fill="#1c1a1c"/>
<rect x="2004" y="712" width="2" height="4" fill="#1c1a1c"/>
<rect x="2002" y="716" width="2" height="4" fill="#1c1a1c"/>
<rect x="2006" y="724" width="2" height="4" fill="#1c1a1c"/>
<rect x="2008" y="696" width="2" height="4" fill="#1c1a1c"/>
<rect x="2014" y="704" width="6" height="4" fill="#1c1a1c"/>
<rect x="2012" y="712" width="2" height="4" fill="#1c1a1c"/>
<rect x="2020" y="712" width="2" height="4" fill="#1c1a1c"/>
<rect x="2018" y="716" width="2" height="4" fill="#1c1a1c"/>
<rect x="2022" y="724" width="4" height="4" fill="#1c1a1c"/>
<rect x="2024" y="696" width="4" height="4" fill="#1c1a1c"/>
<rect x="2030" y="704" width="6" height="4" fill="#1c1a1c"/>
<rect x="2028" y="712" width="4" height="4" fill="#1c1a1c"/>
<rect x="2036" y="712" width="2" height="4" fill="#1c1a1c"/>
<rect x="2034" y="716" width="2" height="4" fill="#1c1a1c"/>
<rect x="2038" y="724" width="4" height="4" fill="#1c1a1c"/>
<rect x="2042" y="696" width="4" height="4" fill="#1c1a1c"/>
<rect x="2048" y="704" width="6" height="4" fill="#1c1a1c"/>
<rect x="2046" y="712" width="4" height="4" fill="#1c1a1c"/>
<rect x="2054" y="712" width="4" height="4" fill="#1c1a1c"/>
<rect x="2052" y="716" width="2" height="4" fill="#1c1a1c"/>
<rect x="2056" y="724" width="2" height="4" fill="#1c1a1c"/>
<rect x="2058" y="696" width="2" height="4" fill="#1c1a1c"/>
<rect x="2064" y="704" width="4" height="4" fill="#1c1a1c"/>
<rect x="2062" y="712" width="2" height="4" fill="#1c1a1c"/>
<rect x="2070" y="712" width="4" height="4" fill="#1c1a1c"/>
<rect x="2068" y="716" width="4" height="4" fill="#1c1a1c"/>
<rect x="2072" y="724" width="2" height="4" fill="#1c1a1c"/>
<rect x="2074" y="696" width="2" height="4" fill="#1c1a1c"/>
<rect x="2080" y="704" width="4" height="4" fill="#1c1a1c"/>
<rect x="2078" y="712" width="2" height="4" fill="#1c1a1c"/>
<rect x="2084" y="716" width="2" height="4" fill="#1c1a1c"/>
<rect x="792" y="768" width="1374" height="36" fill="#ab64d9"/>
<rect x="856" y="768" width="2" height="36" fill="rgba(40,50,110,0.28)"/>
<rect x="920" y="768" width="2" height="36" fill="rgba(40,50,110,0.28)"/>
<rect x="986" y="768" width="2" height="36" fill="rgba(40,50,110,0.28)"/>
<rect x="1050" y="768" width="2" height="36" fill="rgba(40,50,110,0.28)"/>
<rect x="1116" y="768" width="2" height="36" fill="rgba(40,50,110,0.28)"/>
<rect x="1180" y="768" width="2" height="36" fill="rgba(40,50,110,0.28)"/>
<rect x="1244" y="768" width="2" height="36" fill="rgba(40,50,110,0.28)"/>
<rect x="1310" y="768" width="2" height="36" fill="rgba(40,50,110,0.28)"/>
<rect x="1374" y="768" width="2" height="36" fill="rgba(40,50,110,0.28)"/>
<rect x="1438" y="768" width="2" height="36" fill="rgba(40,50,110,0.28)"/>
<rect x="1504" y="768" width="2" height="36" fill="rgba(40,50,110,0.28)"/>
<rect x="1568" y="768" width="2" height="36" fill="rgba(40,50,110,0.28)"/>
<rect x="1634" y="768" width="2" height="36" fill="rgba(40,50,110,0.28)"/>
<rect x="1698" y="768" width="2" height="36" fill="rgba(40,50,110,0.28)"/>
<rect x="1762" y="768" width="2" height="36" fill="rgba(40,50,110,0.28)"/>
<rect x="1828" y="768" width="2" height="36" fill="rgba(40,50,110,0.28)"/>
<rect x="1892" y="768" width="2" height="36" fill="rgba(40,50,110,0.28)"/>
<rect x="1958" y="768" width="2" height="36" fill="rgba(40,50,110,0.28)"/>
<rect x="2022" y="768" width="2" height="36" fill="rgba(40,50,110,0.28)"/>
<rect x="2086" y="768" width="2" height="36" fill="rgba(40,50,110,0.28)"/>
<rect x="2152" y="768" width="2" height="36" fill="rgba(40,50,110,0.28)"/>
<rect x="792" y="768" width="2" height="36" fill="rgba(20,0,30,0.45)"/>
<rect x="1828" y="768" width="2" height="36" fill="rgba(20,0,30,0.45)"/>
<rect x="920" y="768" width="2" height="36" fill="rgba(20,0,30,0.45)"/>
<rect x="1958" y="768" width="2" height="36" fill="rgba(20,0,30,0.45)"/>
<rect x="1050" y="768" width="2" height="36" fill="rgba(40,20,90,0.3)"/>
<rect x="2086" y="768" width="2" height="36" fill="rgba(40,20,90,0.3)"/>
<rect x="792" y="734" width="128" height="34" fill="#9a2c84"/>
<rect x="794" y="736" width="126" height="30" fill="#ec4ccf"/>
<rect x="920" y="734" width="130" height="34" fill="#9a2c84"/>
<rect x="922" y="736" width="128" height="30" fill="#ec4ccf"/>
<rect x="1828" y="734" width="130" height="34" fill="#9a2c84"/>
<rect x="1830" y="736" width="128" height="30" fill="#ec4ccf"/>
<rect x="1958" y="734" width="128" height="34" fill="#9a2c84"/>
<rect x="1960" y="736" width="126" height="30" fill="#ec4ccf"/>
<svg x="1050" y="734" width="778" height="34"><rect width="778" height="34" fill="url(#hatch)"/><rect y="25" width="778" height="9" fill="rgba(20,22,28,0.22)"/></svg>
<svg x="2086" y="734" width="80" height="34"><rect width="80" height="34" fill="url(#hatch)"/><rect y="25" width="80" height="9" fill="rgba(20,22,28,0.22)"/></svg>
<rect x="794" y="770" width="2" height="4" fill="#1c1a1c"/>
<rect x="800" y="778" width="2" height="4" fill="#1c1a1c"/>
<rect x="798" y="786" width="2" height="4" fill="#1c1a1c"/>
<rect x="806" y="786" width="2" height="4" fill="#1c1a1c"/>
<rect x="804" y="790" width="2" height="4" fill="#1c1a1c"/>
<rect x="808" y="798" width="2" height="4" fill="#1c1a1c"/>
<rect x="810" y="770" width="2" height="4" fill="#1c1a1c"/>
<rect x="816" y="778" width="2" height="4" fill="#1c1a1c"/>
<rect x="814" y="786" width="2" height="4" fill="#1c1a1c"/>
<rect x="822" y="786" width="2" height="4" fill="#1c1a1c"/>
<rect x="820" y="790" width="2" height="4" fill="#1c1a1c"/>
<rect x="824" y="798" width="2" height="4" fill="#1c1a1c"/>
<rect x="826" y="770" width="2" height="4" fill="#1c1a1c"/>
<rect x="832" y="778" width="2" height="4" fill="#1c1a1c"/>
<rect x="830" y="786" width="2" height="4" fill="#1c1a1c"/>
<rect x="838" y="786" width="2" height="4" fill="#1c1a1c"/>
<rect x="836" y="790" width="2" height="4" fill="#1c1a1c"/>
<rect x="840" y="798" width="2" height="4" fill="#1c1a1c"/>
<rect x="842" y="770" width="2" height="4" fill="#1c1a1c"/>
<rect x="848" y="778" width="2" height="4" fill="#1c1a1c"/>
<rect x="846" y="786" width="2" height="4" fill="#1c1a1c"/>
<rect x="854" y="786" width="2" height="4" fill="#1c1a1c"/>
<rect x="852" y="790" width="2" height="4" fill="#1c1a1c"/>
<rect x="856" y="798" width="2" height="4" fill="#1c1a1c"/>
<rect x="858" y="770" width="2" height="4" fill="#1c1a1c"/>
<rect x="864" y="778" width="2" height="4" fill="#1c1a1c"/>
<rect x="862" y="786" width="2" height="4" fill="#1c1a1c"/>
<rect x="870" y="786" width="2" height="4" fill="#1c1a1c"/>
<rect x="868" y="790" width="2" height="4" fill="#1c1a1c"/>
<rect x="872" y="798" width="2" height="4" fill="#1c1a1c"/>
<rect x="876" y="770" width="2" height="4" fill="#1c1a1c"/>
<rect x="882" y="778" width="2" height="4" fill="#1c1a1c"/>
<rect x="880" y="786" width="2" height="4" fill="#1c1a1c"/>
<rect x="888" y="786" width="2" height="4" fill="#1c1a1c"/>
<rect x="886" y="790" width="2" height="4" fill="#1c1a1c"/>
<rect x="890" y="798" width="2" height="4" fill="#1c1a1c"/>
<rect x="892" y="770" width="2" height="4" fill="#1c1a1c"/>
<rect x="898" y="778" width="2" height="4" fill="#1c1a1c"/>
<rect x="896" y="786" width="2" height="4" fill="#1c1a1c"/>
<rect x="904" y="786" width="2" height="4" fill="#1c1a1c"/>
<rect x="902" y="790" width="2" height="4" fill="#1c1a1c"/>
<rect x="906" y="798" width="2" height="4" fill="#1c1a1c"/>
<rect x="908" y="770" width="2" height="4" fill="#1c1a1c"/>
<rect x="914" y="778" width="2" height="4" fill="#1c1a1c"/>
<rect x="912" y="786" width="2" height="4" fill="#1c1a1c"/>
<rect x="920" y="786" width="2" height="4" fill="#1c1a1c"/>
<rect x="918" y="790" width="2" height="4" fill="#1c1a1c"/>
<rect x="922" y="798" width="2" height="4" fill="#1c1a1c"/>
<rect x="924" y="770" width="2" height="4" fill="#1c1a1c"/>
<rect x="930" y="778" width="2" height="4" fill="#1c1a1c"/>
<rect x="928" y="786" width="2" height="4" fill="#1c1a1c"/>
<rect x="936" y="786" width="2" height="4" fill="#1c1a1c"/>
<rect x="934" y="790" width="2" height="4" fill="#1c1a1c"/>
<rect x="938" y="798" width="2" height="4" fill="#1c1a1c"/>
<rect x="940" y="770" width="2" height="4" fill="#1c1a1c"/>
<rect x="946" y="778" width="2" height="4" fill="#1c1a1c"/>
<rect x="944" y="786" width="2" height="4" fill="#1c1a1c"/>
<rect x="952" y="786" width="2" height="4" fill="#1c1a1c"/>
<rect x="950" y="790" width="2" height="4" fill="#1c1a1c"/>
<rect x="954" y="798" width="2" height="4" fill="#1c1a1c"/>
<rect x="956" y="770" width="2" height="4" fill="#1c1a1c"/>
<rect x="962" y="778" width="2" height="4" fill="#1c1a1c"/>
<rect x="960" y="786" width="2" height="4" fill="#1c1a1c"/>
<rect x="968" y="786" width="2" height="4" fill="#1c1a1c"/>
<rect x="966" y="790" width="2" height="4" fill="#1c1a1c"/>
<rect x="970" y="798" width="2" height="4" fill="#1c1a1c"/>
<rect x="972" y="770" width="2" height="4" fill="#1c1a1c"/>
<rect x="978" y="778" width="2" height="4" fill="#1c1a1c"/>
<rect x="976" y="786" width="2" height="4" fill="#1c1a1c"/>
<rect x="984" y="786" width="2" height="4" fill="#1c1a1c"/>
<rect x="982" y="790" width="2" height="4" fill="#1c1a1c"/>
<rect x="986" y="798" width="2" height="4" fill="#1c1a1c"/>
<rect x="988" y="770" width="2" height="4" fill="#1c1a1c"/>
<rect x="994" y="778" width="2" height="4" fill="#1c1a1c"/>
<rect x="992" y="786" width="2" height="4" fill="#1c1a1c"/>
<rect x="1000" y="786" width="2" height="4" fill="#1c1a1c"/>
<rect x="998" y="790" width="2" height="4" fill="#1c1a1c"/>
<rect x="1002" y="798" width="2" height="4" fill="#1c1a1c"/>
<rect x="1004" y="770" width="2" height="4" fill="#1c1a1c"/>
<rect x="1010" y="778" width="2" height="4" fill="#1c1a1c"/>
<rect x="1008" y="786" width="2" height="4" fill="#1c1a1c"/>
<rect x="1016" y="786" width="2" height="4" fill="#1c1a1c"/>
<rect x="1014" y="790" width="2" height="4" fill="#1c1a1c"/>
<rect x="1018" y="798" width="2" height="4" fill="#1c1a1c"/>
<rect x="1020" y="770" width="2" height="4" fill="#1c1a1c"/>
<rect x="1026" y="778" width="2" height="4" fill="#1c1a1c"/>
<rect x="1024" y="786" width="2" height="4" fill="#1c1a1c"/>
<rect x="1032" y="786" width="2" height="4" fill="#1c1a1c"/>
<rect x="1030" y="790" width="2" height="4" fill="#1c1a1c"/>
<rect x="1034" y="798" width="2" height="4" fill="#1c1a1c"/>
<rect x="1038" y="770" width="2" height="4" fill="#1c1a1c"/>
<rect x="1044" y="778" width="2" height="4" fill="#1c1a1c"/>
<rect x="1042" y="786" width="2" height="4" fill="#1c1a1c"/>
<rect x="1048" y="790" width="2" height="4" fill="#1c1a1c"/>
<rect x="1830" y="770" width="2" height="4" fill="#1c1a1c"/>
<rect x="1836" y="778" width="2" height="4" fill="#1c1a1c"/>
<rect x="1834" y="786" width="2" height="4" fill="#1c1a1c"/>
<rect x="1842" y="786" width="2" height="4" fill="#1c1a1c"/>
<rect x="1840" y="790" width="2" height="4" fill="#1c1a1c"/>
<rect x="1844" y="798" width="2" height="4" fill="#1c1a1c"/>
<rect x="1846" y="770" width="2" height="4" fill="#1c1a1c"/>
<rect x="1852" y="778" width="2" height="4" fill="#1c1a1c"/>
<rect x="1850" y="786" width="2" height="4" fill="#1c1a1c"/>
<rect x="1858" y="786" width="2" height="4" fill="#1c1a1c"/>
<rect x="1856" y="790" width="2" height="4" fill="#1c1a1c"/>
<rect x="1860" y="798" width="2" height="4" fill="#1c1a1c"/>
<rect x="1862" y="770" width="2" height="4" fill="#1c1a1c"/>
<rect x="1868" y="778" width="2" height="4" fill="#1c1a1c"/>
<rect x="1866" y="786" width="2" height="4" fill="#1c1a1c"/>
<rect x="1874" y="786" width="2" height="4" fill="#1c1a1c"/>
<rect x="1872" y="790" width="2" height="4" fill="#1c1a1c"/>
<rect x="1876" y="798" width="2" height="4" fill="#1c1a1c"/>
<rect x="1880" y="770" width="2" height="4" fill="#1c1a1c"/>
<rect x="1886" y="778" width="2" height="4" fill="#1c1a1c"/>
<rect x="1884" y="786" width="2" height="4" fill="#1c1a1c"/>
<rect x="1892" y="786" width="2" height="4" fill="#1c1a1c"/>
<rect x="1890" y="790" width="2" height="4" fill="#1c1a1c"/>
<rect x="1894" y="798" width="2" height="4" fill="#1c1a1c"/>
<rect x="1896" y="770" width="2" height="4" fill="#1c1a1c"/>
<rect x="1902" y="778" width="2" height="4" fill="#1c1a1c"/>
<rect x="1900" y="786" width="2" height="4" fill="#1c1a1c"/>
<rect x="1908" y="786" width="2" height="4" fill="#1c1a1c"/>
<rect x="1906" y="790" width="2" height="4" fill="#1c1a1c"/>
<rect x="1910" y="798" width="2" height="4" fill="#1c1a1c"/>
<rect x="1912" y="770" width="2" height="4" fill="#1c1a1c"/>
<rect x="1918" y="778" width="2" height="4" fill="#1c1a1c"/>
<rect x="1916" y="786" width="2" height="4" fill="#1c1a1c"/>
<rect x="1924" y="786" width="2" height="4" fill="#1c1a1c"/>
<rect x="1922" y="790" width="2" height="4" fill="#1c1a1c"/>
<rect x="1926" y="798" width="2" height="4" fill="#1c1a1c"/>
<rect x="1928" y="770" width="2" height="4" fill="#1c1a1c"/>
<rect x="1934" y="778" width="2" height="4" fill="#1c1a1c"/>
<rect x="1932" y="786" width="2" height="4" fill="#1c1a1c"/>
<rect x="1940" y="786" width="2" height="4" fill="#1c1a1c"/>
<rect x="1938" y="790" width="2" height="4" fill="#1c1a1c"/>
<rect x="1942" y="798" width="2" height="4" fill="#1c1a1c"/>
<rect x="1944" y="770" width="2" height="4" fill="#1c1a1c"/>
<rect x="1950" y="778" width="2" height="4" fill="#1c1a1c"/>
<rect x="1948" y="786" width="2" height="4" fill="#1c1a1c"/>
<rect x="1956" y="786" width="2" height="4" fill="#1c1a1c"/>
<rect x="1954" y="790" width="2" height="4" fill="#1c1a1c"/>
<rect x="1958" y="798" width="2" height="4" fill="#1c1a1c"/>
<rect x="1960" y="770" width="2" height="4" fill="#1c1a1c"/>
<rect x="1966" y="778" width="2" height="4" fill="#1c1a1c"/>
<rect x="1964" y="786" width="2" height="4" fill="#1c1a1c"/>
<rect x="1972" y="786" width="2" height="4" fill="#1c1a1c"/>
<rect x="1970" y="790" width="2" height="4" fill="#1c1a1c"/>
<rect x="1974" y="798" width="2" height="4" fill="#1c1a1c"/>
<rect x="1976" y="770" width="2" height="4" fill="#1c1a1c"/>
<rect x="1982" y="778" width="2" height="4" fill="#1c1a1c"/>
<rect x="1980" y="786" width="2" height="4" fill="#1c1a1c"/>
<rect x="1988" y="786" width="2" height="4" fill="#1c1a1c"/>
<rect x="1986" y="790" width="2" height="4" fill="#1c1a1c"/>
<rect x="1990" y="798" width="2" height="4" fill="#1c1a1c"/>
<rect x="1992" y="770" width="2" height="4" fill="#1c1a1c"/>
<rect x="1998" y="778" width="2" height="4" fill="#1c1a1c"/>
<rect x="1996" y="786" width="2" height="4" fill="#1c1a1c"/>
<rect x="2004" y="786" width="2" height="4" fill="#1c1a1c"/>
<rect x="2002" y="790" width="2" height="4" fill="#1c1a1c"/>
<rect x="2006" y="798" width="2" height="4" fill="#1c1a1c"/>
<rect x="2008" y="770" width="2" height="4" fill="#1c1a1c"/>
<rect x="2014" y="778" width="2" height="4" fill="#1c1a1c"/>
<rect x="2012" y="786" width="2" height="4" fill="#1c1a1c"/>
<rect x="2020" y="786" width="2" height="4" fill="#1c1a1c"/>
<rect x="2018" y="790" width="2" height="4" fill="#1c1a1c"/>
<rect x="2022" y="798" width="2" height="4" fill="#1c1a1c"/>
<rect x="2024" y="770" width="2" height="4" fill="#1c1a1c"/>
<rect x="2030" y="778" width="2" height="4" fill="#1c1a1c"/>
<rect x="2028" y="786" width="2" height="4" fill="#1c1a1c"/>
<rect x="2036" y="786" width="2" height="4" fill="#1c1a1c"/>
<rect x="2034" y="790" width="2" height="4" fill="#1c1a1c"/>
<rect x="2038" y="798" width="2" height="4" fill="#1c1a1c"/>
<rect x="2042" y="770" width="2" height="4" fill="#1c1a1c"/>
<rect x="2048" y="778" width="2" height="4" fill="#1c1a1c"/>
<rect x="2046" y="786" width="2" height="4" fill="#1c1a1c"/>
<rect x="2054" y="786" width="2" height="4" fill="#1c1a1c"/>
<rect x="2052" y="790" width="2" height="4" fill="#1c1a1c"/>
<rect x="2056" y="798" width="2" height="4" fill="#1c1a1c"/>
<rect x="2058" y="770" width="2" height="4" fill="#1c1a1c"/>
<rect x="2064" y="778" width="2" height="4" fill="#1c1a1c"/>
<rect x="2062" y="786" width="2" height="4" fill="#1c1a1c"/>
<rect x="2070" y="786" width="2" height="4" fill="#1c1a1c"/>
<rect x="2068" y="790" width="2" height="4" fill="#1c1a1c"/>
<rect x="2072" y="798" width="2" height="4" fill="#1c1a1c"/>
<rect x="2074" y="770" width="2" height="4" fill="#1c1a1c"/>
<rect x="2080" y="778" width="2" height="4" fill="#1c1a1c"/>
<rect x="2078" y="786" width="2" height="4" fill="#1c1a1c"/>
<rect x="2084" y="790" width="2" height="4" fill="#1c1a1c"/>
<rect x="144" y="842" width="356" height="36" fill="#aa8064"/>
<rect x="208" y="842" width="2" height="36" fill="rgba(40,50,110,0.28)"/>
<rect x="274" y="842" width="2" height="36" fill="rgba(40,50,110,0.28)"/>
<rect x="338" y="842" width="2" height="36" fill="rgba(40,50,110,0.28)"/>
<rect x="402" y="842" width="2" height="36" fill="rgba(40,50,110,0.28)"/>
<rect x="468" y="842" width="2" height="36" fill="rgba(40,50,110,0.28)"/>
<rect x="144" y="842" width="2" height="36" fill="rgba(20,0,30,0.45)"/>
<rect x="532" y="842" width="260" height="36" fill="#aa8064"/>
<rect x="596" y="842" width="2" height="36" fill="rgba(40,50,110,0.28)"/>
<rect x="662" y="842" width="2" height="36" fill="rgba(40,50,110,0.28)"/>
<rect x="726" y="842" width="2" height="36" fill="rgba(40,50,110,0.28)"/>
<rect x="532" y="842" width="2" height="36" fill="rgba(20,0,30,0.45)"/>
<rect x="1568" y="842" width="524" height="36" fill="#aa8064"/>
<rect x="1634" y="842" width="2" height="36" fill="rgba(40,50,110,0.28)"/>
<rect x="1698" y="842" width="2" height="36" fill="rgba(40,50,110,0.28)"/>
<rect x="1762" y="842" width="2" height="36" fill="rgba(40,50,110,0.28)"/>
<rect x="1828" y="842" width="2" height="36" fill="rgba(40,50,110,0.28)"/>
<rect x="1892" y="842" width="2" height="36" fill="rgba(40,50,110,0.28)"/>
<rect x="1958" y="842" width="2" height="36" fill="rgba(40,50,110,0.28)"/>
<rect x="2022" y="842" width="2" height="36" fill="rgba(40,50,110,0.28)"/>
<rect x="2086" y="842" width="2" height="36" fill="rgba(40,50,110,0.28)"/>
<rect x="1568" y="842" width="2" height="36" fill="rgba(20,0,30,0.45)"/>
<rect x="144" y="808" width="356" height="34" fill="#8a4212"/>
<rect x="146" y="810" width="354" height="30" fill="#e6762e"/>
<rect x="500" y="808" width="2" height="8" fill="#141414"/>
<rect x="500" y="820" width="2" height="8" fill="#141414"/>
<rect x="500" y="832" width="2" height="8" fill="#141414"/>
<rect x="532" y="808" width="260" height="34" fill="#8a4212"/>
<rect x="534" y="810" width="258" height="30" fill="#e6762e"/>
<rect x="792" y="808" width="2" height="8" fill="#141414"/>
<rect x="792" y="820" width="2" height="8" fill="#141414"/>
<rect x="792" y="832" width="2" height="8" fill="#141414"/>
<rect x="1568" y="808" width="518" height="34" fill="#8a4212"/>
<rect x="1570" y="810" width="516" height="30" fill="#e6762e"/>
<svg x="2086" y="808" width="6" height="34"><rect width="6" height="34" fill="url(#hatch)"/><rect y="25" width="6" height="9" fill="rgba(20,22,28,0.22)"/></svg>
<rect x="170" y="846" width="2" height="2" fill="#1c1a1c"/>
<rect x="300" y="846" width="2" height="2" fill="#1c1a1c"/>
<rect x="430" y="846" width="2" height="2" fill="#1c1a1c"/>
<rect x="636" y="846" width="2" height="2" fill="#1c1a1c"/>
<rect x="570" y="846" width="4" height="2" fill="#1c1a1c"/>
<rect x="570" y="870" width="2" height="2" fill="#1c1a1c"/>
<rect x="700" y="846" width="4" height="2" fill="#1c1a1c"/>
<rect x="700" y="870" width="2" height="2" fill="#1c1a1c"/>
<rect x="757" y="846" width="4" height="2" fill="#1c1a1c"/>
<rect x="757" y="870" width="2" height="2" fill="#1c1a1c"/>
<rect x="1612" y="846" width="2" height="2" fill="#1c1a1c"/>
<rect x="1612" y="870" width="2" height="2" fill="#1c1a1c"/>
<rect x="1676" y="846" width="2" height="2" fill="#1c1a1c"/>
<rect x="1676" y="870" width="2" height="2" fill="#1c1a1c"/>
<rect x="1804" y="846" width="2" height="2" fill="#1c1a1c"/>
<rect x="1804" y="870" width="2" height="2" fill="#1c1a1c"/>
<rect x="1932" y="846" width="2" height="2" fill="#1c1a1c"/>
<rect x="1932" y="870" width="2" height="2" fill="#1c1a1c"/>
<rect x="2060" y="846" width="2" height="2" fill="#1c1a1c"/>
<rect x="2060" y="870" width="2" height="2" fill="#1c1a1c"/>
<rect x="1666" y="846" width="2" height="2" fill="#1c1a1c"/>
<rect x="1666" y="870" width="2" height="2" fill="#1c1a1c"/>
<rect x="1738" y="846" width="2" height="2" fill="#1c1a1c"/>
<rect x="1738" y="870" width="2" height="2" fill="#1c1a1c"/>
<rect x="1868" y="846" width="2" height="2" fill="#1c1a1c"/>
<rect x="1868" y="870" width="2" height="2" fill="#1c1a1c"/>
<rect x="1996" y="846" width="2" height="2" fill="#1c1a1c"/>
<rect x="1996" y="870" width="2" height="2" fill="#1c1a1c"/>
<rect x="1570" y="990" width="208" height="36" fill="#8e5a9c"/>
<rect x="1634" y="990" width="2" height="36" fill="rgba(40,50,110,0.28)"/>
<rect x="1698" y="990" width="2" height="36" fill="rgba(40,50,110,0.28)"/>
<rect x="1762" y="990" width="2" height="36" fill="rgba(40,50,110,0.28)"/>
<rect x="1698" y="990" width="2" height="36" fill="rgba(20,0,30,0.45)"/>
<rect x="1570" y="956" width="30" height="34" fill="#6e1e3c"/>
<rect x="1572" y="958" width="28" height="30" fill="#c03c6e"/>
<rect x="1698" y="956" width="32" height="34" fill="#6e1e3c"/>
<rect x="1700" y="958" width="30" height="30" fill="#c03c6e"/>
<svg x="1600" y="956" width="98" height="34"><rect width="98" height="34" fill="url(#hatch)"/><rect y="25" width="98" height="9" fill="rgba(20,22,28,0.22)"/></svg>
<svg x="1730" y="956" width="48" height="34"><rect width="48" height="34" fill="url(#hatch)"/><rect y="25" width="48" height="9" fill="rgba(20,22,28,0.22)"/></svg>
<rect x="1570" y="998" width="30" height="16" fill="#1c1a1c"/>
<rect x="1700" y="998" width="30" height="16" fill="#1c1a1c"/>
<rect x="1634" y="1064" width="234" height="36" fill="#8e5a9c"/>
<rect x="1698" y="1064" width="2" height="36" fill="rgba(40,50,110,0.28)"/>
<rect x="1762" y="1064" width="2" height="36" fill="rgba(40,50,110,0.28)"/>
<rect x="1828" y="1064" width="2" height="36" fill="rgba(40,50,110,0.28)"/>
<rect x="1634" y="1064" width="2" height="36" fill="rgba(20,0,30,0.45)"/>
<rect x="1730" y="1064" width="2" height="36" fill="rgba(20,0,30,0.45)"/>
<rect x="1634" y="1030" width="64" height="34" fill="#6e1e3c"/>
<rect x="1636" y="1032" width="62" height="30" fill="#c03c6e"/>
<rect x="1730" y="1030" width="98" height="34" fill="#6e1e3c"/>
<rect x="1732" y="1032" width="96" height="30" fill="#c03c6e"/>
<svg x="1698" y="1030" width="32" height="34"><rect width="32" height="34" fill="url(#hatch)"/><rect y="25" width="32" height="9" fill="rgba(20,22,28,0.22)"/></svg>
<svg x="1828" y="1030" width="40" height="34"><rect width="40" height="34" fill="url(#hatch)"/><rect y="25" width="40" height="9" fill="rgba(20,22,28,0.22)"/></svg>
<rect x="1666" y="1096" width="4" height="4" fill="#1c1a1c"/>
<rect x="1682" y="1088" width="4" height="4" fill="#1c1a1c"/>
<rect x="1746" y="1088" width="4" height="4" fill="#1c1a1c"/>
<rect x="1762" y="1084" width="6" height="4" fill="#1c1a1c"/>
<rect x="1780" y="1076" width="4" height="4" fill="#1c1a1c"/>
<rect x="1796" y="1068" width="8" height="4" fill="#1c1a1c"/>
<rect x="1812" y="1064" width="16" height="4" fill="#1c1a1c"/>
<rect x="1050" y="1212" width="532" height="36" fill="#4a5e80"/>
<rect x="1116" y="1212" width="2" height="36" fill="rgba(40,50,110,0.28)"/>
<rect x="1180" y="1212" width="2" height="36" fill="rgba(40,50,110,0.28)"/>
<rect x="1244" y="1212" width="2" height="36" fill="rgba(40,50,110,0.28)"/>
<rect x="1310" y="1212" width="2" height="36" fill="rgba(40,50,110,0.28)"/>
<rect x="1374" y="1212" width="2" height="36" fill="rgba(40,50,110,0.28)"/>
<rect x="1438" y="1212" width="2" height="36" fill="rgba(40,50,110,0.28)"/>
<rect x="1504" y="1212" width="2" height="36" fill="rgba(40,50,110,0.28)"/>
<rect x="1568" y="1212" width="2" height="36" fill="rgba(40,50,110,0.28)"/>
<rect x="1050" y="1178" width="514" height="34" fill="#1a1a1a"/>
<rect x="1052" y="1180" width="511" height="30" fill="#3c3c3c"/>
<svg x="1564" y="1178" width="18" height="34"><rect width="18" height="34" fill="url(#hatch)"/><rect y="25" width="18" height="9" fill="rgba(20,22,28,0.22)"/></svg>
<rect x="1050" y="1228" width="15" height="2" fill="#1c1a1c"/>
<rect x="1068" y="1224" width="14" height="2" fill="#1c1a1c"/>
<rect x="1084" y="1238" width="30" height="2" fill="#1c1a1c"/>
<rect x="1116" y="1222" width="14" height="2" fill="#1c1a1c"/>
<rect x="1133" y="1218" width="14" height="2" fill="#1c1a1c"/>
<rect x="1150" y="1228" width="29" height="2" fill="#1c1a1c"/>
<rect x="1180" y="1228" width="15" height="2" fill="#1c1a1c"/>
<rect x="1198" y="1224" width="14" height="2" fill="#1c1a1c"/>
<rect x="1214" y="1238" width="30" height="2" fill="#1c1a1c"/>
<rect x="1246" y="1222" width="14" height="2" fill="#1c1a1c"/>
<rect x="1263" y="1218" width="14" height="2" fill="#1c1a1c"/>
<rect x="1280" y="1228" width="29" height="2" fill="#1c1a1c"/>
<rect x="1310" y="1228" width="15" height="2" fill="#1c1a1c"/>
<rect x="1328" y="1224" width="14" height="2" fill="#1c1a1c"/>
<rect x="1344" y="1238" width="30" height="2" fill="#1c1a1c"/>
<rect x="1376" y="1222" width="14" height="2" fill="#1c1a1c"/>
<rect x="1393" y="1218" width="14" height="2" fill="#1c1a1c"/>
<rect x="1410" y="1228" width="29" height="2" fill="#1c1a1c"/>
<rect x="1440" y="1228" width="15" height="2" fill="#1c1a1c"/>
<rect x="1458" y="1224" width="14" height="2" fill="#1c1a1c"/>
<rect x="1474" y="1238" width="30" height="2" fill="#1c1a1c"/>
<rect x="1506" y="1222" width="14" height="2" fill="#1c1a1c"/>
<rect x="1523" y="1218" width="14" height="2" fill="#1c1a1c"/>
<rect x="1540" y="1228" width="26" height="2" fill="#1c1a1c"/>
<rect x="1310" y="1178" width="2" height="34" fill="#1a1a1a"/>
<rect x="1310" y="1212" width="2" height="36" fill="#1e2a3e"/>
<rect x="1438" y="1178" width="2" height="34" fill="#1a1a1a"/>
<rect x="1438" y="1212" width="2" height="36" fill="#1e2a3e"/>
<rect x="1180" y="1180" width="2" height="6" fill="#140c10"/>
<rect x="1180" y="1242" width="2" height="6" fill="#140c10"/>
<rect x="1440" y="1180" width="2" height="6" fill="#140c10"/>
<rect x="1440" y="1242" width="2" height="6" fill="#140c10"/>
<rect x="1050" y="1286" width="518" height="36" fill="#4a5e80"/>
<rect x="1116" y="1286" width="2" height="36" fill="rgba(40,50,110,0.28)"/>
<rect x="1180" y="1286" width="2" height="36" fill="rgba(40,50,110,0.28)"/>
<rect x="1244" y="1286" width="2" height="36" fill="rgba(40,50,110,0.28)"/>
<rect x="1310" y="1286" width="2" height="36" fill="rgba(40,50,110,0.28)"/>
<rect x="1374" y="1286" width="2" height="36" fill="rgba(40,50,110,0.28)"/>
<rect x="1438" y="1286" width="2" height="36" fill="rgba(40,50,110,0.28)"/>
<rect x="1504" y="1286" width="2" height="36" fill="rgba(40,50,110,0.28)"/>
<rect x="1050" y="1286" width="130" height="36" fill="#445a7b"/>
<rect x="1116" y="1286" width="2" height="36" fill="#3a4e70"/>
<rect x="1050" y="1252" width="130" height="34" fill="#686a6e"/>
<rect x="1180" y="1252" width="384" height="34" fill="#1a1a1a"/>
<rect x="1182" y="1254" width="381" height="30" fill="#3c3c3c"/>
<svg x="1564" y="1252" width="4" height="34"><rect width="4" height="34" fill="url(#hatch)"/><rect y="25" width="4" height="9" fill="rgba(20,22,28,0.22)"/></svg>
<rect x="1050" y="1302" width="15" height="2" fill="#8a8a8a"/>
<rect x="1068" y="1298" width="14" height="2" fill="#8a8a8a"/>
<rect x="1084" y="1312" width="30" height="2" fill="#8a8a8a"/>
<rect x="1116" y="1296" width="14" height="2" fill="#8a8a8a"/>
<rect x="1133" y="1292" width="14" height="2" fill="#8a8a8a"/>
<rect x="1150" y="1302" width="29" height="2" fill="#8a8a8a"/>
<rect x="1180" y="1302" width="15" height="2" fill="#1c1a1c"/>
<rect x="1198" y="1298" width="14" height="2" fill="#1c1a1c"/>
<rect x="1214" y="1312" width="30" height="2" fill="#1c1a1c"/>
<rect x="1246" y="1296" width="14" height="2" fill="#1c1a1c"/>
<rect x="1263" y="1292" width="14" height="2" fill="#1c1a1c"/>
<rect x="1280" y="1302" width="29" height="2" fill="#1c1a1c"/>
<rect x="1310" y="1302" width="15" height="2" fill="#1c1a1c"/>
<rect x="1328" y="1298" width="14" height="2" fill="#1c1a1c"/>
<rect x="1344" y="1312" width="30" height="2" fill="#1c1a1c"/>
<rect x="1376" y="1296" width="14" height="2" fill="#1c1a1c"/>
<rect x="1393" y="1292" width="14" height="2" fill="#1c1a1c"/>
<rect x="1410" y="1302" width="29" height="2" fill="#1c1a1c"/>
<rect x="1440" y="1302" width="15" height="2" fill="#1c1a1c"/>
<rect x="1458" y="1298" width="14" height="2" fill="#1c1a1c"/>
<rect x="1474" y="1312" width="30" height="2" fill="#1c1a1c"/>
<rect x="1506" y="1296" width="14" height="2" fill="#1c1a1c"/>
<rect x="1523" y="1292" width="14" height="2" fill="#1c1a1c"/>
<rect x="1540" y="1302" width="26" height="2" fill="#1c1a1c"/>
<rect x="1180" y="1252" width="2" height="34" fill="#1a1a1a"/>
<rect x="1180" y="1286" width="2" height="36" fill="#1e2a3e"/>
<rect x="1310" y="1252" width="2" height="34" fill="#1a1a1a"/>
<rect x="1310" y="1286" width="2" height="36" fill="#1e2a3e"/>
<rect x="1438" y="1252" width="2" height="34" fill="#1a1a1a"/>
<rect x="1438" y="1286" width="2" height="36" fill="#1e2a3e"/>
<rect x="1440" y="1254" width="2" height="6" fill="#140c10"/>
<rect x="1440" y="1316" width="2" height="6" fill="#140c10"/>
<rect x="1568" y="76" width="2" height="1356" fill="#9c9c9c"/>
<rect x="2378" y="76" width="2" height="1356" fill="#8e8e8e"/>
<rect x="14" y="42" width="2" height="1390" fill="#868686"/>
<rect x="14" y="42" width="2" height="12" fill="#8c8c8c"/>
<rect x="14" y="42" width="4" height="2" fill="#8c8c8c"/>
<text x="24" y="50.3" font-size="20.5" fill="#9a9a9a" stroke="#9a9a9a" stroke-width="0.35" letter-spacing="0.6">1</text>
<rect x="144" y="42" width="2" height="12" fill="#8c8c8c"/>
<rect x="144" y="42" width="4" height="2" fill="#8c8c8c"/>
<text x="154" y="50.3" font-size="20.5" fill="#9a9a9a" stroke="#9a9a9a" stroke-width="0.35" letter-spacing="0.6">9</text>
<rect x="274" y="42" width="2" height="12" fill="#8c8c8c"/>
<rect x="274" y="42" width="4" height="2" fill="#8c8c8c"/>
<text x="284" y="50.3" font-size="20.5" fill="#9a9a9a" stroke="#9a9a9a" stroke-width="0.35" letter-spacing="0.6">17</text>
<rect x="402" y="42" width="2" height="12" fill="#8c8c8c"/>
<rect x="402" y="42" width="4" height="2" fill="#8c8c8c"/>
<text x="412" y="50.3" font-size="20.5" fill="#9a9a9a" stroke="#9a9a9a" stroke-width="0.35" letter-spacing="0.6">25</text>
<rect x="532" y="42" width="2" height="12" fill="#8c8c8c"/>
<rect x="532" y="42" width="4" height="2" fill="#8c8c8c"/>
<text x="542" y="50.3" font-size="20.5" fill="#9a9a9a" stroke="#9a9a9a" stroke-width="0.35" letter-spacing="0.6">33</text>
<rect x="662" y="42" width="2" height="12" fill="#8c8c8c"/>
<rect x="662" y="42" width="4" height="2" fill="#8c8c8c"/>
<text x="672" y="50.3" font-size="20.5" fill="#9a9a9a" stroke="#9a9a9a" stroke-width="0.35" letter-spacing="0.6">41</text>
<rect x="792" y="42" width="2" height="12" fill="#8c8c8c"/>
<rect x="792" y="42" width="4" height="2" fill="#8c8c8c"/>
<text x="802" y="50.3" font-size="20.5" fill="#9a9a9a" stroke="#9a9a9a" stroke-width="0.35" letter-spacing="0.6">49</text>
<rect x="920" y="42" width="2" height="12" fill="#8c8c8c"/>
<rect x="920" y="42" width="4" height="2" fill="#8c8c8c"/>
<text x="930" y="50.3" font-size="20.5" fill="#9a9a9a" stroke="#9a9a9a" stroke-width="0.35" letter-spacing="0.6">57</text>
<rect x="1050" y="42" width="2" height="12" fill="#8c8c8c"/>
<rect x="1050" y="42" width="4" height="2" fill="#8c8c8c"/>
<text x="1060" y="50.3" font-size="20.5" fill="#9a9a9a" stroke="#9a9a9a" stroke-width="0.35" letter-spacing="0.6">65</text>
<rect x="1180" y="42" width="2" height="12" fill="#8c8c8c"/>
<rect x="1180" y="42" width="4" height="2" fill="#8c8c8c"/>
<text x="1190" y="50.3" font-size="20.5" fill="#9a9a9a" stroke="#9a9a9a" stroke-width="0.35" letter-spacing="0.6">73</text>
<rect x="1310" y="42" width="2" height="12" fill="#8c8c8c"/>
<rect x="1310" y="42" width="4" height="2" fill="#8c8c8c"/>
<text x="1320" y="50.3" font-size="20.5" fill="#9a9a9a" stroke="#9a9a9a" stroke-width="0.35" letter-spacing="0.6">81</text>
<rect x="1438" y="42" width="2" height="12" fill="#8c8c8c"/>
<rect x="1438" y="42" width="4" height="2" fill="#8c8c8c"/>
<text x="1448" y="50.3" font-size="20.5" fill="#9a9a9a" stroke="#9a9a9a" stroke-width="0.35" letter-spacing="0.6">89</text>
<rect x="1568" y="42" width="2" height="12" fill="#8c8c8c"/>
<rect x="1568" y="42" width="4" height="2" fill="#8c8c8c"/>
<text x="1578" y="50.3" font-size="20.5" fill="#9a9a9a" stroke="#9a9a9a" stroke-width="0.35" letter-spacing="0.6">97</text>
<rect x="1698" y="42" width="2" height="12" fill="#8c8c8c"/>
<rect x="1698" y="42" width="4" height="2" fill="#8c8c8c"/>
<text x="1708" y="50.3" font-size="20.5" fill="#9a9a9a" stroke="#9a9a9a" stroke-width="0.35" letter-spacing="0.6">105</text>
<rect x="1828" y="42" width="2" height="12" fill="#8c8c8c"/>
<rect x="1828" y="42" width="4" height="2" fill="#8c8c8c"/>
<text x="1838" y="50.3" font-size="20.5" fill="#9a9a9a" stroke="#9a9a9a" stroke-width="0.35" letter-spacing="0.6">113</text>
<rect x="1958" y="42" width="2" height="12" fill="#8c8c8c"/>
<rect x="1958" y="42" width="4" height="2" fill="#8c8c8c"/>
<text x="1968" y="50.3" font-size="20.5" fill="#9a9a9a" stroke="#9a9a9a" stroke-width="0.35" letter-spacing="0.6">121</text>
<rect x="2086" y="42" width="2" height="12" fill="#8c8c8c"/>
<rect x="2086" y="42" width="4" height="2" fill="#8c8c8c"/>
<text x="2096" y="50.3" font-size="20.5" fill="#9a9a9a" stroke="#9a9a9a" stroke-width="0.35" letter-spacing="0.6">129</text>
<rect x="2216" y="42" width="2" height="12" fill="#8c8c8c"/>
<rect x="2216" y="42" width="4" height="2" fill="#8c8c8c"/>
<text x="2226" y="50.3" font-size="20.5" fill="#9a9a9a" stroke="#9a9a9a" stroke-width="0.35" letter-spacing="0.6">137</text>
<rect x="2346" y="42" width="2" height="12" fill="#8c8c8c"/>
<rect x="2346" y="42" width="4" height="2" fill="#8c8c8c"/>
<text x="2356" y="50.3" font-size="20.5" fill="#9a9a9a" stroke="#9a9a9a" stroke-width="0.35" letter-spacing="0.6">145</text>
<rect x="78" y="52" width="2" height="2" fill="#8c8c8c"/>
<rect x="208" y="52" width="2" height="2" fill="#8c8c8c"/>
<rect x="338" y="52" width="2" height="2" fill="#8c8c8c"/>
<rect x="468" y="52" width="2" height="2" fill="#8c8c8c"/>
<rect x="596" y="52" width="2" height="2" fill="#8c8c8c"/>
<rect x="726" y="52" width="2" height="2" fill="#8c8c8c"/>
<rect x="856" y="52" width="2" height="2" fill="#8c8c8c"/>
<rect x="986" y="52" width="2" height="2" fill="#8c8c8c"/>
<rect x="1116" y="52" width="2" height="2" fill="#8c8c8c"/>
<rect x="1244" y="52" width="2" height="2" fill="#8c8c8c"/>
<rect x="1374" y="52" width="2" height="2" fill="#8c8c8c"/>
<rect x="1504" y="52" width="2" height="2" fill="#8c8c8c"/>
<rect x="1634" y="52" width="2" height="2" fill="#8c8c8c"/>
<rect x="1762" y="52" width="2" height="2" fill="#8c8c8c"/>
<rect x="1892" y="52" width="2" height="2" fill="#8c8c8c"/>
<rect x="2022" y="52" width="2" height="2" fill="#8c8c8c"/>
<rect x="2152" y="52" width="2" height="2" fill="#8c8c8c"/>
<rect x="2282" y="52" width="2" height="2" fill="#8c8c8c"/>
<rect x="14" y="54" width="2366" height="22" fill="#989898"/>
<rect x="16" y="56" width="2362" height="18" fill="#5e5e5e"/>
<path d="M16.5 57 L30 65 L16.5 73" fill="#5e5e5e" stroke="#8e8e8e" stroke-width="1.6"/>
<path d="M2377.5 57 L2364 65 L2377.5 73" fill="#5e5e5e" stroke="#8e8e8e" stroke-width="1.6"/>
<path d="M16 90 L22 90 L16 97 Z" fill="#43c7e0"/>
<path d="M14 1434 L22 1442 L14 1442 Z" fill="#43c7e0"/>
<rect x="1590" y="78" width="50" height="19" fill="#3b3b3b"/>
<path d="M1571 79 L1584.5 87.3 L1571 95.6 Z" fill="#555" stroke="#9c9c9c" stroke-width="1.5"/>
<text x="1593" y="94" font-size="19.5" fill="#c4c4c4" stroke="#c4c4c4" stroke-width="0.3" textLength="47" lengthAdjust="spacingAndGlyphs">Drop</text>
<rect x="14" y="1432" width="2" height="16" fill="#808080"/>
<rect x="14" y="1446" width="4" height="2" fill="#808080"/>
<text x="20.3" y="1454.3" font-size="19.5" fill="#9c9c9c" stroke="#9c9c9c" stroke-width="0.25" textLength="41.3" lengthAdjust="spacingAndGlyphs">0:00</text>
<rect x="56" y="1432" width="2" height="4" fill="#8c8c8c"/>
<rect x="96" y="1432" width="2" height="4" fill="#8c8c8c"/>
<rect x="138" y="1432" width="2" height="4" fill="#8c8c8c"/>
<rect x="178" y="1432" width="2" height="16" fill="#808080"/>
<rect x="178" y="1446" width="4" height="2" fill="#808080"/>
<text x="184.3" y="1454.3" font-size="19.5" fill="#9c9c9c" stroke="#9c9c9c" stroke-width="0.25" textLength="41.3" lengthAdjust="spacingAndGlyphs">0:20</text>
<rect x="220" y="1432" width="2" height="4" fill="#8c8c8c"/>
<rect x="260" y="1432" width="2" height="4" fill="#8c8c8c"/>
<rect x="302" y="1432" width="2" height="4" fill="#8c8c8c"/>
<rect x="344" y="1432" width="2" height="16" fill="#808080"/>
<rect x="344" y="1446" width="4" height="2" fill="#808080"/>
<text x="350.3" y="1454.3" font-size="19.5" fill="#9c9c9c" stroke="#9c9c9c" stroke-width="0.25" textLength="41.3" lengthAdjust="spacingAndGlyphs">0:40</text>
<rect x="384" y="1432" width="2" height="4" fill="#8c8c8c"/>
<rect x="426" y="1432" width="2" height="4" fill="#8c8c8c"/>
<rect x="466" y="1432" width="2" height="4" fill="#8c8c8c"/>
<rect x="508" y="1432" width="2" height="16" fill="#808080"/>
<rect x="508" y="1446" width="4" height="2" fill="#808080"/>
<text x="514.3" y="1454.3" font-size="19.5" fill="#9c9c9c" stroke="#9c9c9c" stroke-width="0.25" textLength="41.3" lengthAdjust="spacingAndGlyphs">1:00</text>
<rect x="548" y="1432" width="2" height="4" fill="#8c8c8c"/>
<rect x="590" y="1432" width="2" height="4" fill="#8c8c8c"/>
<rect x="632" y="1432" width="2" height="4" fill="#8c8c8c"/>
<rect x="672" y="1432" width="2" height="16" fill="#808080"/>
<rect x="672" y="1446" width="4" height="2" fill="#808080"/>
<text x="678.3" y="1454.3" font-size="19.5" fill="#9c9c9c" stroke="#9c9c9c" stroke-width="0.25" textLength="41.3" lengthAdjust="spacingAndGlyphs">1:20</text>
<rect x="714" y="1432" width="2" height="4" fill="#8c8c8c"/>
<rect x="754" y="1432" width="2" height="4" fill="#8c8c8c"/>
<rect x="796" y="1432" width="2" height="4" fill="#8c8c8c"/>
<rect x="838" y="1432" width="2" height="16" fill="#808080"/>
<rect x="838" y="1446" width="4" height="2" fill="#808080"/>
<text x="844.3" y="1454.3" font-size="19.5" fill="#9c9c9c" stroke="#9c9c9c" stroke-width="0.25" textLength="41.3" lengthAdjust="spacingAndGlyphs">1:40</text>
<rect x="878" y="1432" width="2" height="4" fill="#8c8c8c"/>
<rect x="920" y="1432" width="2" height="4" fill="#8c8c8c"/>
<rect x="960" y="1432" width="2" height="4" fill="#8c8c8c"/>
<rect x="1002" y="1432" width="2" height="16" fill="#808080"/>
<rect x="1002" y="1446" width="4" height="2" fill="#808080"/>
<text x="1008.3" y="1454.3" font-size="19.5" fill="#9c9c9c" stroke="#9c9c9c" stroke-width="0.25" textLength="41.3" lengthAdjust="spacingAndGlyphs">2:00</text>
<rect x="1042" y="1432" width="2" height="4" fill="#8c8c8c"/>
<rect x="1084" y="1432" width="2" height="4" fill="#8c8c8c"/>
<rect x="1126" y="1432" width="2" height="4" fill="#8c8c8c"/>
<rect x="1166" y="1432" width="2" height="16" fill="#808080"/>
<rect x="1166" y="1446" width="4" height="2" fill="#808080"/>
<text x="1172.3" y="1454.3" font-size="19.5" fill="#9c9c9c" stroke="#9c9c9c" stroke-width="0.25" textLength="41.3" lengthAdjust="spacingAndGlyphs">2:20</text>
<rect x="1208" y="1432" width="2" height="4" fill="#8c8c8c"/>
<rect x="1248" y="1432" width="2" height="4" fill="#8c8c8c"/>
<rect x="1290" y="1432" width="2" height="4" fill="#8c8c8c"/>
<rect x="1332" y="1432" width="2" height="16" fill="#808080"/>
<rect x="1332" y="1446" width="4" height="2" fill="#808080"/>
<text x="1338.3" y="1454.3" font-size="19.5" fill="#9c9c9c" stroke="#9c9c9c" stroke-width="0.25" textLength="41.3" lengthAdjust="spacingAndGlyphs">2:40</text>
<rect x="1372" y="1432" width="2" height="4" fill="#8c8c8c"/>
<rect x="1414" y="1432" width="2" height="4" fill="#8c8c8c"/>
<rect x="1454" y="1432" width="2" height="4" fill="#8c8c8c"/>
<rect x="1496" y="1432" width="2" height="16" fill="#808080"/>
<rect x="1496" y="1446" width="4" height="2" fill="#808080"/>
<text x="1502.3" y="1454.3" font-size="19.5" fill="#9c9c9c" stroke="#9c9c9c" stroke-width="0.25" textLength="41.3" lengthAdjust="spacingAndGlyphs">3:00</text>
<rect x="1536" y="1432" width="2" height="4" fill="#8c8c8c"/>
<rect x="1578" y="1432" width="2" height="4" fill="#8c8c8c"/>
<rect x="1620" y="1432" width="2" height="4" fill="#8c8c8c"/>
<rect x="1660" y="1432" width="2" height="16" fill="#808080"/>
<rect x="1660" y="1446" width="4" height="2" fill="#808080"/>
<text x="1666.3" y="1454.3" font-size="19.5" fill="#9c9c9c" stroke="#9c9c9c" stroke-width="0.25" textLength="41.3" lengthAdjust="spacingAndGlyphs">3:20</text>
<rect x="1702" y="1432" width="2" height="4" fill="#8c8c8c"/>
<rect x="1742" y="1432" width="2" height="4" fill="#8c8c8c"/>
<rect x="1784" y="1432" width="2" height="4" fill="#8c8c8c"/>
<rect x="1824" y="1432" width="2" height="16" fill="#808080"/>
<rect x="1824" y="1446" width="4" height="2" fill="#808080"/>
<text x="1830.3" y="1454.3" font-size="19.5" fill="#9c9c9c" stroke="#9c9c9c" stroke-width="0.25" textLength="41.3" lengthAdjust="spacingAndGlyphs">3:40</text>
<rect x="1866" y="1432" width="2" height="4" fill="#8c8c8c"/>
<rect x="1908" y="1432" width="2" height="4" fill="#8c8c8c"/>
<rect x="1948" y="1432" width="2" height="4" fill="#8c8c8c"/>
<rect x="1990" y="1432" width="2" height="16" fill="#808080"/>
<rect x="1990" y="1446" width="4" height="2" fill="#808080"/>
<text x="1996.3" y="1454.3" font-size="19.5" fill="#9c9c9c" stroke="#9c9c9c" stroke-width="0.25" textLength="41.3" lengthAdjust="spacingAndGlyphs">4:00</text>
<rect x="2030" y="1432" width="2" height="4" fill="#8c8c8c"/>
<rect x="2072" y="1432" width="2" height="4" fill="#8c8c8c"/>
<rect x="2114" y="1432" width="2" height="4" fill="#8c8c8c"/>
<rect x="2154" y="1432" width="2" height="16" fill="#808080"/>
<rect x="2154" y="1446" width="4" height="2" fill="#808080"/>
<text x="2160.3" y="1454.3" font-size="19.5" fill="#9c9c9c" stroke="#9c9c9c" stroke-width="0.25" textLength="41.3" lengthAdjust="spacingAndGlyphs">4:20</text>
<rect x="2196" y="1432" width="2" height="4" fill="#8c8c8c"/>
<rect x="2236" y="1432" width="2" height="4" fill="#8c8c8c"/>
<rect x="2278" y="1432" width="2" height="4" fill="#8c8c8c"/>
<rect x="2318" y="1432" width="2" height="16" fill="#808080"/>
<rect x="2318" y="1446" width="4" height="2" fill="#808080"/>
<text x="2324.3" y="1454.3" font-size="19.5" fill="#9c9c9c" stroke="#9c9c9c" stroke-width="0.25" textLength="41.3" lengthAdjust="spacingAndGlyphs">4:40</text>
<rect x="2360" y="1432" width="2" height="4" fill="#8c8c8c"/>
<rect x="2402" y="1432" width="2" height="4" fill="#8c8c8c"/>
<text x="2346" y="1420" font-size="33" fill="#6a6a6a" textLength="53.5" lengthAdjust="spacingAndGlyphs" font-weight="bold">4/1</text>
<rect x="2378" y="1394" width="2" height="38" fill="#8e8e8e"/>
<rect x="2410" y="102" width="206" height="34" fill="#fdf264"/>
<circle cx="2427" cy="119" r="12" fill="none" stroke="#3a3612" stroke-width="2"/>
<rect x="2422" y="114" width="10" height="2" fill="#3a3612"/>
<rect x="2422" y="118" width="10" height="2" fill="#3a3612"/>
<rect x="2422" y="122" width="10" height="2" fill="#3a3612"/>
<text x="2446.5" y="125.7" font-size="19.2" fill="#3a3612" stroke="#3a3612" stroke-width="0.7" textLength="122.1" lengthAdjust="spacingAndGlyphs">KICK GROUP</text>
<rect x="2410" y="140" width="206" height="70" fill="#ec4a40"/>
<rect x="2410" y="210" width="8" height="260" fill="#ec4a40"/>
<circle cx="2427" cy="157" r="12" fill="none" stroke="#3e0f0c" stroke-width="2"/>
<rect x="2420" y="152" width="10" height="2" fill="#3e0f0c"/>
<rect x="2424" y="156" width="10" height="2" fill="#3e0f0c"/>
<rect x="2424" y="160" width="10" height="2" fill="#3e0f0c"/>
<text x="2446.5" y="163.7" font-size="19.2" fill="#3e0f0c" stroke="#3e0f0c" stroke-width="0.7" textLength="124.5" lengthAdjust="spacingAndGlyphs">BASS GROUP</text>
<rect x="2420" y="214" width="196" height="70" fill="#5990e0"/>
<circle cx="2437" cy="231" r="12" fill="none" stroke="#b6b4b2" stroke-width="2"/>
<path d="M2430.1 228.3 L2443.7 228.3 L2437 237.4 Z" fill="#b6b4b2"/>
<text x="2456.2" y="237.8" font-size="19.5" fill="#b6b4b2" textLength="108.4" lengthAdjust="spacingAndGlyphs" font-weight="bold">BASS BODY</text>
<rect x="2420" y="288" width="196" height="70" fill="#5990e0"/>
<circle cx="2437" cy="305" r="12" fill="none" stroke="#b6b4b2" stroke-width="2"/>
<path d="M2430.1 302.3 L2443.7 302.3 L2437 311.4 Z" fill="#b6b4b2"/>
<text x="2456.2" y="311.8" font-size="19.5" fill="#b6b4b2" textLength="93.5" lengthAdjust="spacingAndGlyphs" font-weight="bold">SUB BASS</text>
<rect x="2420" y="362" width="196" height="34" fill="#5990e0"/>
<circle cx="2437" cy="379" r="12" fill="none" stroke="#b6b4b2" stroke-width="2"/>
<path d="M2434 372.5 L2434 385.7 L2443.1 379 Z" fill="#b6b4b2"/>
<text x="2456.2" y="385.8" font-size="19.5" fill="#b6b4b2" textLength="131.5" lengthAdjust="spacingAndGlyphs" font-weight="bold">BASS ATTACK</text>
<rect x="2420" y="400" width="196" height="70" fill="#5990e0"/>
<circle cx="2437" cy="417" r="12" fill="none" stroke="#b6b4b2" stroke-width="2"/>
<path d="M2430.1 414.3 L2443.7 414.3 L2437 423.4 Z" fill="#b6b4b2"/>
<text x="2456.2" y="423.8" font-size="19.5" fill="#b6b4b2" textLength="131.1" lengthAdjust="spacingAndGlyphs" font-weight="bold">BASS STEREO</text>
<rect x="2410" y="474" width="206" height="34" fill="#7cfb5d"/>
<circle cx="2427" cy="491" r="12" fill="none" stroke="#163c0c" stroke-width="2"/>
<rect x="2422" y="486" width="10" height="2" fill="#163c0c"/>
<rect x="2422" y="490" width="10" height="2" fill="#163c0c"/>
<rect x="2422" y="494" width="10" height="2" fill="#163c0c"/>
<text x="2446.5" y="497.7" font-size="19.2" fill="#163c0c" stroke="#163c0c" stroke-width="0.7" textLength="145.6" lengthAdjust="spacingAndGlyphs">DRUMS GROUP</text>
<rect x="2410" y="512" width="206" height="70" fill="#ec4ccf"/>
<rect x="2410" y="582" width="8" height="222" fill="#ec4ccf"/>
<circle cx="2427" cy="529" r="12" fill="none" stroke="#3e0c36" stroke-width="2"/>
<rect x="2420" y="524" width="10" height="2" fill="#3e0c36"/>
<rect x="2424" y="528" width="10" height="2" fill="#3e0c36"/>
<rect x="2424" y="532" width="10" height="2" fill="#3e0c36"/>
<text x="2446.5" y="535.7" font-size="19.2" fill="#3e0c36" stroke="#3e0c36" stroke-width="0.7" textLength="114.3" lengthAdjust="spacingAndGlyphs">ARP GROUP</text>
<rect x="2420" y="586" width="196" height="70" fill="#5990e0"/>
<circle cx="2437" cy="603" r="12" fill="none" stroke="#b6b4b2" stroke-width="2"/>
<path d="M2430.1 600.3 L2443.7 600.3 L2437 609.4 Z" fill="#b6b4b2"/>
<text x="2456.2" y="609.8" font-size="19.5" fill="#b6b4b2" textLength="95.2" lengthAdjust="spacingAndGlyphs" font-weight="bold">ARP LEAD</text>
<rect x="2420" y="660" width="196" height="70" fill="#5990e0"/>
<circle cx="2437" cy="677" r="12" fill="none" stroke="#b6b4b2" stroke-width="2"/>
<path d="M2430.1 674.3 L2443.7 674.3 L2437 683.4 Z" fill="#b6b4b2"/>
<text x="2456.2" y="683.8" font-size="19.5" fill="#b6b4b2" textLength="97.9" lengthAdjust="spacingAndGlyphs" font-weight="bold">ARP BODY</text>
<rect x="2420" y="734" width="196" height="70" fill="#5990e0"/>
<circle cx="2437" cy="751" r="12" fill="none" stroke="#b6b4b2" stroke-width="2"/>
<path d="M2430.1 748.3 L2443.7 748.3 L2437 757.4 Z" fill="#b6b4b2"/>
<text x="2456.2" y="757.8" font-size="19.5" fill="#b6b4b2" textLength="148.7" lengthAdjust="spacingAndGlyphs" font-weight="bold">ARP AMBIENCE</text>
<rect x="2410" y="808" width="206" height="70" fill="#5990e0"/>
<circle cx="2427" cy="825" r="12" fill="none" stroke="#b6b4b2" stroke-width="2"/>
<path d="M2420.1 822.3 L2433.7 822.3 L2427 831.4 Z" fill="#b6b4b2"/>
<text x="2447.7" y="831.8" font-size="19.5" fill="#b6b4b2" textLength="78.4" lengthAdjust="spacingAndGlyphs" font-weight="bold">STAB BS</text>
<rect x="2410" y="882" width="206" height="70" fill="#bd3a6c"/>
<rect x="2410" y="952" width="8" height="148" fill="#bd3a6c"/>
<circle cx="2427" cy="899" r="12" fill="none" stroke="#f3dbe6" stroke-width="2"/>
<rect x="2420" y="894" width="10" height="2" fill="#f3dbe6"/>
<rect x="2424" y="898" width="10" height="2" fill="#f3dbe6"/>
<rect x="2424" y="902" width="10" height="2" fill="#f3dbe6"/>
<text x="2446.2" y="905.8" font-size="19.5" fill="#f3dbe6" textLength="160.5" lengthAdjust="spacingAndGlyphs" font-weight="bold">LEAD II DROP GR</text>
<rect x="2420" y="956" width="196" height="70" fill="#5990e0"/>
<circle cx="2437" cy="973" r="12" fill="none" stroke="#b6b4b2" stroke-width="2"/>
<path d="M2430.1 970.3 L2443.7 970.3 L2437 979.4 Z" fill="#b6b4b2"/>
<text x="2456.2" y="979.8" font-size="19.5" fill="#b6b4b2" textLength="127.3" lengthAdjust="spacingAndGlyphs" font-weight="bold">LEAD DROP II</text>
<rect x="2420" y="1030" width="196" height="70" fill="#5990e0"/>
<circle cx="2437" cy="1047" r="12" fill="none" stroke="#b6b4b2" stroke-width="2"/>
<path d="M2430.1 1044.3 L2443.7 1044.3 L2437 1053.4 Z" fill="#b6b4b2"/>
<text x="2456.2" y="1053.8" font-size="19.5" fill="#b6b4b2" textLength="142.4" lengthAdjust="spacingAndGlyphs" font-weight="bold">TECHNOLOGIC</text>
<rect x="2433" y="1079" width="8" height="1.5" fill="#b6b4b2"/>
<rect x="2433" y="1083" width="8" height="1.5" fill="#b6b4b2"/>
<rect x="2433" y="1087" width="8" height="1.5" fill="#b6b4b2"/>
<rect x="2410" y="1104" width="206" height="70" fill="#3a3a3a"/>
<rect x="2410" y="1174" width="8" height="148" fill="#3a3a3a"/>
<circle cx="2427" cy="1121" r="12" fill="none" stroke="#e0e0e0" stroke-width="2"/>
<rect x="2420" y="1116" width="10" height="2" fill="#e0e0e0"/>
<rect x="2424" y="1120" width="10" height="2" fill="#e0e0e0"/>
<rect x="2424" y="1124" width="10" height="2" fill="#e0e0e0"/>
<text x="2446.2" y="1127.8" font-size="19.5" fill="#e0e0e0" textLength="163.6" lengthAdjust="spacingAndGlyphs" font-weight="bold">REESE BASS GRO</text>
<rect x="2420" y="1178" width="196" height="70" fill="#5990e0"/>
<circle cx="2437" cy="1195" r="12" fill="none" stroke="#b6b4b2" stroke-width="2"/>
<path d="M2430.1 1192.3 L2443.7 1192.3 L2437 1201.4 Z" fill="#b6b4b2"/>
<text x="2456.2" y="1201.8" font-size="19.5" fill="#b6b4b2" textLength="104.2" lengthAdjust="spacingAndGlyphs" font-weight="bold">REESE SUB</text>
<rect x="2420" y="1252" width="196" height="70" fill="#5990e0"/>
<circle cx="2437" cy="1269" r="12" fill="none" stroke="#b6b4b2" stroke-width="2"/>
<path d="M2430.1 1266.3 L2443.7 1266.3 L2437 1275.4 Z" fill="#b6b4b2"/>
<text x="2456.2" y="1275.8" font-size="19.5" fill="#b6b4b2" textLength="150.6" lengthAdjust="spacingAndGlyphs" font-weight="bold">REESE CRUNCH</text>
<rect x="2410" y="1326" width="206" height="34" fill="#8570de"/>
<circle cx="2427" cy="1343" r="12" fill="none" stroke="#1c1440" stroke-width="2"/>
<rect x="2422" y="1338" width="10" height="2" fill="#1c1440"/>
<rect x="2422" y="1342" width="10" height="2" fill="#1c1440"/>
<rect x="2422" y="1346" width="10" height="2" fill="#1c1440"/>
<text x="2446.5" y="1349.7" font-size="19.2" fill="#1c1440" stroke="#1c1440" stroke-width="0.7" textLength="114.5" lengthAdjust="spacingAndGlyphs">PAD GROUP</text>
<svg x="2410" y="1364" width="206" height="24">
<rect x="0" y="0" width="206" height="40" fill="#858585"/>
<circle cx="17" cy="17" r="12" fill="none" stroke="#2c2c2c" stroke-width="2"/>
<rect x="12" y="12" width="10" height="2" fill="#2c2c2c"/>
<rect x="12" y="16" width="10" height="2" fill="#2c2c2c"/>
<rect x="12" y="20" width="10" height="2" fill="#2c2c2c"/>
<text x="36.5" y="23.7" font-size="19.2" fill="#2c2c2c" stroke="#2c2c2c" stroke-width="0.7" textLength="109.8" lengthAdjust="spacingAndGlyphs">FXs GROUP</text>
</svg>
<rect x="2410" y="1394" width="206" height="34" fill="#ffffff"/>
<circle cx="2427" cy="1411" r="12" fill="none" stroke="#3c3c3c" stroke-width="2"/>
<path d="M2424 1404.5 L2424 1417.7 L2433.1 1411 Z" fill="#3c3c3c"/>
<text x="2448.2" y="1417.8" font-size="19.5" fill="#3a3a3a" stroke="#3a3a3a" stroke-width="0.4" textLength="47.5" lengthAdjust="spacingAndGlyphs">Main</text>
<rect x="2417" y="29" width="56" height="24" rx="12" fill="#1e1e1e" stroke="#1a1a1a" stroke-width="2"/>
<text x="2427.8" y="48.4" font-size="20" fill="#cacaca" stroke="#cacaca" stroke-width="0.4" textLength="33.2" lengthAdjust="spacingAndGlyphs">Set</text>
<rect x="2497" y="29" width="44" height="24" fill="#1e1e1e" stroke="#191919" stroke-width="2"/>
<line x1="2515" y1="45" x2="2523" y2="37.3" stroke="#c2c2c2" stroke-width="2.2"/>
<circle cx="2515" cy="45" r="3.3" fill="#c2c2c2"/><circle cx="2523" cy="37.3" r="3.3" fill="#c2c2c2"/>
<rect x="2551" y="29" width="44" height="24" fill="#df7250" stroke="#111" stroke-width="2"/>
<rect x="2566" y="40.4" width="14" height="7.3" fill="#060606"/>
<path d="M2568.7 41 L2568.7 38.5 A4.3 4.3 0 0 1 2577.3 38.5 L2577.3 41" fill="none" stroke="#060606" stroke-width="2.3"/>
<circle cx="2429" cy="77" r="12" fill="#1e1e1e" stroke="#191919" stroke-width="2"/>
<circle cx="2461" cy="77" r="12" fill="#1e1e1e" stroke="#191919" stroke-width="2"/>
<path d="M2422 77 L2429.8 71.2 L2429.8 75.9 L2436 75.9 L2436 78.2 L2429.8 78.2 L2429.8 82.9 Z" fill="#7c7c7c"/>
<path d="M2468 77 L2460.2 71.2 L2460.2 75.9 L2454 75.9 L2454 78.2 L2460.2 78.2 L2460.2 82.9 Z" fill="#cacaca"/>
<rect x="2411" y="1441" width="28" height="24" fill="#f2b263" stroke="#111" stroke-width="2"/>
<rect x="2416" y="1450" width="2" height="6" fill="#0a0a0a"/>
<rect x="2420" y="1446" width="2" height="14" fill="#0a0a0a"/>
<rect x="2424" y="1444" width="2" height="18" fill="#0a0a0a"/>
<rect x="2428" y="1448" width="2" height="10" fill="#0a0a0a"/>
<rect x="2432" y="1450" width="2" height="6" fill="#0a0a0a"/>
<rect x="2447" y="1441" width="68" height="24" fill="#1e1e1e" stroke="#111" stroke-width="2"/>
<rect x="2448" y="1442" width="20" height="22" fill="#31758a"/>
<text x="2454.5" y="1460" font-size="19.5" fill="#b8b8b8" textLength="52" lengthAdjust="spacingAndGlyphs">1.00x</text>
<rect x="2549" y="1441" width="28" height="24" fill="#1e1e1e" stroke="#191919" stroke-width="2"/>
<rect x="2585" y="1441" width="28" height="24" fill="#1e1e1e" stroke="#191919" stroke-width="2"/>
<text x="2556" y="1460" font-size="19.5" fill="#b8b8b8" stroke="#b8b8b8" stroke-width="0.3">H</text>
<text x="2589.5" y="1460" font-size="19.5" fill="#b8b8b8" stroke="#b8b8b8" stroke-width="0.3">W</text>
</g>
</svg>
</div>
</body></html>
